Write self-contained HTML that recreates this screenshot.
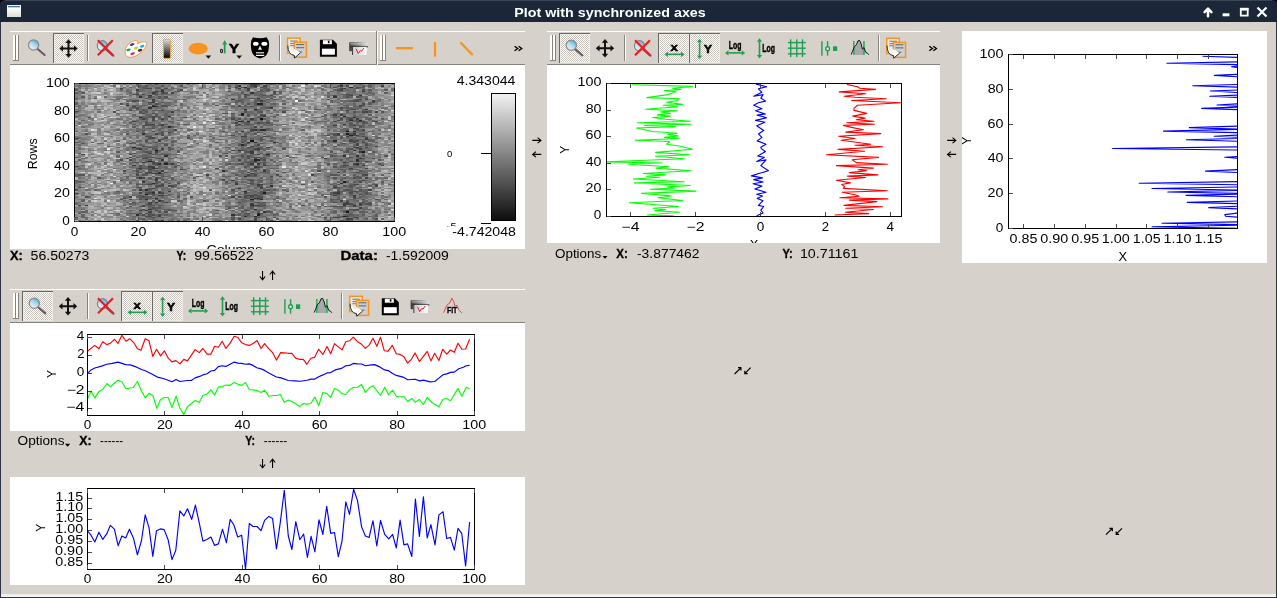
<!DOCTYPE html>
<html><head><meta charset="utf-8"><title>Plot with synchronized axes</title>
<style>
html,body{margin:0;padding:0;width:1277px;height:598px;overflow:hidden;background:#d6d2cb;}
svg{display:block;font-family:"Liberation Sans", sans-serif;will-change:transform;}
</style></head><body>
<svg width="1277" height="598" viewBox="0 0 1277 598">
<rect x="0" y="0" width="1277" height="598" fill="#d6d2cb"/>
<rect x="0" y="0" width="6" height="6" fill="#000"/>
<rect x="1271" y="0" width="6" height="6" fill="#000"/>
<path d="M0 22V5Q0 0 5 0H1272Q1277 0 1277 5V22Z" fill="#1b2639"/>
<rect x="5" y="0" width="1267" height="1" fill="#3b4558"/>
<rect x="0" y="22" width="1" height="576" fill="#2a3444"/>
<rect x="1276" y="22" width="1" height="576" fill="#2a3444"/>
<rect x="1" y="594" width="1275" height="3" fill="#efeeeb"/>
<rect x="1" y="596" width="1275" height="1" fill="#fafaf9"/>
<rect x="0" y="597" width="1277" height="1" fill="#2a3444"/>
<rect x="7" y="5" width="14" height="12" fill="url(#wicon)"/>
<rect x="8" y="6" width="12" height="1.3" fill="#4a6fb0"/>
<text x="610.00" y="17.20" font-size="13" text-anchor="middle" font-weight="bold" textLength="191.50" lengthAdjust="spacingAndGlyphs" fill="#fff" >Plot with synchronized axes</text>
<path d="M1208 16.2V10.5M1204.6 12.2L1208 8.6L1211.4 12.2" stroke="#fff" stroke-width="2.5" fill="none" stroke-linejoin="round" stroke-linecap="round"/>
<rect x="1222.6" y="13.3" width="6.8" height="3" fill="#fff"/>
<rect x="1240.8" y="8.7" width="6.9" height="6.9" fill="none" stroke="#fff" stroke-width="1.8"/>
<rect x="1240" y="8" width="8.4" height="2.6" fill="#fff"/>
<path d="M1257.5 7.5L1266.5 16.5M1266.5 7.5L1257.5 16.5" stroke="#fff" stroke-width="2.2"/>
<defs><pattern id="chk" width="2" height="2" patternUnits="userSpaceOnUse"><rect width="2" height="2" fill="#ffffff"/><rect width="1" height="1" fill="#c9c5be"/><rect x="1" y="1" width="1" height="1" fill="#c9c5be"/></pattern><linearGradient id="lens" x1="0.75" y1="0.1" x2="0.2" y2="0.9"><stop offset="0" stop-color="#4ab4e4"/><stop offset="0.4" stop-color="#a9d8ec"/><stop offset="1" stop-color="#f4f6f4"/></linearGradient><linearGradient id="cbg" x1="0" y1="0" x2="0" y2="1"><stop offset="0" stop-color="#ddd"/><stop offset="1" stop-color="#000"/></linearGradient><linearGradient id="wicon" x1="0" y1="0" x2="0" y2="1"><stop offset="0" stop-color="#f4f4f2"/><stop offset="0.3" stop-color="#ffffff"/><stop offset="1" stop-color="#dcdcd6"/></linearGradient><linearGradient id="cbar" x1="0" y1="0" x2="0" y2="1"><stop offset="0" stop-color="#f2f2f2"/><stop offset="1" stop-color="#0d0d0d"/></linearGradient><linearGradient id="prh" x1="0" y1="0" x2="1" y2="0"><stop offset="0" stop-color="#3c3c3c"/><stop offset="0.5" stop-color="#8a8a8a"/><stop offset="1" stop-color="#e0e0e0"/></linearGradient><linearGradient id="prp" x1="0" y1="0" x2="1" y2="0"><stop offset="0" stop-color="#c8c8c8"/><stop offset="1" stop-color="#ffffff"/></linearGradient><clipPath id="c4"><rect x="607" y="84" width="294" height="132"/></clipPath><clipPath id="c2"><rect x="88" y="335" width="386" height="80"/></clipPath><clipPath id="c3"><rect x="88" y="489" width="386" height="80"/></clipPath><clipPath id="c5"><rect x="1009" y="55" width="228" height="173"/></clipPath><clipPath id="p1"><rect x="10" y="65" width="515" height="184"/></clipPath><clipPath id="p4"><rect x="547" y="65" width="393" height="178"/></clipPath></defs>
<rect x="10" y="31" width="366" height="1" fill="#fff"/>
<rect x="10" y="64" width="366" height="1" fill="#86837d"/>
<rect x="376" y="31" width="1" height="34" fill="#86837d"/>
<rect x="377" y="31" width="1" height="34" fill="#fff"/>
<rect x="378" y="31" width="147" height="1" fill="#fff"/>
<rect x="378" y="64" width="147" height="1" fill="#86837d"/>
<rect x="13" y="35" width="2" height="26" fill="#fff"/>
<rect x="15" y="35" width="1" height="26" fill="#86837d"/>
<rect x="16" y="35" width="2" height="26" fill="#fff"/>
<rect x="18" y="35" width="1" height="26" fill="#86837d"/>
<rect x="13" y="60" width="6" height="1" fill="#86837d"/>
<line x1="37.1" y1="48.5" x2="44.6" y2="55" stroke="#6e5a66" stroke-width="2.2" stroke-linecap="round"/>
<circle cx="33.6" cy="45" r="5.1" fill="url(#lens)" stroke="#8f8489" stroke-width="1.2"/>
<rect x="53" y="33" width="31" height="30" fill="url(#chk)"/>
<rect x="54" y="34" width="29" height="1" fill="#ecebe7"/>
<rect x="54" y="34" width="1" height="28" fill="#ecebe7"/>
<rect x="53" y="33" width="31" height="1" fill="#6a6762"/>
<rect x="53" y="33" width="1" height="30" fill="#6a6762"/>
<rect x="83" y="34" width="1" height="29" fill="#ecebe8"/>
<rect x="54" y="62" width="30" height="1" fill="#ecebe8"/>
<path d="M68.5 41.5V55.5M61.5 48.5H75.5" stroke="#111" stroke-width="2"/>
<path d="M65.3 43.0L68.5 39.3L71.7 43.0Z M65.3 54.0L68.5 57.7L71.7 54.0Z M63.0 45.3L59.3 48.5L63.0 51.7Z M74.0 45.3L77.7 48.5L74.0 51.7Z" fill="#111"/>
<rect x="87" y="35" width="1" height="26" fill="#86837d"/>
<rect x="88" y="35" width="1" height="26" fill="#fff"/>
<line x1="105.8" y1="49.2" x2="113.3" y2="55.7" stroke="#6e5a66" stroke-width="2.2" stroke-linecap="round"/>
<circle cx="102.3" cy="45.7" r="5.1" fill="url(#lens)" stroke="#8f8489" stroke-width="1.2"/>
<path d="M97.8 40.2L112.8 55.2M112.8 40.2L97.8 55.2" stroke="#ec1c24" stroke-width="2.2"/>
<path d="M125.2 50.7C126.2 44.7 131.2 40.7 136.2 40.5C138.2 40.5 138.2 42.7 137.2 44.2C140.2 41.7 145.2 40.7 146.4 43.2C147.2 46.7 141.2 54.7 132.2 57.2C126.2 58.2 124.5 53.7 125.2 50.7Z" fill="#fff" stroke="#f39a3a" stroke-width="1"/>
<ellipse cx="132.2" cy="44.5" rx="2.3" ry="1.25" transform="rotate(-17 132.2 44.5)" fill="#6a2aa8"/>
<ellipse cx="136.1" cy="48.0" rx="2.3" ry="1.25" transform="rotate(-17 136.1 48.0)" fill="#c5d417"/>
<ellipse cx="142.2" cy="46.2" rx="2.3" ry="1.25" transform="rotate(-17 142.2 46.2)" fill="#1ea8e6"/>
<ellipse cx="128.5" cy="49.900000000000006" rx="2.3" ry="1.25" transform="rotate(-17 128.5 49.900000000000006)" fill="#16a340"/>
<ellipse cx="140.0" cy="50.300000000000004" rx="2.3" ry="1.25" transform="rotate(-17 140.0 50.300000000000004)" fill="#333"/>
<ellipse cx="132.6" cy="53.6" rx="2.3" ry="1.25" transform="rotate(-17 132.6 53.6)" fill="#e8127a"/>
<rect x="152" y="33" width="31" height="30" fill="url(#chk)"/>
<rect x="153" y="34" width="29" height="1" fill="#ecebe7"/>
<rect x="153" y="34" width="1" height="28" fill="#ecebe7"/>
<rect x="152" y="33" width="31" height="1" fill="#6a6762"/>
<rect x="152" y="33" width="1" height="30" fill="#6a6762"/>
<rect x="182" y="34" width="1" height="29" fill="#ecebe8"/>
<rect x="153" y="62" width="30" height="1" fill="#ecebe8"/>
<rect x="163.4" y="39.3" width="7" height="19" rx="1" fill="url(#cbg)" stroke="#f3a03c" stroke-width="1"/>
<rect x="170.4" y="41.3" width="1.6" height="1" fill="#f3a03c"/>
<rect x="170.4" y="45.9" width="1.6" height="1" fill="#f3a03c"/>
<rect x="170.4" y="50.5" width="1.6" height="1" fill="#f3a03c"/>
<rect x="170.4" y="55.099999999999994" width="1.6" height="1" fill="#f3a03c"/>
<ellipse cx="198.2" cy="48.699999999999996" rx="9.6" ry="5.9" fill="#f7941d"/>
<path d="M205.6 55.5H211.2L208.4 58.8Z" fill="#111"/>
<text x="220.00" y="53.40" font-size="6" text-anchor="start" font-weight="bold" textLength="3.00" lengthAdjust="spacingAndGlyphs" stroke="#000" stroke-width="0.3">0</text>
<path d="M224.7 53.4V42.4" stroke="#1ca050" stroke-width="1.8"/>
<path d="M222.3 44.4L224.7 39.9L227.1 44.4Z" fill="#1ca050"/>
<text x="229.00" y="53.40" font-size="13.5" text-anchor="start" font-weight="bold" textLength="10.00" lengthAdjust="spacingAndGlyphs" stroke="#000" stroke-width="0.7">Y</text>
<path d="M236.4 55.4H242L239.2 58.7Z" fill="#111"/>
<path d="M253.0 37.2Q260.0 39.4 266.59999999999997 37.2Q269.8 41 268.9 47Q268.8 57 260.0 58.4Q251.2 57 251.0 47Q250.2 41 253.0 37.2Z" fill="#000"/>
<ellipse cx="255.79999999999998" cy="43.7" rx="2.8" ry="2.0" fill="#fff"/>
<ellipse cx="264.4" cy="43.7" rx="3.0" ry="2.0" fill="#fff"/>
<path d="M260.0 46.2L261.59999999999997 49.6H258.4Z" fill="#fff" stroke="#fff" stroke-width="0.5" stroke-linejoin="round"/>
<rect x="256.0" y="52.2" width="8" height="1.2" fill="#e8e8e8"/>
<rect x="256.0" y="54.8" width="8.2" height="1.2" fill="#fff"/>
<rect x="279" y="35" width="1" height="26" fill="#86837d"/>
<rect x="280" y="35" width="1" height="26" fill="#fff"/>
<rect x="287.5" y="38.1" width="12.6" height="15.2" fill="#e9ebef" stroke="#f7941d" stroke-width="1.5"/>
<rect x="290.20000000000005" y="40.5" width="7.7" height="1.1" fill="#7d7d80"/>
<rect x="290.20000000000005" y="42.900000000000006" width="7.7" height="1.1" fill="#7d7d80"/>
<rect x="290.20000000000005" y="45.0" width="6" height="1.1" fill="#7d7d80"/>
<rect x="294.20000000000005" y="42.2" width="12.2" height="15.0" fill="#cdcdd2" stroke="#f7941d" stroke-width="1.5"/>
<rect x="296.20000000000005" y="44.0" width="8" height="1.1" fill="#6d6d70"/>
<rect x="296.20000000000005" y="47.1" width="8" height="1.1" fill="#6d6d70"/>
<rect x="296.20000000000005" y="51.5" width="6" height="1.1" fill="#6d6d70"/>
<path d="M287.8 45.5Q289.6 50.0 293.40000000000003 51.0L293.20000000000005 48.2L300.40000000000003 52.800000000000004L294.6 58.0L294.3 55.400000000000006Q288.0 54.800000000000004 287.8 45.5Z" fill="#fff"/>
<path d="M287.8 45.5Q288.0 54.800000000000004 294.3 55.400000000000006L294.6 58.0L300.40000000000003 52.800000000000004" fill="none" stroke="#111" stroke-width="0.9"/>
<path d="M319.9 39.7H332.9L336.9 43.7V56.7H319.9Z" fill="#000"/>
<rect x="321.9" y="48.7" width="13" height="6" fill="#fff"/>
<rect x="322.9" y="40.2" width="9" height="4" fill="#fff"/>
<rect x="327.9" y="40.7" width="1.6" height="2.5" fill="#000"/>
<rect x="349.2" y="42.2" width="18.8" height="9" rx="0.8" fill="url(#prh)"/>
<rect x="350.2" y="43.2" width="17" height="1.3" fill="#e8e8e8" opacity="0.55"/>
<rect x="350.5" y="46.2" width="17.5" height="1.3" fill="#2a2a2a" opacity="0.8"/>
<rect x="352" y="47" width="14.5" height="8" fill="url(#prp)"/>
<rect x="352" y="47" width="0.9" height="8" fill="#333"/>
<path d="M356.2 48.8L358.2 53.6L360.4 50.4L361.6 51.2L363.9 48" stroke="#e8202a" stroke-width="1" fill="none" stroke-linejoin="round"/>
<rect x="380" y="35" width="2" height="26" fill="#fff"/>
<rect x="382" y="35" width="1" height="26" fill="#86837d"/>
<rect x="383" y="35" width="2" height="26" fill="#fff"/>
<rect x="385" y="35" width="1" height="26" fill="#86837d"/>
<rect x="380" y="60" width="6" height="1" fill="#86837d"/>
<rect x="396" y="47" width="17" height="2.4" fill="#f7941d"/>
<rect x="433.9" y="41.9" width="2.3" height="14.8" fill="#f7941d"/>
<line x1="461" y1="43" x2="472" y2="54.3" stroke="#f7941d" stroke-width="2.4" stroke-linecap="round"/>
<path d="M514.5999999999999 46.3L517.6999999999999 48.5L514.5999999999999 50.699999999999996M518.5999999999999 46.3L521.6999999999999 48.5L518.5999999999999 50.699999999999996" stroke="#000" stroke-width="1.4" fill="none"/>
<rect x="547" y="31" width="393" height="1" fill="#fff"/>
<rect x="547" y="64" width="393" height="1" fill="#86837d"/>
<rect x="550" y="35" width="2" height="26" fill="#fff"/>
<rect x="552" y="35" width="1" height="26" fill="#86837d"/>
<rect x="553" y="35" width="2" height="26" fill="#fff"/>
<rect x="555" y="35" width="1" height="26" fill="#86837d"/>
<rect x="550" y="60" width="6" height="1" fill="#86837d"/>
<rect x="559" y="33" width="31" height="30" fill="url(#chk)"/>
<rect x="560" y="34" width="29" height="1" fill="#ecebe7"/>
<rect x="560" y="34" width="1" height="28" fill="#ecebe7"/>
<rect x="559" y="33" width="31" height="1" fill="#6a6762"/>
<rect x="559" y="33" width="1" height="30" fill="#6a6762"/>
<rect x="589" y="34" width="1" height="29" fill="#ecebe8"/>
<rect x="560" y="62" width="30" height="1" fill="#ecebe8"/>
<line x1="574.8" y1="48.8" x2="582.3" y2="55.3" stroke="#6e5a66" stroke-width="2.2" stroke-linecap="round"/>
<circle cx="571.3" cy="45.3" r="5.1" fill="url(#lens)" stroke="#8f8489" stroke-width="1.2"/>
<path d="M605 41.2V55.2M598 48.2H612" stroke="#111" stroke-width="2"/>
<path d="M601.8 42.7L605 39.0L608.2 42.7Z M601.8 53.7L605 57.400000000000006L608.2 53.7Z M599.5 45.0L595.8 48.2L599.5 51.400000000000006Z M610.5 45.0L614.2 48.2L610.5 51.400000000000006Z" fill="#111"/>
<rect x="624" y="35" width="1" height="26" fill="#86837d"/>
<rect x="625" y="35" width="1" height="26" fill="#fff"/>
<line x1="643.0" y1="49.2" x2="650.5" y2="55.7" stroke="#6e5a66" stroke-width="2.2" stroke-linecap="round"/>
<circle cx="639.5" cy="45.7" r="5.1" fill="url(#lens)" stroke="#8f8489" stroke-width="1.2"/>
<path d="M635 40.2L650 55.2M650 40.2L635 55.2" stroke="#ec1c24" stroke-width="2.2"/>
<rect x="658" y="33" width="31" height="30" fill="url(#chk)"/>
<rect x="659" y="34" width="29" height="1" fill="#ecebe7"/>
<rect x="659" y="34" width="1" height="28" fill="#ecebe7"/>
<rect x="658" y="33" width="31" height="1" fill="#6a6762"/>
<rect x="658" y="33" width="1" height="30" fill="#6a6762"/>
<rect x="688" y="34" width="1" height="29" fill="#ecebe8"/>
<rect x="659" y="62" width="30" height="1" fill="#ecebe8"/>
<text x="670.40" y="51.00" font-size="9.8" text-anchor="start" font-weight="bold" textLength="7.30" lengthAdjust="spacingAndGlyphs" stroke="#000" stroke-width="0.6">X</text>
<path d="M668.0 54.3H681.0" stroke="#1ca050" stroke-width="1.6"/>
<path d="M664.5 54.3L668.0 51.699999999999996V56.9Z M684.5 54.3L681.0 51.699999999999996V56.9Z" fill="#1ca050"/>
<rect x="689" y="33" width="31" height="30" fill="url(#chk)"/>
<rect x="690" y="34" width="29" height="1" fill="#ecebe7"/>
<rect x="690" y="34" width="1" height="28" fill="#ecebe7"/>
<rect x="689" y="33" width="31" height="1" fill="#6a6762"/>
<rect x="689" y="33" width="1" height="30" fill="#6a6762"/>
<rect x="719" y="34" width="1" height="29" fill="#ecebe8"/>
<rect x="690" y="62" width="30" height="1" fill="#ecebe8"/>
<path d="M699.6 42.3V55.5" stroke="#1ca050" stroke-width="1.6"/>
<path d="M699.6 38.8L697.0 42.3H702.2Z M699.6 59L697.0 55.5H702.2Z" fill="#1ca050"/>
<text x="703.90" y="53.00" font-size="10.8" text-anchor="start" font-weight="bold" textLength="8.00" lengthAdjust="spacingAndGlyphs" stroke="#000" stroke-width="0.6">Y</text>
<text x="728.80" y="49.30" font-size="10" text-anchor="start" font-weight="bold" textLength="12.60" lengthAdjust="spacingAndGlyphs" stroke="#000" stroke-width="0.4">Log</text>
<path d="M728.5 52.9H741.7" stroke="#1ca050" stroke-width="1.6"/>
<path d="M725 52.9L728.5 50.3V55.5Z M745.2 52.9L741.7 50.3V55.5Z" fill="#1ca050"/>
<path d="M759.5 41.8V55.0" stroke="#1ca050" stroke-width="1.6"/>
<path d="M759.5 38.3L756.9 41.8H762.1Z M759.5 58.5L756.9 55.0H762.1Z" fill="#1ca050"/>
<text x="762.30" y="52.30" font-size="10" text-anchor="start" font-weight="bold" textLength="12.70" lengthAdjust="spacingAndGlyphs" stroke="#000" stroke-width="0.4">Log</text>
<rect x="789.9999999999999" y="39.3" width="1.4" height="17.8" fill="#1ca050"/>
<rect x="796.0999999999999" y="39.3" width="1.4" height="17.8" fill="#1ca050"/>
<rect x="801.8" y="39.3" width="1.4" height="17.8" fill="#1ca050"/>
<rect x="787.9" y="41.89999999999999" width="17.9" height="1.4" fill="#1ca050"/>
<rect x="787.9" y="47.49999999999999" width="17.9" height="1.4" fill="#1ca050"/>
<rect x="787.9" y="53.099999999999994" width="17.9" height="1.4" fill="#1ca050"/>
<rect x="821.1999999999999" y="41.2" width="1.4" height="14.5" fill="#1ca050"/>
<rect x="826.9" y="41.2" width="1.4" height="14.5" fill="#1ca050"/>
<circle cx="827.6" cy="48.7" r="1.9" fill="#fff" stroke="#1ca050" stroke-width="1.4"/>
<rect x="833.0" y="46.300000000000004" width="4.2" height="4.7" fill="#1ca050"/>
<path d="M853.80 54.90L853.80 48.30L854.60 46.40L856.40 44.80L858.00 40.80L859.60 40.40L861.20 44.00L862.40 49.20L864.00 47.60L864.00 54.90Z" fill="#a8a8ad"/>
<rect x="853.0" y="41.0" width="1.6" height="13.9" fill="#2bb35c"/>
<rect x="863.1" y="41.0" width="1.7" height="13.9" fill="#2bb35c"/>
<path d="M851.20 54.50L852.60 51.20L854.60 46.40L856.40 44.80L858.00 40.80L859.60 40.40L861.20 44.00L862.40 49.20L864.00 47.60L865.70 52.40L867.30 53.20L868.90 54.70" stroke="#151515" stroke-width="1.0" fill="none" stroke-linejoin="round"/>
<rect x="878" y="35" width="1" height="26" fill="#86837d"/>
<rect x="879" y="35" width="1" height="26" fill="#fff"/>
<rect x="886.6999999999999" y="38.3" width="12.6" height="15.2" fill="#e9ebef" stroke="#f7941d" stroke-width="1.5"/>
<rect x="889.4" y="40.699999999999996" width="7.7" height="1.1" fill="#7d7d80"/>
<rect x="889.4" y="43.1" width="7.7" height="1.1" fill="#7d7d80"/>
<rect x="889.4" y="45.2" width="6" height="1.1" fill="#7d7d80"/>
<rect x="893.4" y="42.4" width="12.2" height="15.0" fill="#cdcdd2" stroke="#f7941d" stroke-width="1.5"/>
<rect x="895.4" y="44.199999999999996" width="8" height="1.1" fill="#6d6d70"/>
<rect x="895.4" y="47.3" width="8" height="1.1" fill="#6d6d70"/>
<rect x="895.4" y="51.7" width="6" height="1.1" fill="#6d6d70"/>
<path d="M887.0 45.7Q888.8 50.2 892.5999999999999 51.2L892.4 48.4L899.5999999999999 53.0L893.8 58.2L893.5 55.599999999999994Q887.1999999999999 55.0 887.0 45.7Z" fill="#fff"/>
<path d="M887.0 45.7Q887.1999999999999 55.0 893.5 55.599999999999994L893.8 58.2L899.5999999999999 53.0" fill="none" stroke="#111" stroke-width="0.9"/>
<path d="M929.3 46.3L932.4 48.5L929.3 50.699999999999996M933.3 46.3L936.4 48.5L933.3 50.699999999999996" stroke="#000" stroke-width="1.4" fill="none"/>
<rect x="10" y="289" width="515" height="1" fill="#fff"/>
<rect x="10" y="322" width="515" height="1" fill="#86837d"/>
<rect x="13" y="293" width="2" height="26" fill="#fff"/>
<rect x="15" y="293" width="1" height="26" fill="#86837d"/>
<rect x="16" y="293" width="2" height="26" fill="#fff"/>
<rect x="18" y="293" width="1" height="26" fill="#86837d"/>
<rect x="13" y="318" width="6" height="1" fill="#86837d"/>
<rect x="22" y="291" width="31" height="30" fill="url(#chk)"/>
<rect x="23" y="292" width="29" height="1" fill="#ecebe7"/>
<rect x="23" y="292" width="1" height="28" fill="#ecebe7"/>
<rect x="22" y="291" width="31" height="1" fill="#6a6762"/>
<rect x="22" y="291" width="1" height="30" fill="#6a6762"/>
<rect x="52" y="292" width="1" height="29" fill="#ecebe8"/>
<rect x="23" y="320" width="30" height="1" fill="#ecebe8"/>
<line x1="37.8" y1="306.8" x2="45.3" y2="313.3" stroke="#6e5a66" stroke-width="2.2" stroke-linecap="round"/>
<circle cx="34.3" cy="303.3" r="5.1" fill="url(#lens)" stroke="#8f8489" stroke-width="1.2"/>
<path d="M68 299.2V313.2M61 306.2H75" stroke="#111" stroke-width="2"/>
<path d="M64.8 300.7L68 297.0L71.2 300.7Z M64.8 311.7L68 315.4L71.2 311.7Z M62.5 303.0L58.8 306.2L62.5 309.4Z M73.5 303.0L77.2 306.2L73.5 309.4Z" fill="#111"/>
<rect x="87" y="293" width="1" height="26" fill="#86837d"/>
<rect x="88" y="293" width="1" height="26" fill="#fff"/>
<line x1="106.0" y1="307.2" x2="113.5" y2="313.7" stroke="#6e5a66" stroke-width="2.2" stroke-linecap="round"/>
<circle cx="102.5" cy="303.7" r="5.1" fill="url(#lens)" stroke="#8f8489" stroke-width="1.2"/>
<path d="M98 298.2L113 313.2M113 298.2L98 313.2" stroke="#ec1c24" stroke-width="2.2"/>
<rect x="121" y="291" width="31" height="30" fill="url(#chk)"/>
<rect x="122" y="292" width="29" height="1" fill="#ecebe7"/>
<rect x="122" y="292" width="1" height="28" fill="#ecebe7"/>
<rect x="121" y="291" width="31" height="1" fill="#6a6762"/>
<rect x="121" y="291" width="1" height="30" fill="#6a6762"/>
<rect x="151" y="292" width="1" height="29" fill="#ecebe8"/>
<rect x="122" y="320" width="30" height="1" fill="#ecebe8"/>
<text x="133.40" y="309.00" font-size="9.8" text-anchor="start" font-weight="bold" textLength="7.30" lengthAdjust="spacingAndGlyphs" stroke="#000" stroke-width="0.6">X</text>
<path d="M131.0 312.3H144.0" stroke="#1ca050" stroke-width="1.6"/>
<path d="M127.5 312.3L131.0 309.7V314.90000000000003Z M147.5 312.3L144.0 309.7V314.90000000000003Z" fill="#1ca050"/>
<rect x="152" y="291" width="31" height="30" fill="url(#chk)"/>
<rect x="153" y="292" width="29" height="1" fill="#ecebe7"/>
<rect x="153" y="292" width="1" height="28" fill="#ecebe7"/>
<rect x="152" y="291" width="31" height="1" fill="#6a6762"/>
<rect x="152" y="291" width="1" height="30" fill="#6a6762"/>
<rect x="182" y="292" width="1" height="29" fill="#ecebe8"/>
<rect x="153" y="320" width="30" height="1" fill="#ecebe8"/>
<path d="M162.6 300.3V313.5" stroke="#1ca050" stroke-width="1.6"/>
<path d="M162.6 296.8L160.0 300.3H165.2Z M162.6 317L160.0 313.5H165.2Z" fill="#1ca050"/>
<text x="166.90" y="311.00" font-size="10.8" text-anchor="start" font-weight="bold" textLength="8.00" lengthAdjust="spacingAndGlyphs" stroke="#000" stroke-width="0.6">Y</text>
<text x="191.80" y="307.30" font-size="10" text-anchor="start" font-weight="bold" textLength="12.60" lengthAdjust="spacingAndGlyphs" stroke="#000" stroke-width="0.4">Log</text>
<path d="M191.5 310.9H204.7" stroke="#1ca050" stroke-width="1.6"/>
<path d="M188 310.9L191.5 308.29999999999995V313.5Z M208.2 310.9L204.7 308.29999999999995V313.5Z" fill="#1ca050"/>
<path d="M222.5 299.8V313.0" stroke="#1ca050" stroke-width="1.6"/>
<path d="M222.5 296.3L219.9 299.8H225.1Z M222.5 316.5L219.9 313.0H225.1Z" fill="#1ca050"/>
<text x="225.30" y="310.30" font-size="10" text-anchor="start" font-weight="bold" textLength="12.70" lengthAdjust="spacingAndGlyphs" stroke="#000" stroke-width="0.4">Log</text>
<rect x="253.00000000000003" y="297.3" width="1.4" height="17.8" fill="#1ca050"/>
<rect x="259.1" y="297.3" width="1.4" height="17.8" fill="#1ca050"/>
<rect x="264.8" y="297.3" width="1.4" height="17.8" fill="#1ca050"/>
<rect x="250.9" y="299.90000000000003" width="17.9" height="1.4" fill="#1ca050"/>
<rect x="250.9" y="305.5" width="17.9" height="1.4" fill="#1ca050"/>
<rect x="250.9" y="311.1" width="17.9" height="1.4" fill="#1ca050"/>
<rect x="284.2" y="299.2" width="1.4" height="14.5" fill="#1ca050"/>
<rect x="289.9" y="299.2" width="1.4" height="14.5" fill="#1ca050"/>
<circle cx="290.59999999999997" cy="306.7" r="1.9" fill="#fff" stroke="#1ca050" stroke-width="1.4"/>
<rect x="296.0" y="304.3" width="4.2" height="4.7" fill="#1ca050"/>
<path d="M316.80 312.90L316.80 306.30L317.60 304.40L319.40 302.80L321.00 298.80L322.60 298.40L324.20 302.00L325.40 307.20L327.00 305.60L327.00 312.90Z" fill="#a8a8ad"/>
<rect x="316.0" y="299.0" width="1.6" height="13.9" fill="#2bb35c"/>
<rect x="326.09999999999997" y="299.0" width="1.7" height="13.9" fill="#2bb35c"/>
<path d="M314.20 312.50L315.60 309.20L317.60 304.40L319.40 302.80L321.00 298.80L322.60 298.40L324.20 302.00L325.40 307.20L327.00 305.60L328.70 310.40L330.30 311.20L331.90 312.70" stroke="#151515" stroke-width="1.0" fill="none" stroke-linejoin="round"/>
<rect x="341" y="293" width="1" height="26" fill="#86837d"/>
<rect x="342" y="293" width="1" height="26" fill="#fff"/>
<rect x="349.7" y="296.29999999999995" width="12.6" height="15.2" fill="#e9ebef" stroke="#f7941d" stroke-width="1.5"/>
<rect x="352.40000000000003" y="298.7" width="7.7" height="1.1" fill="#7d7d80"/>
<rect x="352.40000000000003" y="301.09999999999997" width="7.7" height="1.1" fill="#7d7d80"/>
<rect x="352.40000000000003" y="303.2" width="6" height="1.1" fill="#7d7d80"/>
<rect x="356.40000000000003" y="300.4" width="12.2" height="15.0" fill="#cdcdd2" stroke="#f7941d" stroke-width="1.5"/>
<rect x="358.40000000000003" y="302.2" width="8" height="1.1" fill="#6d6d70"/>
<rect x="358.40000000000003" y="305.29999999999995" width="8" height="1.1" fill="#6d6d70"/>
<rect x="358.40000000000003" y="309.7" width="6" height="1.1" fill="#6d6d70"/>
<path d="M350.0 303.7Q351.8 308.2 355.6 309.2L355.40000000000003 306.4L362.6 311.0L356.8 316.2L356.5 313.59999999999997Q350.2 313.0 350.0 303.7Z" fill="#fff"/>
<path d="M350.0 303.7Q350.2 313.0 356.5 313.59999999999997L356.8 316.2L362.6 311.0" fill="none" stroke="#111" stroke-width="0.9"/>
<path d="M381.8 298.2H394.8L398.8 302.2V315.2H381.8Z" fill="#000"/>
<rect x="383.8" y="307.2" width="13" height="6" fill="#fff"/>
<rect x="384.8" y="298.7" width="9" height="4" fill="#fff"/>
<rect x="389.8" y="299.2" width="1.6" height="2.5" fill="#000"/>
<rect x="410.59999999999997" y="300.2" width="18.8" height="9" rx="0.8" fill="url(#prh)"/>
<rect x="411.59999999999997" y="301.2" width="17" height="1.3" fill="#e8e8e8" opacity="0.55"/>
<rect x="411.9" y="304.2" width="17.5" height="1.3" fill="#2a2a2a" opacity="0.8"/>
<rect x="413.4" y="305" width="14.5" height="8" fill="url(#prp)"/>
<rect x="413.4" y="305" width="0.9" height="8" fill="#333"/>
<path d="M417.59999999999997 306.8L419.59999999999997 311.6L421.79999999999995 308.4L423.0 309.2L425.29999999999995 306" stroke="#e8202a" stroke-width="1" fill="none" stroke-linejoin="round"/>
<path d="M443.60 312.60L446.90 305.10L449.70 303.00L451.80 298.10L453.70 301.40L454.80 306.00L457.20 305.30L458.60 309.80L460.00 311.20L461.90 312.80" stroke="#e8343c" stroke-width="0.9" fill="none" stroke-linejoin="round"/>
<rect x="447.0" y="306.0" width="10.6" height="6.8" fill="#ecebe7" opacity="0.7"/>
<text x="446.90" y="312.60" font-size="8.3" text-anchor="start" font-weight="bold" textLength="10.50" lengthAdjust="spacingAndGlyphs" stroke="#000" stroke-width="0.35">FIT</text>
<rect x="10" y="65" width="515" height="184" fill="#fff"/>
<g shape-rendering="crispEdges">
<g transform="translate(75 84) scale(3.19 1.37)">
<path fill="rgb(20,20,20)" d="M58 25h1v1h-1zM55 41h1v1h-1zM25 48h1v1h-1z"/>
<path fill="rgb(28,28,28)" d="M57 14h1v1h-1zM52 21h1v1h-1zM85 34h1v1h-1zM85 36h1v1h-1zM90 49h1v1h-1zM84 71h1v1h-1zM59 79h1v1h-1zM22 80h1v1h-1zM55 84h1v1h-1zM85 93h1v1h-1zM57 95h1v1h-1zM84 96h1v1h-1z"/>
<path fill="rgb(36,36,36)" d="M86 2h1v1h-1zM58 14h1v1h-1zM24 16h1v1h-1zM52 22h1v1h-1zM89 26h1v1h-1zM51 27h1v1h-1zM54 27h1v1h-1zM86 37h1v1h-1zM18 46h1v1h-1zM56 55h2v1h-2zM28 58h1v1h-1z"/>
<path fill="rgb(44,44,44)" d="M53 2h1v1h-1zM53 18h1v1h-1zM56 18h1v1h-1zM84 23h1v1h-1zM20 24h1v1h-1zM86 26h1v1h-1zM29 31h1v1h-1zM58 33h2v1h-2zM81 41h1v1h-1zM56 42h1v1h-1zM52 44h1v1h-1zM60 51h1v1h-1zM84 52h1v1h-1zM88 55h1v1h-1zM23 56h1v1h-1zM46 63h1v1h-1zM26 64h1v1h-1zM83 72h1v1h-1zM22 77h1v1h-1zM53 78h1v1h-1zM58 84h1v1h-1zM19 95h1v1h-1zM53 96h1v1h-1zM56 96h1v1h-1z"/>
<path fill="rgb(52,52,52)" d="M51 1h1v1h-1zM27 5h1v1h-1zM55 6h1v1h-1zM89 8h1v1h-1zM20 9h1v1h-1zM81 9h1v1h-1zM49 11h1v1h-1zM25 16h1v1h-1zM23 17h1v1h-1zM59 23h1v1h-1zM87 24h1v1h-1zM52 27h1v1h-1zM56 33h1v1h-1zM52 34h1v1h-1zM87 34h1v1h-1zM21 36h1v1h-1zM54 42h1v1h-1zM62 42h1v1h-1zM88 46h1v1h-1zM51 48h1v1h-1zM28 52h1v1h-1zM88 52h1v1h-1zM78 54h1v1h-1zM27 55h1v1h-1zM88 56h1v1h-1zM21 57h1v1h-1zM26 58h1v1h-1zM88 58h1v1h-1zM56 60h1v1h-1zM24 61h1v1h-1zM26 65h1v1h-1zM53 67h1v1h-1zM20 68h1v1h-1zM24 72h1v1h-1zM61 74h1v1h-1zM24 79h1v1h-1zM26 81h1v1h-1zM87 81h1v1h-1zM56 83h2v1h-2zM22 84h1v1h-1zM26 85h1v1h-1zM85 86h1v1h-1zM55 88h1v1h-1zM84 88h1v1h-1zM23 91h1v1h-1zM56 91h1v1h-1zM59 93h1v1h-1zM57 94h1v1h-1zM49 95h1v1h-1zM27 99h1v1h-1z"/>
<path fill="rgb(60,60,60)" d="M55 0h1v1h-1zM56 1h1v1h-1zM83 1h1v1h-1zM51 3h1v1h-1zM54 3h1v1h-1zM84 3h1v1h-1zM19 4h1v1h-1zM27 4h1v1h-1zM25 5h1v1h-1zM90 5h1v1h-1zM24 6h1v1h-1zM53 7h1v1h-1zM23 8h1v1h-1zM57 10h1v1h-1zM24 11h1v1h-1zM93 12h1v1h-1zM24 13h1v1h-1zM16 15h1v1h-1zM24 15h1v1h-1zM89 15h1v1h-1zM61 17h1v1h-1zM91 18h1v1h-1zM94 20h1v1h-1zM29 23h1v1h-1zM55 25h1v1h-1zM24 29h1v1h-1zM27 29h1v1h-1zM51 29h1v1h-1zM84 29h1v1h-1zM82 36h1v1h-1zM87 36h1v1h-1zM52 38h1v1h-1zM91 40h1v1h-1zM26 41h1v1h-1zM20 47h1v1h-1zM57 47h1v1h-1zM87 48h1v1h-1zM55 49h1v1h-1zM89 49h1v1h-1zM55 50h1v1h-1zM89 54h1v1h-1zM56 56h1v1h-1zM84 57h1v1h-1zM30 58h1v1h-1zM55 58h1v1h-1zM57 58h1v1h-1zM18 59h1v1h-1zM59 59h1v1h-1zM24 60h1v1h-1zM20 61h1v1h-1zM27 63h1v1h-1zM59 63h1v1h-1zM54 64h1v1h-1zM82 64h1v1h-1zM24 65h2v1h-2zM25 69h1v1h-1zM46 69h1v1h-1zM25 70h1v1h-1zM49 70h1v1h-1zM21 71h1v1h-1zM50 72h1v1h-1zM50 73h1v1h-1zM57 73h1v1h-1zM58 75h1v1h-1zM24 76h1v1h-1zM51 76h1v1h-1zM20 77h1v1h-1zM29 78h1v1h-1zM26 79h1v1h-1zM82 79h1v1h-1zM54 81h1v1h-1zM25 83h1v1h-1zM23 86h1v1h-1zM25 86h1v1h-1zM55 87h1v1h-1zM84 87h1v1h-1zM89 87h1v1h-1zM3 88h1v1h-1zM87 88h1v1h-1zM88 91h1v1h-1zM22 92h1v1h-1zM26 96h1v1h-1zM85 98h1v1h-1z"/>
<path fill="rgb(68,68,68)" d="M56 0h2v1h-2zM59 1h1v1h-1zM96 1h1v1h-1zM50 2h1v1h-1zM14 3h1v1h-1zM83 3h1v1h-1zM54 4h1v1h-1zM83 4h1v1h-1zM48 5h1v1h-1zM30 6h1v1h-1zM19 7h1v1h-1zM21 7h1v1h-1zM79 11h1v1h-1zM89 11h1v1h-1zM91 11h1v1h-1zM24 12h1v1h-1zM58 12h1v1h-1zM23 13h1v1h-1zM18 16h1v1h-1zM51 16h1v1h-1zM87 18h1v1h-1zM85 19h1v1h-1zM30 20h1v1h-1zM91 20h1v1h-1zM21 21h1v1h-1zM81 22h1v1h-1zM83 22h1v1h-1zM24 24h1v1h-1zM34 24h1v1h-1zM21 25h1v1h-1zM27 25h1v1h-1zM86 25h1v1h-1zM88 25h1v1h-1zM18 27h1v1h-1zM81 27h1v1h-1zM89 27h1v1h-1zM50 28h1v1h-1zM27 30h1v1h-1zM50 30h1v1h-1zM81 30h1v1h-1zM87 30h1v1h-1zM56 31h1v1h-1zM87 32h1v1h-1zM31 33h1v1h-1zM55 33h1v1h-1zM29 35h1v1h-1zM25 36h1v1h-1zM87 37h2v1h-2zM53 38h1v1h-1zM59 38h1v1h-1zM85 38h1v1h-1zM24 39h1v1h-1zM91 39h1v1h-1zM86 41h1v1h-1zM52 42h1v1h-1zM90 42h1v1h-1zM88 44h1v1h-1zM21 45h1v1h-1zM94 45h1v1h-1zM29 46h1v1h-1zM54 46h1v1h-1zM27 47h1v1h-1zM56 47h1v1h-1zM89 47h1v1h-1zM49 48h1v1h-1zM52 48h1v1h-1zM25 49h1v1h-1zM23 50h1v1h-1zM17 53h1v1h-1zM16 54h1v1h-1zM56 54h1v1h-1zM17 55h1v1h-1zM51 55h1v1h-1zM24 57h1v1h-1zM87 58h1v1h-1zM90 59h1v1h-1zM23 60h1v1h-1zM57 60h1v1h-1zM25 61h1v1h-1zM86 61h1v1h-1zM91 61h1v1h-1zM23 62h1v1h-1zM33 62h1v1h-1zM23 64h1v1h-1zM55 65h1v1h-1zM41 66h1v1h-1zM54 66h1v1h-1zM74 66h1v1h-1zM91 66h1v1h-1zM21 68h1v1h-1zM25 68h1v1h-1zM91 68h1v1h-1zM90 70h1v1h-1zM23 73h1v1h-1zM27 73h1v1h-1zM58 73h1v1h-1zM88 73h1v1h-1zM29 74h1v1h-1zM57 74h1v1h-1zM94 74h1v1h-1zM20 75h1v1h-1zM81 75h1v1h-1zM58 76h1v1h-1zM92 77h1v1h-1zM87 78h1v1h-1zM20 79h1v1h-1zM53 79h1v1h-1zM81 79h1v1h-1zM89 80h1v1h-1zM55 81h1v1h-1zM81 81h1v1h-1zM17 82h1v1h-1zM49 82h1v1h-1zM51 82h1v1h-1zM87 82h1v1h-1zM83 85h1v1h-1zM28 86h1v1h-1zM23 87h1v1h-1zM85 87h1v1h-1zM56 88h2v1h-2zM59 88h1v1h-1zM21 89h1v1h-1zM87 89h1v1h-1zM89 90h1v1h-1zM20 92h1v1h-1zM85 92h1v1h-1zM23 93h1v1h-1zM26 95h1v1h-1zM85 96h1v1h-1zM81 97h2v1h-2zM88 97h1v1h-1zM51 98h1v1h-1zM56 98h1v1h-1zM86 98h1v1h-1zM25 99h1v1h-1zM56 99h1v1h-1zM61 99h1v1h-1z"/>
<path fill="rgb(76,76,76)" d="M25 0h1v1h-1zM55 1h1v1h-1zM85 1h1v1h-1zM56 2h1v1h-1zM58 2h1v1h-1zM81 2h1v1h-1zM88 2h1v1h-1zM22 3h2v1h-2zM28 3h1v1h-1zM48 3h1v1h-1zM88 3h1v1h-1zM33 4h1v1h-1zM90 4h1v1h-1zM62 5h1v1h-1zM27 6h1v1h-1zM62 6h1v1h-1zM18 7h1v1h-1zM85 7h1v1h-1zM61 8h1v1h-1zM81 8h1v1h-1zM86 8h1v1h-1zM23 9h1v1h-1zM88 9h1v1h-1zM22 10h1v1h-1zM55 10h1v1h-1zM18 12h1v1h-1zM87 12h2v1h-2zM93 13h1v1h-1zM25 14h1v1h-1zM90 14h1v1h-1zM27 15h1v1h-1zM89 16h1v1h-1zM19 17h1v1h-1zM83 17h1v1h-1zM86 18h1v1h-1zM17 19h1v1h-1zM21 19h1v1h-1zM27 19h1v1h-1zM56 19h1v1h-1zM12 20h1v1h-1zM20 20h1v1h-1zM65 20h1v1h-1zM90 20h1v1h-1zM24 21h1v1h-1zM58 22h2v1h-2zM24 23h1v1h-1zM57 24h1v1h-1zM85 24h1v1h-1zM24 25h1v1h-1zM49 25h1v1h-1zM83 25h1v1h-1zM24 26h1v1h-1zM50 26h1v1h-1zM82 26h1v1h-1zM88 27h1v1h-1zM90 27h1v1h-1zM93 27h2v1h-2zM57 28h1v1h-1zM60 28h1v1h-1zM22 29h2v1h-2zM22 30h1v1h-1zM26 30h1v1h-1zM88 32h1v1h-1zM90 33h1v1h-1zM19 34h1v1h-1zM27 37h1v1h-1zM49 37h1v1h-1zM79 37h1v1h-1zM81 37h2v1h-2zM22 38h1v1h-1zM90 38h1v1h-1zM23 39h1v1h-1zM28 39h1v1h-1zM35 39h1v1h-1zM27 40h1v1h-1zM22 41h1v1h-1zM87 41h2v1h-2zM25 42h1v1h-1zM87 42h1v1h-1zM17 43h1v1h-1zM84 43h1v1h-1zM88 43h1v1h-1zM57 44h1v1h-1zM91 44h1v1h-1zM55 45h1v1h-1zM23 46h1v1h-1zM60 46h1v1h-1zM87 46h1v1h-1zM91 46h1v1h-1zM19 47h1v1h-1zM22 49h1v1h-1zM54 49h1v1h-1zM2 51h1v1h-1zM17 51h1v1h-1zM57 51h1v1h-1zM45 52h1v1h-1zM52 52h1v1h-1zM54 52h1v1h-1zM66 52h1v1h-1zM22 53h1v1h-1zM57 53h1v1h-1zM86 53h1v1h-1zM21 54h1v1h-1zM26 54h1v1h-1zM54 54h1v1h-1zM58 54h1v1h-1zM90 54h1v1h-1zM93 54h1v1h-1zM14 55h1v1h-1zM59 55h1v1h-1zM22 56h1v1h-1zM24 56h1v1h-1zM86 56h1v1h-1zM91 56h1v1h-1zM19 57h1v1h-1zM28 57h1v1h-1zM54 57h1v1h-1zM25 58h1v1h-1zM52 58h1v1h-1zM20 59h1v1h-1zM84 59h2v1h-2zM88 59h1v1h-1zM96 59h1v1h-1zM44 61h1v1h-1zM20 62h1v1h-1zM55 62h1v1h-1zM59 62h1v1h-1zM15 63h1v1h-1zM19 63h1v1h-1zM76 63h1v1h-1zM22 64h1v1h-1zM88 64h1v1h-1zM22 65h1v1h-1zM19 66h1v1h-1zM56 66h1v1h-1zM63 66h1v1h-1zM90 66h1v1h-1zM61 67h1v1h-1zM55 70h1v1h-1zM58 70h1v1h-1zM89 71h1v1h-1zM25 72h1v1h-1zM32 72h1v1h-1zM71 73h1v1h-1zM87 73h1v1h-1zM94 73h1v1h-1zM26 74h2v1h-2zM30 74h1v1h-1zM84 74h1v1h-1zM1 75h1v1h-1zM85 77h1v1h-1zM26 78h1v1h-1zM82 78h1v1h-1zM23 79h1v1h-1zM27 79h1v1h-1zM86 79h1v1h-1zM82 80h1v1h-1zM20 81h1v1h-1zM27 81h1v1h-1zM56 81h1v1h-1zM3 82h1v1h-1zM21 82h1v1h-1zM53 82h1v1h-1zM55 82h1v1h-1zM58 82h1v1h-1zM15 83h1v1h-1zM63 83h1v1h-1zM17 84h1v1h-1zM25 84h1v1h-1zM94 84h1v1h-1zM51 86h1v1h-1zM81 86h1v1h-1zM90 86h1v1h-1zM86 87h1v1h-1zM92 87h1v1h-1zM1 88h1v1h-1zM21 88h1v1h-1zM71 88h1v1h-1zM89 88h1v1h-1zM17 89h1v1h-1zM55 89h1v1h-1zM58 89h1v1h-1zM81 89h1v1h-1zM21 91h1v1h-1zM86 91h1v1h-1zM25 92h1v1h-1zM31 92h1v1h-1zM53 92h2v1h-2zM87 92h1v1h-1zM28 93h1v1h-1zM20 94h1v1h-1zM54 94h1v1h-1zM58 94h1v1h-1zM21 95h1v1h-1zM24 95h1v1h-1zM23 96h1v1h-1zM24 97h1v1h-1zM78 97h1v1h-1zM87 97h1v1h-1zM94 98h1v1h-1zM19 99h1v1h-1z"/>
<path fill="rgb(84,84,84)" d="M72 0h1v1h-1zM83 0h1v1h-1zM89 0h1v1h-1zM22 1h1v1h-1zM27 1h1v1h-1zM33 1h1v1h-1zM21 2h1v1h-1zM52 2h1v1h-1zM89 2h1v1h-1zM26 3h1v1h-1zM59 3h1v1h-1zM60 4h1v1h-1zM82 4h1v1h-1zM32 5h1v1h-1zM57 5h1v1h-1zM25 6h1v1h-1zM28 6h1v1h-1zM24 7h1v1h-1zM86 7h1v1h-1zM53 8h2v1h-2zM59 8h1v1h-1zM26 9h1v1h-1zM28 9h1v1h-1zM53 9h1v1h-1zM85 9h1v1h-1zM26 10h1v1h-1zM61 10h1v1h-1zM52 11h1v1h-1zM57 11h1v1h-1zM62 11h1v1h-1zM88 11h1v1h-1zM19 12h1v1h-1zM51 12h1v1h-1zM27 13h1v1h-1zM52 13h1v1h-1zM56 13h1v1h-1zM14 14h1v1h-1zM54 14h1v1h-1zM28 15h1v1h-1zM44 15h1v1h-1zM51 15h1v1h-1zM58 15h1v1h-1zM90 15h1v1h-1zM27 16h2v1h-2zM55 16h1v1h-1zM60 17h1v1h-1zM17 18h1v1h-1zM57 18h1v1h-1zM75 18h1v1h-1zM90 18h1v1h-1zM53 19h1v1h-1zM22 20h1v1h-1zM53 20h1v1h-1zM58 20h1v1h-1zM87 20h1v1h-1zM96 20h1v1h-1zM46 21h2v1h-2zM49 21h1v1h-1zM25 22h1v1h-1zM54 22h1v1h-1zM54 23h1v1h-1zM58 23h1v1h-1zM62 23h1v1h-1zM77 23h1v1h-1zM4 24h1v1h-1zM26 24h1v1h-1zM94 24h1v1h-1zM51 25h1v1h-1zM55 26h1v1h-1zM85 27h1v1h-1zM22 28h1v1h-1zM54 28h1v1h-1zM58 28h1v1h-1zM90 28h1v1h-1zM53 29h2v1h-2zM86 29h1v1h-1zM21 30h1v1h-1zM23 30h1v1h-1zM90 30h1v1h-1zM30 31h1v1h-1zM89 31h1v1h-1zM24 32h1v1h-1zM57 33h1v1h-1zM85 33h1v1h-1zM88 33h1v1h-1zM24 34h1v1h-1zM46 34h1v1h-1zM50 34h1v1h-1zM55 34h1v1h-1zM27 35h1v1h-1zM54 35h1v1h-1zM57 35h1v1h-1zM3 36h1v1h-1zM16 36h1v1h-1zM27 36h1v1h-1zM56 36h1v1h-1zM81 36h1v1h-1zM86 36h1v1h-1zM35 37h1v1h-1zM23 38h1v1h-1zM60 38h1v1h-1zM58 39h1v1h-1zM83 39h1v1h-1zM26 40h1v1h-1zM58 40h1v1h-1zM86 40h1v1h-1zM61 41h1v1h-1zM79 41h1v1h-1zM5 42h1v1h-1zM44 42h1v1h-1zM63 42h1v1h-1zM2 43h1v1h-1zM54 43h1v1h-1zM58 43h1v1h-1zM91 43h1v1h-1zM28 44h1v1h-1zM51 44h1v1h-1zM53 44h1v1h-1zM25 45h1v1h-1zM81 45h1v1h-1zM89 45h1v1h-1zM58 46h1v1h-1zM65 47h1v1h-1zM86 47h1v1h-1zM55 48h1v1h-1zM57 48h1v1h-1zM85 48h1v1h-1zM32 49h1v1h-1zM53 49h1v1h-1zM80 49h1v1h-1zM85 49h1v1h-1zM93 49h1v1h-1zM18 50h1v1h-1zM47 50h1v1h-1zM28 51h1v1h-1zM56 51h1v1h-1zM90 51h1v1h-1zM99 51h1v1h-1zM47 52h1v1h-1zM80 52h1v1h-1zM90 52h1v1h-1zM97 52h1v1h-1zM0 53h1v1h-1zM19 53h1v1h-1zM23 53h2v1h-2zM49 53h1v1h-1zM54 53h1v1h-1zM56 53h1v1h-1zM67 53h1v1h-1zM77 53h1v1h-1zM22 54h1v1h-1zM85 54h1v1h-1zM23 55h1v1h-1zM83 55h1v1h-1zM95 55h1v1h-1zM55 56h1v1h-1zM64 56h1v1h-1zM18 57h1v1h-1zM56 57h1v1h-1zM58 57h1v1h-1zM85 57h1v1h-1zM24 58h1v1h-1zM48 58h1v1h-1zM51 58h1v1h-1zM59 58h1v1h-1zM79 58h1v1h-1zM95 58h1v1h-1zM63 59h1v1h-1zM20 60h1v1h-1zM31 60h1v1h-1zM53 60h1v1h-1zM81 60h1v1h-1zM19 61h1v1h-1zM21 61h3v1h-3zM86 62h1v1h-1zM56 63h1v1h-1zM89 63h1v1h-1zM20 64h1v1h-1zM28 64h1v1h-1zM58 64h1v1h-1zM19 65h1v1h-1zM27 65h1v1h-1zM1 66h2v1h-2zM21 66h1v1h-1zM50 66h1v1h-1zM80 66h2v1h-2zM84 66h1v1h-1zM64 67h1v1h-1zM79 67h1v1h-1zM88 67h1v1h-1zM19 68h1v1h-1zM26 68h1v1h-1zM81 68h1v1h-1zM87 68h1v1h-1zM89 68h1v1h-1zM54 69h1v1h-1zM0 70h1v1h-1zM14 70h1v1h-1zM47 71h1v1h-1zM29 72h1v1h-1zM55 72h1v1h-1zM61 72h1v1h-1zM19 73h1v1h-1zM22 73h1v1h-1zM82 73h1v1h-1zM25 74h1v1h-1zM58 74h1v1h-1zM81 74h1v1h-1zM86 74h1v1h-1zM19 75h1v1h-1zM60 75h1v1h-1zM82 75h1v1h-1zM86 75h1v1h-1zM23 76h1v1h-1zM0 77h1v1h-1zM49 77h1v1h-1zM60 77h1v1h-1zM89 77h1v1h-1zM24 78h1v1h-1zM58 78h2v1h-2zM86 78h1v1h-1zM88 78h1v1h-1zM22 79h1v1h-1zM58 79h1v1h-1zM91 79h1v1h-1zM56 80h1v1h-1zM91 80h1v1h-1zM24 81h1v1h-1zM53 81h1v1h-1zM57 81h1v1h-1zM32 82h1v1h-1zM36 82h1v1h-1zM57 82h1v1h-1zM78 82h1v1h-1zM20 83h1v1h-1zM22 83h1v1h-1zM24 83h1v1h-1zM54 83h1v1h-1zM58 83h1v1h-1zM87 83h1v1h-1zM14 84h1v1h-1zM20 84h1v1h-1zM80 84h1v1h-1zM82 84h1v1h-1zM90 84h1v1h-1zM27 85h1v1h-1zM85 85h1v1h-1zM18 86h1v1h-1zM56 86h2v1h-2zM59 86h1v1h-1zM91 87h1v1h-1zM24 88h1v1h-1zM26 88h1v1h-1zM20 89h1v1h-1zM50 89h1v1h-1zM52 89h1v1h-1zM76 89h1v1h-1zM82 89h2v1h-2zM24 90h1v1h-1zM26 90h1v1h-1zM48 90h1v1h-1zM29 91h1v1h-1zM87 91h1v1h-1zM29 92h1v1h-1zM26 93h1v1h-1zM60 93h1v1h-1zM1 94h1v1h-1zM22 94h2v1h-2zM53 94h1v1h-1zM23 95h1v1h-1zM22 96h1v1h-1zM83 96h1v1h-1zM0 97h1v1h-1zM49 97h1v1h-1zM57 97h1v1h-1zM62 97h1v1h-1zM21 98h1v1h-1zM49 98h1v1h-1zM79 99h1v1h-1zM83 99h1v1h-1z"/>
<path fill="rgb(92,92,92)" d="M19 0h1v1h-1zM61 0h1v1h-1zM48 1h1v1h-1zM82 1h1v1h-1zM90 1h1v1h-1zM92 1h1v1h-1zM25 2h2v1h-2zM59 2h1v1h-1zM90 2h1v1h-1zM21 3h1v1h-1zM25 3h1v1h-1zM0 4h1v1h-1zM58 4h1v1h-1zM92 4h1v1h-1zM97 4h1v1h-1zM1 5h1v1h-1zM20 5h1v1h-1zM26 5h1v1h-1zM31 5h1v1h-1zM58 5h1v1h-1zM0 6h1v1h-1zM2 6h1v1h-1zM19 6h1v1h-1zM52 6h1v1h-1zM64 6h1v1h-1zM97 6h1v1h-1zM25 7h1v1h-1zM27 7h1v1h-1zM49 7h1v1h-1zM58 7h1v1h-1zM62 7h1v1h-1zM83 7h1v1h-1zM93 7h1v1h-1zM20 8h1v1h-1zM58 8h1v1h-1zM85 8h1v1h-1zM2 9h1v1h-1zM79 9h1v1h-1zM89 9h1v1h-1zM0 10h1v1h-1zM6 10h1v1h-1zM28 10h1v1h-1zM56 10h1v1h-1zM91 10h1v1h-1zM60 11h1v1h-1zM50 12h1v1h-1zM56 12h2v1h-2zM59 12h1v1h-1zM80 12h1v1h-1zM86 12h1v1h-1zM0 13h1v1h-1zM29 13h1v1h-1zM50 13h1v1h-1zM92 13h1v1h-1zM0 14h1v1h-1zM16 14h1v1h-1zM23 14h1v1h-1zM56 14h1v1h-1zM62 14h1v1h-1zM65 14h1v1h-1zM92 14h1v1h-1zM29 15h1v1h-1zM53 15h1v1h-1zM56 15h1v1h-1zM79 15h1v1h-1zM49 16h1v1h-1zM53 16h1v1h-1zM87 16h1v1h-1zM18 17h1v1h-1zM85 17h1v1h-1zM19 18h1v1h-1zM21 18h1v1h-1zM24 19h1v1h-1zM26 19h1v1h-1zM60 19h1v1h-1zM71 19h1v1h-1zM83 19h1v1h-1zM92 19h1v1h-1zM57 20h1v1h-1zM85 20h1v1h-1zM92 20h1v1h-1zM61 21h1v1h-1zM63 22h1v1h-1zM78 22h1v1h-1zM92 22h1v1h-1zM23 23h1v1h-1zM25 23h1v1h-1zM87 23h1v1h-1zM21 24h3v1h-3zM49 24h1v1h-1zM81 24h1v1h-1zM91 24h1v1h-1zM22 25h1v1h-1zM44 25h1v1h-1zM59 25h1v1h-1zM85 25h1v1h-1zM92 25h1v1h-1zM96 25h1v1h-1zM56 26h1v1h-1zM58 26h1v1h-1zM62 26h1v1h-1zM74 26h1v1h-1zM83 26h1v1h-1zM87 26h2v1h-2zM19 27h1v1h-1zM22 27h1v1h-1zM29 27h2v1h-2zM87 27h1v1h-1zM17 28h1v1h-1zM53 28h1v1h-1zM86 28h1v1h-1zM91 28h1v1h-1zM18 29h1v1h-1zM26 29h1v1h-1zM28 29h1v1h-1zM34 29h1v1h-1zM55 29h1v1h-1zM61 29h1v1h-1zM19 30h1v1h-1zM24 30h1v1h-1zM52 30h1v1h-1zM86 30h1v1h-1zM88 30h2v1h-2zM18 31h1v1h-1zM21 31h1v1h-1zM24 31h1v1h-1zM58 31h1v1h-1zM23 32h1v1h-1zM27 32h1v1h-1zM53 32h1v1h-1zM60 32h1v1h-1zM84 32h1v1h-1zM26 33h1v1h-1zM36 33h1v1h-1zM60 33h1v1h-1zM71 33h1v1h-1zM90 34h1v1h-1zM26 35h1v1h-1zM87 35h1v1h-1zM53 36h1v1h-1zM89 36h2v1h-2zM53 37h1v1h-1zM78 37h1v1h-1zM89 38h1v1h-1zM61 39h1v1h-1zM95 39h1v1h-1zM22 40h1v1h-1zM55 40h1v1h-1zM57 40h1v1h-1zM59 40h1v1h-1zM89 40h1v1h-1zM92 40h1v1h-1zM53 41h1v1h-1zM58 41h1v1h-1zM92 41h2v1h-2zM0 42h1v1h-1zM18 42h1v1h-1zM30 42h1v1h-1zM94 42h1v1h-1zM18 43h1v1h-1zM28 43h1v1h-1zM51 43h1v1h-1zM53 43h1v1h-1zM64 43h1v1h-1zM83 43h1v1h-1zM20 44h1v1h-1zM77 44h1v1h-1zM82 44h1v1h-1zM10 45h1v1h-1zM22 45h1v1h-1zM56 45h1v1h-1zM24 46h1v1h-1zM55 46h1v1h-1zM22 47h1v1h-1zM24 47h2v1h-2zM29 47h2v1h-2zM58 47h1v1h-1zM85 47h1v1h-1zM16 48h1v1h-1zM21 48h1v1h-1zM26 48h1v1h-1zM29 48h1v1h-1zM53 48h1v1h-1zM59 48h1v1h-1zM83 48h1v1h-1zM92 48h1v1h-1zM13 49h1v1h-1zM23 49h1v1h-1zM51 49h1v1h-1zM1 50h1v1h-1zM25 50h1v1h-1zM46 50h1v1h-1zM58 50h1v1h-1zM60 50h1v1h-1zM62 50h1v1h-1zM81 50h1v1h-1zM24 51h4v1h-4zM59 51h1v1h-1zM60 52h1v1h-1zM81 52h1v1h-1zM31 53h1v1h-1zM55 53h1v1h-1zM59 53h1v1h-1zM68 53h1v1h-1zM88 53h1v1h-1zM18 54h1v1h-1zM25 54h1v1h-1zM29 54h1v1h-1zM59 54h1v1h-1zM1 55h1v1h-1zM58 55h1v1h-1zM61 55h1v1h-1zM53 56h1v1h-1zM62 56h1v1h-1zM89 56h1v1h-1zM92 56h1v1h-1zM22 57h1v1h-1zM25 57h1v1h-1zM32 57h1v1h-1zM53 57h1v1h-1zM55 57h1v1h-1zM59 57h1v1h-1zM29 58h1v1h-1zM54 58h1v1h-1zM81 58h1v1h-1zM32 59h1v1h-1zM54 59h2v1h-2zM87 59h1v1h-1zM58 60h1v1h-1zM83 60h2v1h-2zM55 61h2v1h-2zM61 61h1v1h-1zM57 62h1v1h-1zM82 62h2v1h-2zM23 63h1v1h-1zM25 63h1v1h-1zM84 63h1v1h-1zM65 64h1v1h-1zM84 64h1v1h-1zM87 64h1v1h-1zM91 64h1v1h-1zM15 65h1v1h-1zM23 65h1v1h-1zM52 65h1v1h-1zM56 65h1v1h-1zM89 65h1v1h-1zM22 66h1v1h-1zM55 66h1v1h-1zM82 66h1v1h-1zM87 66h1v1h-1zM96 66h1v1h-1zM27 67h1v1h-1zM38 67h1v1h-1zM46 67h1v1h-1zM54 67h3v1h-3zM7 68h1v1h-1zM23 68h1v1h-1zM30 68h1v1h-1zM37 68h1v1h-1zM58 68h1v1h-1zM84 68h1v1h-1zM88 68h1v1h-1zM27 69h1v1h-1zM30 69h1v1h-1zM55 69h1v1h-1zM83 69h1v1h-1zM21 70h1v1h-1zM27 70h1v1h-1zM46 70h1v1h-1zM83 70h1v1h-1zM93 70h1v1h-1zM1 71h1v1h-1zM25 71h2v1h-2zM50 71h1v1h-1zM55 71h1v1h-1zM74 71h1v1h-1zM85 71h1v1h-1zM87 71h1v1h-1zM96 71h1v1h-1zM23 72h1v1h-1zM54 72h1v1h-1zM21 73h1v1h-1zM55 73h1v1h-1zM80 73h1v1h-1zM86 73h1v1h-1zM93 73h1v1h-1zM98 73h1v1h-1zM31 74h1v1h-1zM92 74h1v1h-1zM25 75h1v1h-1zM30 75h1v1h-1zM83 75h1v1h-1zM89 75h1v1h-1zM50 76h1v1h-1zM81 76h1v1h-1zM88 76h1v1h-1zM23 77h1v1h-1zM42 77h1v1h-1zM59 77h1v1h-1zM62 77h1v1h-1zM82 77h1v1h-1zM84 77h1v1h-1zM86 77h1v1h-1zM91 77h1v1h-1zM13 78h1v1h-1zM56 78h1v1h-1zM66 78h1v1h-1zM83 78h1v1h-1zM89 78h2v1h-2zM80 79h1v1h-1zM24 80h2v1h-2zM27 80h1v1h-1zM58 80h2v1h-2zM81 80h1v1h-1zM92 80h1v1h-1zM28 81h1v1h-1zM32 81h1v1h-1zM19 82h2v1h-2zM22 82h2v1h-2zM27 82h1v1h-1zM89 82h1v1h-1zM53 83h1v1h-1zM88 83h1v1h-1zM52 84h1v1h-1zM57 84h1v1h-1zM62 84h1v1h-1zM81 84h1v1h-1zM95 84h1v1h-1zM2 85h1v1h-1zM24 85h1v1h-1zM32 85h1v1h-1zM40 85h1v1h-1zM55 85h1v1h-1zM80 85h1v1h-1zM20 86h1v1h-1zM63 86h1v1h-1zM84 86h1v1h-1zM92 86h1v1h-1zM17 87h1v1h-1zM58 87h1v1h-1zM23 88h1v1h-1zM58 88h1v1h-1zM23 89h1v1h-1zM57 89h1v1h-1zM67 89h1v1h-1zM78 89h1v1h-1zM80 89h1v1h-1zM84 89h1v1h-1zM25 90h1v1h-1zM52 90h1v1h-1zM55 90h1v1h-1zM24 91h1v1h-1zM28 91h1v1h-1zM47 91h1v1h-1zM53 91h1v1h-1zM17 92h1v1h-1zM30 92h1v1h-1zM44 92h1v1h-1zM49 92h1v1h-1zM57 92h2v1h-2zM84 92h1v1h-1zM88 92h1v1h-1zM2 93h1v1h-1zM52 93h1v1h-1zM57 93h1v1h-1zM61 93h1v1h-1zM81 93h1v1h-1zM84 93h1v1h-1zM89 93h2v1h-2zM93 93h1v1h-1zM17 94h2v1h-2zM51 94h1v1h-1zM63 94h1v1h-1zM86 94h1v1h-1zM28 95h1v1h-1zM51 95h1v1h-1zM53 95h2v1h-2zM62 95h1v1h-1zM85 95h2v1h-2zM90 95h1v1h-1zM94 95h1v1h-1zM59 96h1v1h-1zM94 96h1v1h-1zM27 97h1v1h-1zM56 97h1v1h-1zM60 98h1v1h-1zM63 98h1v1h-1zM91 98h1v1h-1zM96 98h1v1h-1zM32 99h1v1h-1zM34 99h1v1h-1zM85 99h1v1h-1z"/>
<path fill="rgb(100,100,100)" d="M35 0h1v1h-1zM62 0h1v1h-1zM64 0h1v1h-1zM20 1h1v1h-1zM50 1h1v1h-1zM17 2h1v1h-1zM20 2h1v1h-1zM22 2h1v1h-1zM30 2h1v1h-1zM34 2h1v1h-1zM54 2h2v1h-2zM66 2h1v1h-1zM30 3h1v1h-1zM50 3h1v1h-1zM53 3h1v1h-1zM60 3h1v1h-1zM87 3h1v1h-1zM14 4h1v1h-1zM32 4h1v1h-1zM81 4h1v1h-1zM85 4h1v1h-1zM16 5h1v1h-1zM19 5h1v1h-1zM59 5h2v1h-2zM63 5h2v1h-2zM80 5h1v1h-1zM82 5h2v1h-2zM87 5h1v1h-1zM17 6h1v1h-1zM56 6h1v1h-1zM79 6h1v1h-1zM92 6h1v1h-1zM26 7h1v1h-1zM41 7h1v1h-1zM51 7h1v1h-1zM54 7h1v1h-1zM56 7h2v1h-2zM84 7h1v1h-1zM88 7h1v1h-1zM91 7h1v1h-1zM17 8h1v1h-1zM19 8h1v1h-1zM25 8h1v1h-1zM48 8h1v1h-1zM51 8h1v1h-1zM56 8h2v1h-2zM60 8h1v1h-1zM84 8h1v1h-1zM51 9h1v1h-1zM58 9h1v1h-1zM60 9h1v1h-1zM62 9h1v1h-1zM84 9h1v1h-1zM86 9h1v1h-1zM47 10h1v1h-1zM51 10h1v1h-1zM54 10h1v1h-1zM80 10h1v1h-1zM15 11h1v1h-1zM17 11h1v1h-1zM27 11h1v1h-1zM34 11h1v1h-1zM51 11h1v1h-1zM63 11h1v1h-1zM95 11h1v1h-1zM16 12h1v1h-1zM21 12h1v1h-1zM52 12h1v1h-1zM70 12h1v1h-1zM85 12h1v1h-1zM89 12h1v1h-1zM28 13h1v1h-1zM58 13h1v1h-1zM60 13h1v1h-1zM80 13h1v1h-1zM84 13h1v1h-1zM26 14h1v1h-1zM33 14h1v1h-1zM47 14h2v1h-2zM61 14h1v1h-1zM87 14h1v1h-1zM18 15h2v1h-2zM21 15h2v1h-2zM31 15h1v1h-1zM57 15h1v1h-1zM84 15h2v1h-2zM87 15h1v1h-1zM20 16h1v1h-1zM23 16h1v1h-1zM52 16h1v1h-1zM54 16h1v1h-1zM59 16h1v1h-1zM61 16h1v1h-1zM79 16h1v1h-1zM85 16h1v1h-1zM92 16h1v1h-1zM58 17h2v1h-2zM84 17h1v1h-1zM86 17h1v1h-1zM88 17h2v1h-2zM7 18h1v1h-1zM20 18h1v1h-1zM22 18h1v1h-1zM27 18h1v1h-1zM76 18h1v1h-1zM83 18h1v1h-1zM22 19h1v1h-1zM25 19h1v1h-1zM32 19h1v1h-1zM57 19h1v1h-1zM62 19h1v1h-1zM82 19h1v1h-1zM90 19h1v1h-1zM29 20h1v1h-1zM54 20h1v1h-1zM88 20h1v1h-1zM20 21h1v1h-1zM28 21h1v1h-1zM55 21h1v1h-1zM81 21h3v1h-3zM90 21h1v1h-1zM18 22h1v1h-1zM22 22h2v1h-2zM28 22h1v1h-1zM51 22h1v1h-1zM56 22h1v1h-1zM80 22h1v1h-1zM84 22h1v1h-1zM87 22h1v1h-1zM0 23h1v1h-1zM19 23h1v1h-1zM21 23h1v1h-1zM26 23h1v1h-1zM28 23h1v1h-1zM49 23h1v1h-1zM81 23h2v1h-2zM88 23h1v1h-1zM99 23h1v1h-1zM28 24h1v1h-1zM30 24h1v1h-1zM58 24h1v1h-1zM83 24h2v1h-2zM86 24h1v1h-1zM20 25h1v1h-1zM26 25h1v1h-1zM28 25h1v1h-1zM47 25h1v1h-1zM53 25h1v1h-1zM56 25h1v1h-1zM91 25h1v1h-1zM2 26h1v1h-1zM19 26h1v1h-1zM27 26h1v1h-1zM32 26h1v1h-1zM52 26h1v1h-1zM60 26h1v1h-1zM93 26h1v1h-1zM21 27h1v1h-1zM24 27h1v1h-1zM27 27h1v1h-1zM60 27h1v1h-1zM76 27h1v1h-1zM78 27h1v1h-1zM49 28h1v1h-1zM56 28h1v1h-1zM59 28h1v1h-1zM88 28h1v1h-1zM94 28h1v1h-1zM32 29h1v1h-1zM59 29h1v1h-1zM62 29h1v1h-1zM65 29h1v1h-1zM81 29h1v1h-1zM87 29h1v1h-1zM15 30h1v1h-1zM25 30h1v1h-1zM51 30h1v1h-1zM54 30h1v1h-1zM59 30h3v1h-3zM84 30h1v1h-1zM92 30h2v1h-2zM27 31h2v1h-2zM48 31h1v1h-1zM86 31h1v1h-1zM90 31h1v1h-1zM19 32h1v1h-1zM22 32h1v1h-1zM43 32h1v1h-1zM50 32h1v1h-1zM54 32h2v1h-2zM21 33h1v1h-1zM61 33h1v1h-1zM79 33h1v1h-1zM83 33h2v1h-2zM89 33h1v1h-1zM95 33h1v1h-1zM0 34h1v1h-1zM16 34h1v1h-1zM21 34h1v1h-1zM27 34h1v1h-1zM30 34h1v1h-1zM62 34h1v1h-1zM82 34h1v1h-1zM84 34h1v1h-1zM89 34h1v1h-1zM92 34h2v1h-2zM15 35h1v1h-1zM21 35h1v1h-1zM47 35h1v1h-1zM50 35h1v1h-1zM58 35h1v1h-1zM26 36h1v1h-1zM29 36h1v1h-1zM51 36h1v1h-1zM80 36h1v1h-1zM22 37h2v1h-2zM37 37h1v1h-1zM57 37h1v1h-1zM84 37h1v1h-1zM28 38h1v1h-1zM42 38h1v1h-1zM83 38h1v1h-1zM86 38h1v1h-1zM88 38h1v1h-1zM43 39h1v1h-1zM52 39h2v1h-2zM55 39h1v1h-1zM62 39h1v1h-1zM80 39h1v1h-1zM85 39h1v1h-1zM87 39h1v1h-1zM94 39h1v1h-1zM0 40h1v1h-1zM15 40h1v1h-1zM23 40h1v1h-1zM52 40h2v1h-2zM81 40h1v1h-1zM87 40h2v1h-2zM13 41h1v1h-1zM19 41h2v1h-2zM30 41h2v1h-2zM52 41h1v1h-1zM80 41h1v1h-1zM84 41h1v1h-1zM90 41h1v1h-1zM1 42h1v1h-1zM22 42h1v1h-1zM24 42h1v1h-1zM75 42h1v1h-1zM81 42h1v1h-1zM7 43h1v1h-1zM23 43h1v1h-1zM26 43h2v1h-2zM34 43h1v1h-1zM38 43h1v1h-1zM72 43h1v1h-1zM30 44h1v1h-1zM56 44h1v1h-1zM78 44h1v1h-1zM87 44h1v1h-1zM92 44h1v1h-1zM24 45h1v1h-1zM52 45h1v1h-1zM57 45h1v1h-1zM86 45h2v1h-2zM19 46h1v1h-1zM47 46h2v1h-2zM50 46h1v1h-1zM52 46h1v1h-1zM57 46h1v1h-1zM61 46h1v1h-1zM89 46h1v1h-1zM1 47h1v1h-1zM18 47h1v1h-1zM52 47h4v1h-4zM59 47h2v1h-2zM88 47h1v1h-1zM27 48h1v1h-1zM32 48h1v1h-1zM62 48h1v1h-1zM89 48h1v1h-1zM21 49h1v1h-1zM84 49h1v1h-1zM17 50h1v1h-1zM27 50h1v1h-1zM61 50h1v1h-1zM86 50h2v1h-2zM92 50h1v1h-1zM21 51h2v1h-2zM29 51h2v1h-2zM32 51h1v1h-1zM53 51h1v1h-1zM55 51h1v1h-1zM69 51h1v1h-1zM79 51h2v1h-2zM86 51h1v1h-1zM93 51h1v1h-1zM13 52h1v1h-1zM18 52h1v1h-1zM21 52h2v1h-2zM55 52h1v1h-1zM73 52h1v1h-1zM21 53h1v1h-1zM27 53h1v1h-1zM52 53h2v1h-2zM58 53h1v1h-1zM89 53h1v1h-1zM91 53h1v1h-1zM95 53h1v1h-1zM30 54h1v1h-1zM47 54h1v1h-1zM88 54h1v1h-1zM53 55h1v1h-1zM55 55h1v1h-1zM81 55h1v1h-1zM13 56h1v1h-1zM20 56h1v1h-1zM26 56h1v1h-1zM51 56h1v1h-1zM59 56h1v1h-1zM6 57h1v1h-1zM26 57h1v1h-1zM52 57h1v1h-1zM57 57h1v1h-1zM78 57h1v1h-1zM17 58h1v1h-1zM47 58h1v1h-1zM50 58h1v1h-1zM84 58h1v1h-1zM89 58h2v1h-2zM2 59h1v1h-1zM23 59h1v1h-1zM25 59h2v1h-2zM31 59h1v1h-1zM42 59h1v1h-1zM47 59h1v1h-1zM57 59h1v1h-1zM60 59h1v1h-1zM76 59h1v1h-1zM79 59h1v1h-1zM83 59h1v1h-1zM21 60h2v1h-2zM26 60h1v1h-1zM28 60h1v1h-1zM89 60h1v1h-1zM1 61h1v1h-1zM26 61h1v1h-1zM28 61h1v1h-1zM57 61h1v1h-1zM63 61h1v1h-1zM19 62h1v1h-1zM24 62h1v1h-1zM29 62h1v1h-1zM34 62h1v1h-1zM78 62h1v1h-1zM84 62h1v1h-1zM88 62h1v1h-1zM24 63h1v1h-1zM47 63h1v1h-1zM52 63h2v1h-2zM60 63h1v1h-1zM63 63h1v1h-1zM90 63h1v1h-1zM11 64h1v1h-1zM19 64h1v1h-1zM51 64h1v1h-1zM59 64h2v1h-2zM90 64h1v1h-1zM49 65h1v1h-1zM60 65h1v1h-1zM98 65h1v1h-1zM0 66h1v1h-1zM26 66h2v1h-2zM53 66h1v1h-1zM93 66h1v1h-1zM0 67h1v1h-1zM16 67h1v1h-1zM24 67h1v1h-1zM28 67h1v1h-1zM48 67h1v1h-1zM51 67h1v1h-1zM87 67h1v1h-1zM90 67h1v1h-1zM16 68h1v1h-1zM61 68h1v1h-1zM94 68h1v1h-1zM97 68h1v1h-1zM23 69h1v1h-1zM28 69h1v1h-1zM45 69h1v1h-1zM52 69h1v1h-1zM57 69h1v1h-1zM61 69h1v1h-1zM65 69h1v1h-1zM18 70h1v1h-1zM37 70h1v1h-1zM54 70h1v1h-1zM57 70h1v1h-1zM61 70h1v1h-1zM79 70h1v1h-1zM88 70h2v1h-2zM91 70h1v1h-1zM28 71h1v1h-1zM32 71h1v1h-1zM52 71h1v1h-1zM57 71h2v1h-2zM64 71h1v1h-1zM82 71h1v1h-1zM17 72h1v1h-1zM19 72h1v1h-1zM27 72h1v1h-1zM47 72h1v1h-1zM81 72h1v1h-1zM20 73h1v1h-1zM24 73h1v1h-1zM31 73h1v1h-1zM59 73h1v1h-1zM87 74h1v1h-1zM35 75h1v1h-1zM76 75h1v1h-1zM85 75h1v1h-1zM88 75h1v1h-1zM93 75h1v1h-1zM20 76h1v1h-1zM25 76h1v1h-1zM27 76h1v1h-1zM32 76h1v1h-1zM47 76h1v1h-1zM56 76h1v1h-1zM82 76h1v1h-1zM6 77h1v1h-1zM18 77h1v1h-1zM21 77h1v1h-1zM54 77h1v1h-1zM65 77h1v1h-1zM79 77h1v1h-1zM90 77h1v1h-1zM23 78h1v1h-1zM49 78h1v1h-1zM52 78h1v1h-1zM84 78h1v1h-1zM91 78h1v1h-1zM54 79h1v1h-1zM57 79h1v1h-1zM60 79h2v1h-2zM83 79h1v1h-1zM88 79h1v1h-1zM90 79h1v1h-1zM19 80h1v1h-1zM23 80h1v1h-1zM29 80h1v1h-1zM53 80h1v1h-1zM77 80h1v1h-1zM79 80h2v1h-2zM86 80h1v1h-1zM90 80h1v1h-1zM18 81h1v1h-1zM21 81h1v1h-1zM29 81h1v1h-1zM58 81h1v1h-1zM61 81h1v1h-1zM77 81h1v1h-1zM86 81h1v1h-1zM90 81h1v1h-1zM94 81h1v1h-1zM96 81h1v1h-1zM4 82h1v1h-1zM15 82h1v1h-1zM54 82h1v1h-1zM56 82h1v1h-1zM63 82h1v1h-1zM82 82h1v1h-1zM84 82h1v1h-1zM90 82h1v1h-1zM23 83h1v1h-1zM34 83h1v1h-1zM46 83h1v1h-1zM50 83h1v1h-1zM65 83h1v1h-1zM82 83h1v1h-1zM2 84h1v1h-1zM21 84h1v1h-1zM30 84h1v1h-1zM86 84h2v1h-2zM97 84h1v1h-1zM52 85h2v1h-2zM88 85h1v1h-1zM90 85h2v1h-2zM16 86h1v1h-1zM24 86h1v1h-1zM27 86h1v1h-1zM29 86h1v1h-1zM48 86h1v1h-1zM58 86h1v1h-1zM96 86h1v1h-1zM0 87h1v1h-1zM18 87h1v1h-1zM22 87h1v1h-1zM25 87h1v1h-1zM57 87h1v1h-1zM59 87h1v1h-1zM87 87h1v1h-1zM90 87h1v1h-1zM98 87h1v1h-1zM22 88h1v1h-1zM27 88h1v1h-1zM77 88h1v1h-1zM92 88h1v1h-1zM26 89h1v1h-1zM47 89h3v1h-3zM63 89h1v1h-1zM86 89h1v1h-1zM88 89h1v1h-1zM16 90h1v1h-1zM23 90h1v1h-1zM51 90h1v1h-1zM59 90h1v1h-1zM83 90h1v1h-1zM2 91h1v1h-1zM25 91h1v1h-1zM55 91h1v1h-1zM68 91h1v1h-1zM90 91h3v1h-3zM3 92h1v1h-1zM21 92h1v1h-1zM26 92h1v1h-1zM56 92h1v1h-1zM60 92h1v1h-1zM81 92h1v1h-1zM83 92h1v1h-1zM3 93h1v1h-1zM91 93h1v1h-1zM13 94h1v1h-1zM27 94h1v1h-1zM44 94h1v1h-1zM2 95h1v1h-1zM20 95h1v1h-1zM25 95h1v1h-1zM50 95h1v1h-1zM58 95h1v1h-1zM84 95h1v1h-1zM87 95h2v1h-2zM2 96h1v1h-1zM18 96h1v1h-1zM69 96h1v1h-1zM86 96h2v1h-2zM92 96h1v1h-1zM2 97h1v1h-1zM22 97h2v1h-2zM93 97h1v1h-1zM20 98h1v1h-1zM24 98h1v1h-1zM35 98h1v1h-1zM78 98h1v1h-1zM88 98h1v1h-1zM15 99h1v1h-1zM22 99h1v1h-1zM26 99h1v1h-1zM30 99h1v1h-1zM45 99h1v1h-1zM54 99h2v1h-2zM84 99h1v1h-1zM86 99h1v1h-1z"/>
<path fill="rgb(108,108,108)" d="M23 0h1v1h-1zM50 0h1v1h-1zM53 0h1v1h-1zM60 0h1v1h-1zM80 0h1v1h-1zM92 0h1v1h-1zM1 1h1v1h-1zM12 1h1v1h-1zM21 1h1v1h-1zM24 1h1v1h-1zM54 1h1v1h-1zM65 1h1v1h-1zM87 1h1v1h-1zM15 2h1v1h-1zM92 2h1v1h-1zM0 3h1v1h-1zM65 3h1v1h-1zM82 3h1v1h-1zM86 3h1v1h-1zM93 3h1v1h-1zM16 4h1v1h-1zM20 4h2v1h-2zM29 4h1v1h-1zM51 4h1v1h-1zM59 4h1v1h-1zM77 4h1v1h-1zM87 4h1v1h-1zM99 4h1v1h-1zM21 5h1v1h-1zM24 5h1v1h-1zM52 5h1v1h-1zM54 5h1v1h-1zM84 5h1v1h-1zM86 5h1v1h-1zM92 5h1v1h-1zM23 6h1v1h-1zM36 6h1v1h-1zM50 6h1v1h-1zM57 6h2v1h-2zM82 6h1v1h-1zM85 6h1v1h-1zM87 6h1v1h-1zM28 7h2v1h-2zM55 7h1v1h-1zM59 7h1v1h-1zM61 7h1v1h-1zM63 7h1v1h-1zM89 7h1v1h-1zM79 8h2v1h-2zM92 8h1v1h-1zM9 9h1v1h-1zM14 9h1v1h-1zM21 9h1v1h-1zM24 9h1v1h-1zM27 9h1v1h-1zM59 9h1v1h-1zM61 9h1v1h-1zM64 9h1v1h-1zM90 9h2v1h-2zM13 10h1v1h-1zM23 10h1v1h-1zM27 10h1v1h-1zM29 10h1v1h-1zM53 10h1v1h-1zM59 10h1v1h-1zM69 10h1v1h-1zM82 10h1v1h-1zM11 11h1v1h-1zM13 11h1v1h-1zM23 11h1v1h-1zM53 11h1v1h-1zM56 11h1v1h-1zM58 11h1v1h-1zM82 11h1v1h-1zM87 11h1v1h-1zM17 12h1v1h-1zM31 12h1v1h-1zM65 12h1v1h-1zM83 12h2v1h-2zM94 12h2v1h-2zM22 13h1v1h-1zM26 13h1v1h-1zM31 13h1v1h-1zM49 13h1v1h-1zM55 13h1v1h-1zM82 13h1v1h-1zM90 13h1v1h-1zM28 14h2v1h-2zM50 14h1v1h-1zM52 14h1v1h-1zM59 14h1v1h-1zM83 14h1v1h-1zM1 15h1v1h-1zM25 15h1v1h-1zM33 15h1v1h-1zM49 15h1v1h-1zM96 15h1v1h-1zM1 16h1v1h-1zM26 16h1v1h-1zM46 16h2v1h-2zM60 16h1v1h-1zM62 16h1v1h-1zM88 16h1v1h-1zM90 16h1v1h-1zM99 16h1v1h-1zM17 17h1v1h-1zM20 17h1v1h-1zM25 17h2v1h-2zM52 17h1v1h-1zM56 17h1v1h-1zM65 17h1v1h-1zM82 17h1v1h-1zM87 17h1v1h-1zM96 17h1v1h-1zM32 18h1v1h-1zM45 18h2v1h-2zM58 18h2v1h-2zM80 18h1v1h-1zM88 18h1v1h-1zM1 19h1v1h-1zM13 19h1v1h-1zM18 19h1v1h-1zM28 19h1v1h-1zM31 19h1v1h-1zM58 19h1v1h-1zM65 19h1v1h-1zM84 19h1v1h-1zM91 19h1v1h-1zM95 19h1v1h-1zM0 20h1v1h-1zM7 20h1v1h-1zM21 20h1v1h-1zM27 20h2v1h-2zM55 20h1v1h-1zM89 20h1v1h-1zM13 21h1v1h-1zM25 21h1v1h-1zM54 21h1v1h-1zM57 21h1v1h-1zM85 21h3v1h-3zM29 22h2v1h-2zM49 22h1v1h-1zM89 22h1v1h-1zM1 23h1v1h-1zM20 23h1v1h-1zM46 23h1v1h-1zM57 23h1v1h-1zM61 23h1v1h-1zM78 23h1v1h-1zM93 23h1v1h-1zM16 24h1v1h-1zM29 24h1v1h-1zM48 24h1v1h-1zM75 24h1v1h-1zM82 24h1v1h-1zM88 24h3v1h-3zM13 25h1v1h-1zM30 25h1v1h-1zM37 25h1v1h-1zM50 25h1v1h-1zM78 25h1v1h-1zM16 26h1v1h-1zM22 26h1v1h-1zM54 26h1v1h-1zM63 26h1v1h-1zM79 26h1v1h-1zM85 26h1v1h-1zM92 26h1v1h-1zM98 26h1v1h-1zM63 27h1v1h-1zM77 27h1v1h-1zM91 27h1v1h-1zM1 28h1v1h-1zM20 28h1v1h-1zM23 28h1v1h-1zM26 28h1v1h-1zM30 28h1v1h-1zM52 28h1v1h-1zM61 28h1v1h-1zM68 28h1v1h-1zM75 28h1v1h-1zM80 28h1v1h-1zM83 28h1v1h-1zM95 28h1v1h-1zM12 29h1v1h-1zM35 29h1v1h-1zM50 29h1v1h-1zM57 29h1v1h-1zM88 29h1v1h-1zM90 29h1v1h-1zM96 29h1v1h-1zM55 30h1v1h-1zM63 30h1v1h-1zM80 30h1v1h-1zM2 31h1v1h-1zM25 31h1v1h-1zM46 31h1v1h-1zM55 31h1v1h-1zM77 31h1v1h-1zM79 31h1v1h-1zM81 31h1v1h-1zM21 32h1v1h-1zM26 32h1v1h-1zM33 32h1v1h-1zM42 32h1v1h-1zM46 32h1v1h-1zM61 32h1v1h-1zM65 32h1v1h-1zM85 32h1v1h-1zM13 33h1v1h-1zM19 33h2v1h-2zM29 33h2v1h-2zM35 33h1v1h-1zM87 33h1v1h-1zM3 34h1v1h-1zM28 34h2v1h-2zM45 34h1v1h-1zM57 34h1v1h-1zM63 34h1v1h-1zM81 34h1v1h-1zM30 35h1v1h-1zM53 35h1v1h-1zM56 35h1v1h-1zM83 35h1v1h-1zM88 35h1v1h-1zM91 35h1v1h-1zM22 36h1v1h-1zM38 36h1v1h-1zM55 36h1v1h-1zM59 36h1v1h-1zM79 36h1v1h-1zM84 36h1v1h-1zM93 36h1v1h-1zM95 36h1v1h-1zM19 37h1v1h-1zM29 37h1v1h-1zM48 37h1v1h-1zM60 37h1v1h-1zM77 37h1v1h-1zM85 37h1v1h-1zM89 37h2v1h-2zM19 38h1v1h-1zM35 38h1v1h-1zM45 38h2v1h-2zM50 38h1v1h-1zM57 38h1v1h-1zM61 38h1v1h-1zM80 38h2v1h-2zM91 38h1v1h-1zM94 38h1v1h-1zM0 39h2v1h-2zM15 39h1v1h-1zM19 39h1v1h-1zM30 39h1v1h-1zM56 39h2v1h-2zM81 39h1v1h-1zM86 39h1v1h-1zM36 40h1v1h-1zM42 40h1v1h-1zM45 40h1v1h-1zM67 40h1v1h-1zM82 40h1v1h-1zM90 40h1v1h-1zM93 40h1v1h-1zM9 41h1v1h-1zM47 41h1v1h-1zM77 41h1v1h-1zM16 42h1v1h-1zM50 42h1v1h-1zM59 42h1v1h-1zM80 42h1v1h-1zM86 42h1v1h-1zM88 42h1v1h-1zM8 43h1v1h-1zM49 43h1v1h-1zM57 43h1v1h-1zM59 43h1v1h-1zM62 43h1v1h-1zM79 43h1v1h-1zM86 43h1v1h-1zM90 43h1v1h-1zM92 43h1v1h-1zM1 44h1v1h-1zM21 44h1v1h-1zM25 44h1v1h-1zM42 44h1v1h-1zM48 44h1v1h-1zM83 44h2v1h-2zM35 45h2v1h-2zM64 45h1v1h-1zM79 45h1v1h-1zM90 45h2v1h-2zM13 46h1v1h-1zM17 46h1v1h-1zM20 46h1v1h-1zM22 46h1v1h-1zM25 46h1v1h-1zM32 46h1v1h-1zM65 46h1v1h-1zM85 46h1v1h-1zM16 47h1v1h-1zM21 47h1v1h-1zM33 47h1v1h-1zM44 47h1v1h-1zM81 47h2v1h-2zM90 47h3v1h-3zM14 48h1v1h-1zM23 48h1v1h-1zM50 48h1v1h-1zM56 48h1v1h-1zM78 48h1v1h-1zM91 48h1v1h-1zM20 49h1v1h-1zM26 49h1v1h-1zM48 49h1v1h-1zM86 49h1v1h-1zM98 49h1v1h-1zM28 50h2v1h-2zM49 50h2v1h-2zM52 50h2v1h-2zM73 50h1v1h-1zM23 51h1v1h-1zM31 51h1v1h-1zM51 51h2v1h-2zM70 51h1v1h-1zM84 51h1v1h-1zM87 51h1v1h-1zM20 52h1v1h-1zM23 52h1v1h-1zM49 52h3v1h-3zM53 52h1v1h-1zM59 52h1v1h-1zM63 52h1v1h-1zM83 52h1v1h-1zM3 53h1v1h-1zM13 53h1v1h-1zM20 53h1v1h-1zM25 53h1v1h-1zM2 54h1v1h-1zM52 54h2v1h-2zM60 54h1v1h-1zM64 54h1v1h-1zM79 54h1v1h-1zM81 54h1v1h-1zM84 54h1v1h-1zM13 55h1v1h-1zM18 55h1v1h-1zM22 55h1v1h-1zM79 55h1v1h-1zM82 55h1v1h-1zM85 55h1v1h-1zM89 55h2v1h-2zM3 56h1v1h-1zM27 56h1v1h-1zM29 56h1v1h-1zM54 56h1v1h-1zM84 56h1v1h-1zM87 56h1v1h-1zM90 56h1v1h-1zM9 57h1v1h-1zM17 57h1v1h-1zM60 57h1v1h-1zM68 57h1v1h-1zM76 57h1v1h-1zM91 57h1v1h-1zM94 57h1v1h-1zM15 58h1v1h-1zM27 58h1v1h-1zM31 58h1v1h-1zM49 58h1v1h-1zM96 58h1v1h-1zM21 59h1v1h-1zM50 59h1v1h-1zM53 59h1v1h-1zM61 59h1v1h-1zM91 59h1v1h-1zM17 60h2v1h-2zM27 60h1v1h-1zM49 60h1v1h-1zM54 60h1v1h-1zM85 60h4v1h-4zM12 61h1v1h-1zM48 61h1v1h-1zM51 61h1v1h-1zM53 61h1v1h-1zM62 61h1v1h-1zM99 61h1v1h-1zM30 62h1v1h-1zM54 62h1v1h-1zM60 62h1v1h-1zM85 62h1v1h-1zM87 62h1v1h-1zM93 62h1v1h-1zM18 63h1v1h-1zM21 63h1v1h-1zM26 63h1v1h-1zM51 63h1v1h-1zM55 63h1v1h-1zM91 63h2v1h-2zM25 64h1v1h-1zM29 64h1v1h-1zM52 64h1v1h-1zM86 64h1v1h-1zM89 64h1v1h-1zM33 65h1v1h-1zM39 65h1v1h-1zM57 65h1v1h-1zM59 65h1v1h-1zM62 65h1v1h-1zM79 65h1v1h-1zM83 65h1v1h-1zM88 65h1v1h-1zM90 65h1v1h-1zM4 66h1v1h-1zM25 66h1v1h-1zM36 66h1v1h-1zM51 66h1v1h-1zM18 67h3v1h-3zM29 67h1v1h-1zM47 67h1v1h-1zM52 67h1v1h-1zM59 67h1v1h-1zM85 67h1v1h-1zM89 67h1v1h-1zM1 68h1v1h-1zM27 68h1v1h-1zM50 68h1v1h-1zM83 68h1v1h-1zM85 68h2v1h-2zM95 68h1v1h-1zM24 69h1v1h-1zM53 69h1v1h-1zM60 69h1v1h-1zM63 69h1v1h-1zM81 69h1v1h-1zM94 69h1v1h-1zM16 70h1v1h-1zM22 70h1v1h-1zM29 70h3v1h-3zM34 70h1v1h-1zM56 70h1v1h-1zM0 71h1v1h-1zM2 71h1v1h-1zM12 71h1v1h-1zM17 71h1v1h-1zM53 71h1v1h-1zM61 71h1v1h-1zM88 71h1v1h-1zM0 72h1v1h-1zM48 72h1v1h-1zM56 72h2v1h-2zM60 72h1v1h-1zM79 72h1v1h-1zM86 72h1v1h-1zM93 72h1v1h-1zM96 72h1v1h-1zM25 73h2v1h-2zM56 73h1v1h-1zM19 74h1v1h-1zM54 74h1v1h-1zM64 74h1v1h-1zM85 74h1v1h-1zM2 75h1v1h-1zM26 75h1v1h-1zM28 75h1v1h-1zM51 75h1v1h-1zM54 75h1v1h-1zM56 75h1v1h-1zM90 75h1v1h-1zM28 76h2v1h-2zM61 76h1v1h-1zM86 76h1v1h-1zM3 77h1v1h-1zM25 77h1v1h-1zM27 77h1v1h-1zM29 77h1v1h-1zM55 77h1v1h-1zM61 77h1v1h-1zM75 77h1v1h-1zM21 78h2v1h-2zM27 78h1v1h-1zM34 78h1v1h-1zM50 78h1v1h-1zM61 78h1v1h-1zM73 78h1v1h-1zM94 78h1v1h-1zM13 79h1v1h-1zM32 79h1v1h-1zM35 79h1v1h-1zM44 79h1v1h-1zM49 79h1v1h-1zM55 79h2v1h-2zM92 79h1v1h-1zM0 80h1v1h-1zM5 80h1v1h-1zM30 80h1v1h-1zM51 80h2v1h-2zM55 80h1v1h-1zM57 80h1v1h-1zM60 80h1v1h-1zM83 80h1v1h-1zM2 81h1v1h-1zM16 81h1v1h-1zM22 81h1v1h-1zM49 81h2v1h-2zM80 81h1v1h-1zM82 81h1v1h-1zM16 82h1v1h-1zM25 82h1v1h-1zM48 82h1v1h-1zM52 82h1v1h-1zM91 82h1v1h-1zM97 82h1v1h-1zM21 83h1v1h-1zM28 83h1v1h-1zM48 83h1v1h-1zM55 83h1v1h-1zM89 83h1v1h-1zM91 83h1v1h-1zM93 83h1v1h-1zM19 84h1v1h-1zM26 84h1v1h-1zM29 84h1v1h-1zM34 84h1v1h-1zM50 84h2v1h-2zM70 84h1v1h-1zM15 85h1v1h-1zM22 85h1v1h-1zM33 85h1v1h-1zM54 85h1v1h-1zM81 85h1v1h-1zM87 85h1v1h-1zM95 85h1v1h-1zM1 86h1v1h-1zM50 86h1v1h-1zM52 86h2v1h-2zM64 86h1v1h-1zM78 86h1v1h-1zM80 86h1v1h-1zM82 86h2v1h-2zM51 87h2v1h-2zM77 87h1v1h-1zM15 88h1v1h-1zM52 88h1v1h-1zM86 88h1v1h-1zM94 88h1v1h-1zM24 89h1v1h-1zM44 89h1v1h-1zM56 89h1v1h-1zM59 89h2v1h-2zM79 89h1v1h-1zM85 89h1v1h-1zM27 90h1v1h-1zM54 90h1v1h-1zM82 90h1v1h-1zM90 90h2v1h-2zM20 91h1v1h-1zM27 91h1v1h-1zM30 91h1v1h-1zM50 91h1v1h-1zM58 91h1v1h-1zM66 91h1v1h-1zM79 91h2v1h-2zM23 92h1v1h-1zM28 92h1v1h-1zM52 92h1v1h-1zM86 92h1v1h-1zM1 93h1v1h-1zM20 93h1v1h-1zM55 93h1v1h-1zM65 93h1v1h-1zM75 93h1v1h-1zM80 93h1v1h-1zM86 93h1v1h-1zM97 93h1v1h-1zM11 94h1v1h-1zM16 94h1v1h-1zM19 94h1v1h-1zM32 94h2v1h-2zM61 94h1v1h-1zM81 94h1v1h-1zM90 94h1v1h-1zM92 94h1v1h-1zM95 94h1v1h-1zM13 95h1v1h-1zM27 95h1v1h-1zM29 95h2v1h-2zM52 95h1v1h-1zM63 95h1v1h-1zM77 95h1v1h-1zM79 95h1v1h-1zM82 95h1v1h-1zM25 96h1v1h-1zM33 96h1v1h-1zM35 96h1v1h-1zM49 96h1v1h-1zM52 96h1v1h-1zM54 96h2v1h-2zM57 96h2v1h-2zM76 96h1v1h-1zM82 96h1v1h-1zM89 96h1v1h-1zM3 97h1v1h-1zM25 97h1v1h-1zM41 97h1v1h-1zM51 97h2v1h-2zM54 97h1v1h-1zM58 97h1v1h-1zM80 97h1v1h-1zM83 97h1v1h-1zM85 97h1v1h-1zM0 98h1v1h-1zM3 98h1v1h-1zM18 98h1v1h-1zM23 98h1v1h-1zM30 98h1v1h-1zM38 98h1v1h-1zM52 98h1v1h-1zM93 98h1v1h-1zM24 99h1v1h-1zM29 99h1v1h-1zM44 99h1v1h-1zM49 99h1v1h-1zM58 99h1v1h-1zM60 99h1v1h-1z"/>
<path fill="rgb(116,116,116)" d="M15 0h1v1h-1zM31 0h1v1h-1zM33 0h1v1h-1zM46 0h1v1h-1zM54 0h1v1h-1zM58 0h1v1h-1zM85 0h2v1h-2zM88 0h1v1h-1zM93 0h1v1h-1zM19 1h1v1h-1zM23 1h1v1h-1zM29 1h1v1h-1zM57 1h1v1h-1zM60 1h1v1h-1zM68 1h1v1h-1zM77 1h2v1h-2zM84 1h1v1h-1zM88 1h1v1h-1zM1 2h1v1h-1zM23 2h1v1h-1zM28 2h1v1h-1zM46 2h1v1h-1zM76 2h1v1h-1zM78 2h2v1h-2zM83 2h1v1h-1zM87 2h1v1h-1zM1 3h1v1h-1zM3 3h1v1h-1zM20 3h1v1h-1zM31 3h1v1h-1zM39 3h1v1h-1zM43 3h1v1h-1zM72 3h1v1h-1zM77 3h1v1h-1zM89 3h2v1h-2zM99 3h1v1h-1zM23 4h1v1h-1zM25 4h1v1h-1zM28 4h1v1h-1zM53 4h1v1h-1zM61 4h1v1h-1zM84 4h1v1h-1zM86 4h1v1h-1zM17 5h1v1h-1zM22 5h2v1h-2zM34 5h2v1h-2zM37 5h2v1h-2zM53 5h1v1h-1zM38 6h1v1h-1zM86 6h1v1h-1zM90 6h2v1h-2zM93 6h1v1h-1zM16 7h1v1h-1zM22 7h1v1h-1zM30 7h1v1h-1zM79 7h1v1h-1zM21 8h2v1h-2zM50 8h1v1h-1zM71 8h1v1h-1zM78 8h1v1h-1zM82 8h1v1h-1zM13 9h1v1h-1zM15 9h1v1h-1zM19 9h1v1h-1zM25 9h1v1h-1zM35 9h2v1h-2zM57 9h1v1h-1zM24 10h2v1h-2zM35 10h1v1h-1zM38 10h1v1h-1zM43 10h1v1h-1zM49 10h1v1h-1zM66 10h2v1h-2zM83 10h3v1h-3zM89 10h2v1h-2zM94 10h1v1h-1zM0 11h1v1h-1zM19 11h1v1h-1zM29 11h1v1h-1zM32 11h1v1h-1zM54 11h1v1h-1zM61 11h1v1h-1zM77 11h1v1h-1zM92 11h1v1h-1zM96 11h1v1h-1zM25 12h1v1h-1zM46 12h1v1h-1zM53 12h2v1h-2zM60 12h2v1h-2zM81 12h1v1h-1zM21 13h1v1h-1zM54 13h1v1h-1zM94 13h1v1h-1zM5 14h1v1h-1zM21 14h1v1h-1zM24 14h1v1h-1zM30 14h1v1h-1zM40 14h1v1h-1zM43 14h1v1h-1zM55 14h1v1h-1zM63 14h1v1h-1zM68 14h1v1h-1zM78 14h1v1h-1zM85 14h2v1h-2zM20 15h1v1h-1zM34 15h1v1h-1zM59 15h1v1h-1zM62 15h1v1h-1zM80 15h1v1h-1zM0 16h1v1h-1zM3 16h1v1h-1zM6 16h1v1h-1zM16 16h1v1h-1zM21 16h1v1h-1zM30 16h1v1h-1zM35 16h1v1h-1zM50 16h1v1h-1zM56 16h1v1h-1zM77 16h1v1h-1zM1 17h1v1h-1zM24 17h1v1h-1zM27 17h1v1h-1zM35 17h1v1h-1zM49 17h2v1h-2zM53 17h3v1h-3zM79 17h1v1h-1zM97 17h1v1h-1zM0 18h1v1h-1zM23 18h1v1h-1zM25 18h1v1h-1zM50 18h1v1h-1zM52 18h1v1h-1zM62 18h1v1h-1zM85 18h1v1h-1zM19 19h1v1h-1zM29 19h1v1h-1zM37 19h1v1h-1zM48 19h1v1h-1zM66 19h1v1h-1zM79 19h1v1h-1zM24 20h1v1h-1zM26 20h1v1h-1zM34 20h1v1h-1zM63 20h1v1h-1zM72 20h2v1h-2zM75 20h1v1h-1zM0 21h1v1h-1zM16 21h2v1h-2zM22 21h2v1h-2zM26 21h1v1h-1zM30 21h1v1h-1zM56 21h1v1h-1zM84 21h1v1h-1zM2 22h1v1h-1zM27 22h1v1h-1zM32 22h1v1h-1zM37 22h1v1h-1zM18 23h1v1h-1zM22 23h1v1h-1zM89 23h2v1h-2zM0 24h1v1h-1zM25 24h1v1h-1zM33 24h1v1h-1zM51 24h1v1h-1zM53 24h1v1h-1zM56 24h1v1h-1zM60 24h1v1h-1zM62 24h1v1h-1zM80 24h1v1h-1zM92 24h1v1h-1zM5 25h1v1h-1zM14 25h1v1h-1zM17 25h1v1h-1zM45 25h1v1h-1zM54 25h1v1h-1zM60 25h1v1h-1zM87 25h1v1h-1zM89 25h1v1h-1zM5 26h1v1h-1zM11 26h1v1h-1zM18 26h1v1h-1zM20 26h2v1h-2zM25 26h1v1h-1zM28 26h1v1h-1zM33 26h1v1h-1zM38 26h1v1h-1zM46 26h1v1h-1zM73 26h1v1h-1zM25 27h1v1h-1zM44 27h1v1h-1zM57 27h2v1h-2zM96 27h1v1h-1zM99 27h1v1h-1zM15 28h1v1h-1zM24 28h2v1h-2zM45 28h2v1h-2zM85 28h1v1h-1zM1 29h1v1h-1zM4 29h2v1h-2zM16 29h1v1h-1zM20 29h1v1h-1zM39 29h1v1h-1zM44 29h3v1h-3zM56 29h1v1h-1zM60 29h1v1h-1zM63 29h1v1h-1zM66 29h1v1h-1zM92 29h1v1h-1zM95 29h1v1h-1zM0 30h1v1h-1zM14 30h1v1h-1zM53 30h1v1h-1zM57 30h1v1h-1zM78 30h1v1h-1zM85 30h1v1h-1zM98 30h1v1h-1zM31 31h1v1h-1zM73 31h1v1h-1zM80 31h1v1h-1zM83 31h1v1h-1zM87 31h1v1h-1zM91 31h3v1h-3zM98 31h1v1h-1zM25 32h1v1h-1zM48 32h1v1h-1zM51 32h1v1h-1zM56 32h1v1h-1zM82 32h1v1h-1zM94 32h1v1h-1zM97 32h2v1h-2zM15 33h1v1h-1zM17 33h1v1h-1zM22 33h2v1h-2zM51 33h1v1h-1zM81 33h1v1h-1zM9 34h1v1h-1zM20 34h1v1h-1zM42 34h2v1h-2zM54 34h1v1h-1zM59 34h1v1h-1zM64 34h1v1h-1zM83 34h1v1h-1zM88 34h1v1h-1zM10 35h1v1h-1zM20 35h1v1h-1zM32 35h1v1h-1zM49 35h1v1h-1zM52 35h1v1h-1zM85 35h2v1h-2zM90 35h1v1h-1zM14 36h1v1h-1zM23 36h2v1h-2zM30 36h1v1h-1zM54 36h1v1h-1zM62 36h1v1h-1zM18 37h1v1h-1zM24 37h1v1h-1zM55 37h1v1h-1zM62 37h1v1h-1zM83 37h1v1h-1zM94 37h1v1h-1zM0 38h1v1h-1zM11 38h1v1h-1zM17 38h1v1h-1zM40 38h1v1h-1zM49 38h1v1h-1zM56 38h1v1h-1zM58 38h1v1h-1zM65 38h1v1h-1zM93 38h1v1h-1zM17 39h1v1h-1zM25 39h1v1h-1zM27 39h1v1h-1zM32 39h1v1h-1zM39 39h1v1h-1zM49 39h1v1h-1zM54 39h1v1h-1zM63 39h1v1h-1zM65 39h1v1h-1zM98 39h1v1h-1zM2 40h2v1h-2zM28 40h2v1h-2zM44 40h1v1h-1zM46 40h1v1h-1zM50 40h1v1h-1zM54 40h1v1h-1zM56 40h1v1h-1zM62 40h1v1h-1zM64 40h1v1h-1zM78 40h1v1h-1zM84 40h1v1h-1zM98 40h1v1h-1zM1 41h1v1h-1zM24 41h1v1h-1zM28 41h1v1h-1zM37 41h1v1h-1zM43 41h1v1h-1zM60 41h1v1h-1zM85 41h1v1h-1zM89 41h1v1h-1zM99 41h1v1h-1zM23 42h1v1h-1zM31 42h1v1h-1zM55 42h1v1h-1zM65 42h1v1h-1zM91 42h1v1h-1zM93 42h1v1h-1zM16 43h1v1h-1zM20 43h1v1h-1zM25 43h1v1h-1zM30 43h1v1h-1zM33 43h1v1h-1zM56 43h1v1h-1zM15 44h1v1h-1zM19 44h1v1h-1zM26 44h1v1h-1zM64 44h1v1h-1zM85 44h1v1h-1zM93 44h1v1h-1zM17 45h1v1h-1zM23 45h1v1h-1zM27 45h1v1h-1zM30 45h1v1h-1zM42 45h1v1h-1zM49 45h1v1h-1zM53 45h1v1h-1zM58 45h2v1h-2zM61 45h1v1h-1zM63 45h1v1h-1zM77 45h1v1h-1zM92 45h2v1h-2zM0 46h2v1h-2zM16 46h1v1h-1zM27 46h1v1h-1zM35 46h2v1h-2zM46 46h1v1h-1zM66 46h1v1h-1zM92 46h1v1h-1zM17 47h1v1h-1zM48 47h1v1h-1zM50 47h2v1h-2zM73 47h1v1h-1zM78 47h1v1h-1zM83 47h1v1h-1zM87 47h1v1h-1zM0 48h1v1h-1zM4 48h1v1h-1zM11 48h1v1h-1zM18 48h1v1h-1zM45 48h1v1h-1zM54 48h1v1h-1zM79 48h2v1h-2zM90 48h1v1h-1zM19 49h1v1h-1zM45 49h1v1h-1zM57 49h2v1h-2zM70 49h1v1h-1zM88 49h1v1h-1zM94 49h1v1h-1zM19 50h1v1h-1zM34 50h1v1h-1zM54 50h1v1h-1zM57 50h1v1h-1zM64 50h1v1h-1zM75 50h1v1h-1zM90 50h1v1h-1zM85 51h1v1h-1zM88 51h1v1h-1zM92 51h1v1h-1zM95 51h1v1h-1zM26 52h1v1h-1zM29 52h1v1h-1zM72 52h1v1h-1zM82 52h1v1h-1zM87 52h1v1h-1zM89 52h1v1h-1zM1 53h1v1h-1zM5 53h1v1h-1zM80 53h1v1h-1zM82 53h1v1h-1zM27 54h1v1h-1zM33 54h1v1h-1zM39 54h1v1h-1zM49 54h2v1h-2zM74 54h1v1h-1zM86 54h2v1h-2zM92 54h1v1h-1zM20 55h2v1h-2zM26 55h1v1h-1zM29 55h1v1h-1zM38 55h1v1h-1zM49 55h1v1h-1zM86 55h1v1h-1zM96 55h1v1h-1zM0 56h1v1h-1zM2 56h1v1h-1zM18 56h1v1h-1zM28 56h1v1h-1zM48 56h3v1h-3zM23 57h1v1h-1zM29 57h2v1h-2zM47 57h1v1h-1zM62 57h2v1h-2zM69 57h1v1h-1zM82 57h1v1h-1zM89 57h1v1h-1zM92 57h1v1h-1zM9 58h1v1h-1zM19 58h1v1h-1zM21 58h1v1h-1zM33 58h1v1h-1zM37 58h1v1h-1zM53 58h1v1h-1zM58 58h1v1h-1zM64 58h1v1h-1zM85 58h1v1h-1zM27 59h1v1h-1zM62 59h1v1h-1zM81 59h1v1h-1zM0 60h1v1h-1zM19 60h1v1h-1zM30 60h1v1h-1zM33 60h1v1h-1zM45 60h2v1h-2zM76 60h1v1h-1zM82 60h1v1h-1zM90 60h1v1h-1zM2 61h1v1h-1zM27 61h1v1h-1zM29 61h1v1h-1zM33 61h1v1h-1zM35 61h1v1h-1zM60 61h1v1h-1zM76 61h1v1h-1zM82 61h2v1h-2zM85 61h1v1h-1zM87 61h1v1h-1zM90 61h1v1h-1zM95 61h1v1h-1zM0 62h3v1h-3zM16 62h1v1h-1zM26 62h1v1h-1zM28 62h1v1h-1zM44 62h1v1h-1zM49 62h1v1h-1zM77 62h1v1h-1zM80 62h2v1h-2zM30 63h2v1h-2zM74 63h1v1h-1zM83 63h1v1h-1zM95 63h1v1h-1zM17 64h1v1h-1zM36 64h1v1h-1zM45 64h1v1h-1zM49 64h1v1h-1zM56 64h2v1h-2zM78 64h1v1h-1zM80 64h1v1h-1zM18 65h1v1h-1zM21 65h1v1h-1zM30 65h1v1h-1zM44 65h1v1h-1zM50 65h1v1h-1zM53 65h1v1h-1zM76 65h1v1h-1zM80 65h1v1h-1zM91 65h1v1h-1zM17 66h1v1h-1zM20 66h1v1h-1zM29 66h1v1h-1zM46 66h1v1h-1zM52 66h1v1h-1zM57 66h1v1h-1zM61 66h1v1h-1zM68 66h1v1h-1zM75 66h1v1h-1zM78 66h2v1h-2zM1 67h1v1h-1zM15 67h1v1h-1zM41 67h1v1h-1zM57 67h1v1h-1zM78 67h1v1h-1zM14 68h1v1h-1zM29 68h1v1h-1zM42 68h1v1h-1zM47 68h1v1h-1zM53 68h1v1h-1zM60 68h1v1h-1zM79 68h2v1h-2zM92 68h1v1h-1zM96 68h1v1h-1zM3 69h1v1h-1zM15 69h1v1h-1zM31 69h1v1h-1zM42 69h1v1h-1zM48 69h1v1h-1zM50 69h2v1h-2zM59 69h1v1h-1zM69 69h1v1h-1zM79 69h1v1h-1zM84 69h1v1h-1zM86 69h3v1h-3zM90 69h1v1h-1zM92 69h1v1h-1zM96 69h1v1h-1zM10 70h1v1h-1zM33 70h1v1h-1zM48 70h1v1h-1zM85 70h1v1h-1zM92 70h1v1h-1zM22 71h2v1h-2zM43 71h1v1h-1zM49 71h1v1h-1zM67 71h1v1h-1zM91 71h2v1h-2zM12 72h1v1h-1zM21 72h2v1h-2zM59 72h1v1h-1zM87 72h2v1h-2zM91 72h1v1h-1zM1 73h1v1h-1zM32 73h1v1h-1zM47 73h1v1h-1zM51 73h3v1h-3zM60 73h2v1h-2zM81 73h1v1h-1zM96 73h1v1h-1zM1 74h1v1h-1zM23 74h1v1h-1zM55 74h2v1h-2zM6 75h1v1h-1zM18 75h1v1h-1zM31 75h1v1h-1zM48 75h1v1h-1zM53 75h1v1h-1zM57 75h1v1h-1zM61 75h1v1h-1zM65 75h1v1h-1zM79 75h1v1h-1zM8 76h1v1h-1zM16 76h1v1h-1zM19 76h1v1h-1zM52 76h1v1h-1zM59 76h1v1h-1zM83 76h1v1h-1zM89 76h1v1h-1zM93 76h1v1h-1zM95 76h1v1h-1zM98 76h1v1h-1zM4 77h1v1h-1zM7 77h1v1h-1zM28 77h1v1h-1zM51 77h1v1h-1zM57 77h1v1h-1zM63 77h1v1h-1zM66 77h1v1h-1zM39 78h1v1h-1zM55 78h1v1h-1zM85 78h1v1h-1zM10 79h1v1h-1zM12 79h1v1h-1zM15 79h1v1h-1zM18 79h1v1h-1zM21 79h1v1h-1zM28 79h1v1h-1zM46 79h1v1h-1zM51 79h1v1h-1zM62 79h1v1h-1zM76 79h1v1h-1zM85 79h1v1h-1zM87 79h1v1h-1zM89 79h1v1h-1zM96 79h1v1h-1zM8 80h1v1h-1zM10 80h1v1h-1zM18 80h1v1h-1zM32 80h1v1h-1zM34 80h1v1h-1zM50 80h1v1h-1zM54 80h1v1h-1zM78 80h1v1h-1zM84 80h1v1h-1zM14 81h1v1h-1zM19 81h1v1h-1zM25 81h1v1h-1zM34 81h1v1h-1zM47 81h1v1h-1zM73 81h1v1h-1zM88 81h1v1h-1zM93 81h1v1h-1zM0 82h1v1h-1zM26 82h1v1h-1zM28 82h1v1h-1zM86 82h1v1h-1zM92 82h1v1h-1zM16 83h1v1h-1zM26 83h2v1h-2zM43 83h1v1h-1zM47 83h1v1h-1zM52 83h1v1h-1zM80 83h1v1h-1zM83 83h1v1h-1zM96 83h1v1h-1zM18 84h1v1h-1zM23 84h1v1h-1zM28 84h1v1h-1zM53 84h1v1h-1zM56 84h1v1h-1zM60 84h1v1h-1zM85 84h1v1h-1zM92 84h1v1h-1zM21 85h1v1h-1zM29 85h1v1h-1zM41 85h1v1h-1zM44 85h1v1h-1zM51 85h1v1h-1zM72 85h1v1h-1zM82 85h1v1h-1zM86 85h1v1h-1zM0 86h1v1h-1zM21 86h1v1h-1zM33 86h1v1h-1zM60 86h1v1h-1zM89 86h1v1h-1zM91 86h1v1h-1zM94 86h1v1h-1zM97 86h1v1h-1zM19 87h1v1h-1zM24 87h1v1h-1zM26 87h2v1h-2zM31 87h1v1h-1zM48 87h1v1h-1zM64 87h1v1h-1zM67 87h1v1h-1zM70 87h1v1h-1zM73 87h1v1h-1zM18 88h1v1h-1zM25 88h1v1h-1zM34 88h1v1h-1zM47 88h1v1h-1zM51 88h1v1h-1zM53 88h1v1h-1zM63 88h1v1h-1zM75 88h1v1h-1zM90 88h1v1h-1zM1 89h1v1h-1zM13 89h1v1h-1zM22 89h1v1h-1zM27 89h1v1h-1zM91 89h1v1h-1zM19 90h1v1h-1zM81 90h1v1h-1zM94 90h1v1h-1zM15 91h1v1h-1zM19 91h1v1h-1zM54 91h1v1h-1zM57 91h1v1h-1zM62 91h1v1h-1zM97 91h2v1h-2zM18 92h1v1h-1zM41 92h1v1h-1zM51 92h1v1h-1zM64 92h1v1h-1zM74 92h1v1h-1zM90 92h1v1h-1zM93 92h1v1h-1zM30 93h1v1h-1zM50 93h1v1h-1zM53 93h1v1h-1zM69 93h1v1h-1zM77 93h1v1h-1zM95 93h1v1h-1zM24 94h1v1h-1zM35 94h1v1h-1zM43 94h1v1h-1zM52 94h1v1h-1zM79 94h1v1h-1zM85 94h1v1h-1zM94 94h1v1h-1zM5 95h1v1h-1zM17 95h1v1h-1zM22 95h1v1h-1zM60 95h2v1h-2zM89 95h1v1h-1zM93 95h1v1h-1zM98 95h1v1h-1zM17 96h1v1h-1zM21 96h1v1h-1zM29 96h2v1h-2zM32 96h1v1h-1zM37 96h1v1h-1zM62 96h1v1h-1zM71 96h1v1h-1zM88 96h1v1h-1zM90 96h1v1h-1zM93 96h1v1h-1zM16 97h1v1h-1zM18 97h1v1h-1zM20 97h1v1h-1zM28 97h1v1h-1zM31 97h1v1h-1zM45 97h1v1h-1zM50 97h1v1h-1zM86 97h1v1h-1zM91 97h1v1h-1zM14 98h1v1h-1zM17 98h1v1h-1zM31 98h1v1h-1zM34 98h1v1h-1zM44 98h1v1h-1zM47 98h1v1h-1zM80 98h1v1h-1zM84 98h1v1h-1zM90 98h1v1h-1zM7 99h1v1h-1zM21 99h1v1h-1zM52 99h2v1h-2zM66 99h1v1h-1zM94 99h1v1h-1z"/>
<path fill="rgb(124,124,124)" d="M17 0h1v1h-1zM20 0h1v1h-1zM26 0h2v1h-2zM32 0h1v1h-1zM43 0h1v1h-1zM47 0h2v1h-2zM52 0h1v1h-1zM65 0h1v1h-1zM78 0h1v1h-1zM94 0h3v1h-3zM99 0h1v1h-1zM0 1h1v1h-1zM2 1h3v1h-3zM25 1h2v1h-2zM28 1h1v1h-1zM32 1h1v1h-1zM36 1h1v1h-1zM40 1h1v1h-1zM63 1h1v1h-1zM89 1h1v1h-1zM91 1h1v1h-1zM93 1h1v1h-1zM6 2h1v1h-1zM18 2h1v1h-1zM40 2h1v1h-1zM42 2h1v1h-1zM48 2h1v1h-1zM51 2h1v1h-1zM60 2h1v1h-1zM63 2h1v1h-1zM65 2h1v1h-1zM67 2h1v1h-1zM82 2h1v1h-1zM85 2h1v1h-1zM93 2h1v1h-1zM32 3h1v1h-1zM45 3h1v1h-1zM55 3h1v1h-1zM58 3h1v1h-1zM63 3h1v1h-1zM67 3h1v1h-1zM76 3h1v1h-1zM80 3h1v1h-1zM85 3h1v1h-1zM17 4h1v1h-1zM22 4h1v1h-1zM26 4h1v1h-1zM30 4h1v1h-1zM52 4h1v1h-1zM56 4h1v1h-1zM78 4h1v1h-1zM91 4h1v1h-1zM94 4h1v1h-1zM14 5h1v1h-1zM65 5h1v1h-1zM67 5h1v1h-1zM85 5h1v1h-1zM89 5h1v1h-1zM91 5h1v1h-1zM1 6h1v1h-1zM9 6h1v1h-1zM16 6h1v1h-1zM21 6h2v1h-2zM31 6h1v1h-1zM40 6h1v1h-1zM49 6h1v1h-1zM51 6h1v1h-1zM59 6h1v1h-1zM77 6h1v1h-1zM1 7h1v1h-1zM14 7h1v1h-1zM20 7h1v1h-1zM47 7h1v1h-1zM50 7h1v1h-1zM52 7h1v1h-1zM75 7h1v1h-1zM82 7h1v1h-1zM87 7h1v1h-1zM92 7h1v1h-1zM1 8h1v1h-1zM4 8h1v1h-1zM27 8h1v1h-1zM29 8h1v1h-1zM39 8h1v1h-1zM47 8h1v1h-1zM49 8h1v1h-1zM87 8h1v1h-1zM93 8h1v1h-1zM0 9h1v1h-1zM6 9h1v1h-1zM34 9h1v1h-1zM37 9h1v1h-1zM41 9h1v1h-1zM47 9h1v1h-1zM54 9h1v1h-1zM65 9h1v1h-1zM83 9h1v1h-1zM2 10h1v1h-1zM4 10h1v1h-1zM14 10h1v1h-1zM18 10h1v1h-1zM45 10h1v1h-1zM52 10h1v1h-1zM58 10h1v1h-1zM64 10h1v1h-1zM86 10h1v1h-1zM12 11h1v1h-1zM16 11h1v1h-1zM18 11h1v1h-1zM30 11h2v1h-2zM59 11h1v1h-1zM64 11h1v1h-1zM66 11h1v1h-1zM98 11h1v1h-1zM22 12h1v1h-1zM26 12h2v1h-2zM34 12h1v1h-1zM49 12h1v1h-1zM62 12h1v1h-1zM71 12h1v1h-1zM82 12h1v1h-1zM90 12h1v1h-1zM2 13h1v1h-1zM7 13h1v1h-1zM18 13h1v1h-1zM30 13h1v1h-1zM38 13h1v1h-1zM44 13h1v1h-1zM51 13h1v1h-1zM59 13h1v1h-1zM66 13h1v1h-1zM81 13h1v1h-1zM86 13h2v1h-2zM89 13h1v1h-1zM96 13h1v1h-1zM2 14h1v1h-1zM15 14h1v1h-1zM19 14h1v1h-1zM22 14h1v1h-1zM41 14h1v1h-1zM45 14h1v1h-1zM53 14h1v1h-1zM93 14h2v1h-2zM3 15h1v1h-1zM17 15h1v1h-1zM26 15h1v1h-1zM37 15h1v1h-1zM48 15h1v1h-1zM55 15h1v1h-1zM61 15h1v1h-1zM82 15h1v1h-1zM86 15h1v1h-1zM88 15h1v1h-1zM99 15h1v1h-1zM19 16h1v1h-1zM58 16h1v1h-1zM63 16h1v1h-1zM73 16h1v1h-1zM75 16h1v1h-1zM84 16h1v1h-1zM94 16h2v1h-2zM22 17h1v1h-1zM33 17h1v1h-1zM47 17h1v1h-1zM75 17h1v1h-1zM80 17h1v1h-1zM94 17h1v1h-1zM15 18h1v1h-1zM30 18h1v1h-1zM47 18h1v1h-1zM51 18h1v1h-1zM64 18h1v1h-1zM78 18h2v1h-2zM94 18h1v1h-1zM97 18h1v1h-1zM2 19h1v1h-1zM20 19h1v1h-1zM23 19h1v1h-1zM33 19h2v1h-2zM50 19h1v1h-1zM63 19h2v1h-2zM78 19h1v1h-1zM98 19h1v1h-1zM1 20h1v1h-1zM32 20h1v1h-1zM36 20h1v1h-1zM40 20h1v1h-1zM47 20h1v1h-1zM51 20h2v1h-2zM56 20h1v1h-1zM60 20h1v1h-1zM82 20h1v1h-1zM86 20h1v1h-1zM97 20h1v1h-1zM27 21h1v1h-1zM42 21h1v1h-1zM53 21h1v1h-1zM58 21h1v1h-1zM60 21h1v1h-1zM77 21h1v1h-1zM79 21h1v1h-1zM91 21h1v1h-1zM1 22h1v1h-1zM13 22h1v1h-1zM55 22h1v1h-1zM71 22h1v1h-1zM74 22h1v1h-1zM82 22h1v1h-1zM86 22h1v1h-1zM94 22h1v1h-1zM3 23h1v1h-1zM10 23h1v1h-1zM14 23h1v1h-1zM36 23h1v1h-1zM44 23h1v1h-1zM56 23h1v1h-1zM6 24h1v1h-1zM50 24h1v1h-1zM76 24h1v1h-1zM78 24h1v1h-1zM99 24h1v1h-1zM4 25h1v1h-1zM33 25h1v1h-1zM48 25h1v1h-1zM52 25h1v1h-1zM57 25h1v1h-1zM68 25h1v1h-1zM81 25h1v1h-1zM97 25h1v1h-1zM47 26h1v1h-1zM49 26h1v1h-1zM57 26h1v1h-1zM90 26h1v1h-1zM94 26h2v1h-2zM0 27h1v1h-1zM15 27h1v1h-1zM17 27h1v1h-1zM20 27h1v1h-1zM34 27h1v1h-1zM41 27h1v1h-1zM43 27h1v1h-1zM50 27h1v1h-1zM53 27h1v1h-1zM56 27h1v1h-1zM62 27h1v1h-1zM71 27h1v1h-1zM82 27h1v1h-1zM86 27h1v1h-1zM10 28h1v1h-1zM18 28h2v1h-2zM32 28h1v1h-1zM78 28h1v1h-1zM82 28h1v1h-1zM84 28h1v1h-1zM89 28h1v1h-1zM92 28h1v1h-1zM96 28h1v1h-1zM9 29h1v1h-1zM47 29h2v1h-2zM58 29h1v1h-1zM64 29h1v1h-1zM79 29h2v1h-2zM83 29h1v1h-1zM91 29h1v1h-1zM4 30h1v1h-1zM16 30h1v1h-1zM18 30h1v1h-1zM28 30h2v1h-2zM64 30h1v1h-1zM83 30h1v1h-1zM16 31h1v1h-1zM23 31h1v1h-1zM50 31h1v1h-1zM52 31h3v1h-3zM71 31h1v1h-1zM28 32h3v1h-3zM35 32h1v1h-1zM52 32h1v1h-1zM57 32h1v1h-1zM59 32h1v1h-1zM66 32h1v1h-1zM78 32h3v1h-3zM89 32h1v1h-1zM3 33h1v1h-1zM16 33h1v1h-1zM18 33h1v1h-1zM25 33h1v1h-1zM27 33h1v1h-1zM52 33h1v1h-1zM65 33h1v1h-1zM10 34h1v1h-1zM14 34h1v1h-1zM18 34h1v1h-1zM25 34h2v1h-2zM32 34h1v1h-1zM58 34h1v1h-1zM86 34h1v1h-1zM96 34h2v1h-2zM4 35h1v1h-1zM18 35h1v1h-1zM23 35h1v1h-1zM34 35h1v1h-1zM38 35h1v1h-1zM60 35h1v1h-1zM64 35h1v1h-1zM89 35h1v1h-1zM94 35h1v1h-1zM2 36h1v1h-1zM4 36h1v1h-1zM31 36h1v1h-1zM49 36h2v1h-2zM72 36h1v1h-1zM77 36h1v1h-1zM17 37h1v1h-1zM20 37h2v1h-2zM25 37h1v1h-1zM33 37h1v1h-1zM40 37h1v1h-1zM43 37h1v1h-1zM47 37h1v1h-1zM51 37h2v1h-2zM61 37h1v1h-1zM63 37h1v1h-1zM66 37h1v1h-1zM91 37h1v1h-1zM98 37h1v1h-1zM16 38h1v1h-1zM34 38h1v1h-1zM51 38h1v1h-1zM54 38h2v1h-2zM73 38h2v1h-2zM77 38h1v1h-1zM2 39h1v1h-1zM21 39h2v1h-2zM33 39h1v1h-1zM36 39h1v1h-1zM48 39h1v1h-1zM50 39h1v1h-1zM64 39h1v1h-1zM72 39h3v1h-3zM78 39h1v1h-1zM84 39h1v1h-1zM88 39h1v1h-1zM90 39h1v1h-1zM92 39h1v1h-1zM4 40h1v1h-1zM24 40h1v1h-1zM32 40h1v1h-1zM47 40h1v1h-1zM80 40h1v1h-1zM83 40h1v1h-1zM85 40h1v1h-1zM94 40h1v1h-1zM96 40h1v1h-1zM12 41h1v1h-1zM17 41h1v1h-1zM51 41h1v1h-1zM57 41h1v1h-1zM62 41h1v1h-1zM65 41h1v1h-1zM73 41h1v1h-1zM91 41h1v1h-1zM2 42h1v1h-1zM19 42h1v1h-1zM27 42h1v1h-1zM45 42h1v1h-1zM53 42h1v1h-1zM57 42h1v1h-1zM82 42h2v1h-2zM89 42h1v1h-1zM3 43h1v1h-1zM13 43h1v1h-1zM22 43h1v1h-1zM24 43h1v1h-1zM29 43h1v1h-1zM32 43h1v1h-1zM50 43h1v1h-1zM60 43h1v1h-1zM66 43h1v1h-1zM73 43h1v1h-1zM77 43h1v1h-1zM85 43h1v1h-1zM87 43h1v1h-1zM89 43h1v1h-1zM0 44h1v1h-1zM24 44h1v1h-1zM45 44h1v1h-1zM50 44h1v1h-1zM66 44h1v1h-1zM80 44h1v1h-1zM90 44h1v1h-1zM98 44h1v1h-1zM1 45h1v1h-1zM11 45h1v1h-1zM15 45h1v1h-1zM26 45h1v1h-1zM28 45h1v1h-1zM51 45h1v1h-1zM73 45h1v1h-1zM84 45h1v1h-1zM21 46h1v1h-1zM26 46h1v1h-1zM56 46h1v1h-1zM80 46h1v1h-1zM90 46h1v1h-1zM2 47h1v1h-1zM9 47h1v1h-1zM15 47h1v1h-1zM62 47h1v1h-1zM5 48h1v1h-1zM9 48h1v1h-1zM20 48h1v1h-1zM24 48h1v1h-1zM31 48h1v1h-1zM33 48h1v1h-1zM41 48h1v1h-1zM47 48h1v1h-1zM64 48h1v1h-1zM77 48h1v1h-1zM84 48h1v1h-1zM86 48h1v1h-1zM99 48h1v1h-1zM28 49h1v1h-1zM41 49h1v1h-1zM47 49h1v1h-1zM50 49h1v1h-1zM60 49h1v1h-1zM91 49h1v1h-1zM11 50h1v1h-1zM20 50h1v1h-1zM22 50h1v1h-1zM24 50h1v1h-1zM31 50h1v1h-1zM40 50h2v1h-2zM63 50h1v1h-1zM82 50h1v1h-1zM89 50h1v1h-1zM93 50h1v1h-1zM5 51h1v1h-1zM36 51h1v1h-1zM1 52h1v1h-1zM19 52h1v1h-1zM25 52h1v1h-1zM76 52h2v1h-2zM86 52h1v1h-1zM93 52h1v1h-1zM95 52h1v1h-1zM6 53h1v1h-1zM26 53h1v1h-1zM29 53h1v1h-1zM51 53h1v1h-1zM62 53h2v1h-2zM83 53h3v1h-3zM87 53h1v1h-1zM92 53h1v1h-1zM99 53h1v1h-1zM10 54h1v1h-1zM14 54h1v1h-1zM23 54h1v1h-1zM51 54h1v1h-1zM63 54h1v1h-1zM82 54h1v1h-1zM94 54h1v1h-1zM39 55h1v1h-1zM50 55h1v1h-1zM52 55h1v1h-1zM54 55h1v1h-1zM67 55h1v1h-1zM78 55h1v1h-1zM80 55h1v1h-1zM87 55h1v1h-1zM37 56h1v1h-1zM52 56h1v1h-1zM57 56h1v1h-1zM67 56h1v1h-1zM79 56h1v1h-1zM83 56h1v1h-1zM85 56h1v1h-1zM2 57h1v1h-1zM4 57h1v1h-1zM12 57h1v1h-1zM20 57h1v1h-1zM27 57h1v1h-1zM34 57h1v1h-1zM48 57h1v1h-1zM83 57h1v1h-1zM88 57h1v1h-1zM7 58h1v1h-1zM14 58h1v1h-1zM23 58h1v1h-1zM45 58h1v1h-1zM61 58h1v1h-1zM82 58h1v1h-1zM94 58h1v1h-1zM24 59h1v1h-1zM29 59h2v1h-2zM49 59h1v1h-1zM56 59h1v1h-1zM58 59h1v1h-1zM64 59h1v1h-1zM69 59h1v1h-1zM77 59h1v1h-1zM1 60h1v1h-1zM15 60h1v1h-1zM60 60h1v1h-1zM75 60h1v1h-1zM94 60h1v1h-1zM15 61h1v1h-1zM18 61h1v1h-1zM30 61h2v1h-2zM41 61h1v1h-1zM46 61h1v1h-1zM49 61h1v1h-1zM54 61h1v1h-1zM58 61h1v1h-1zM66 61h1v1h-1zM84 61h1v1h-1zM3 62h1v1h-1zM17 62h1v1h-1zM31 62h1v1h-1zM40 62h1v1h-1zM51 62h1v1h-1zM56 62h1v1h-1zM79 62h1v1h-1zM98 62h1v1h-1zM20 63h1v1h-1zM41 63h1v1h-1zM67 63h1v1h-1zM77 63h1v1h-1zM86 63h1v1h-1zM94 63h1v1h-1zM15 64h1v1h-1zM30 64h1v1h-1zM50 64h1v1h-1zM66 64h1v1h-1zM69 64h1v1h-1zM81 64h1v1h-1zM83 64h1v1h-1zM93 64h1v1h-1zM0 65h1v1h-1zM28 65h1v1h-1zM34 65h1v1h-1zM38 65h1v1h-1zM68 65h1v1h-1zM87 65h1v1h-1zM92 65h1v1h-1zM8 66h1v1h-1zM59 66h2v1h-2zM88 66h1v1h-1zM4 67h1v1h-1zM17 67h1v1h-1zM31 67h2v1h-2zM39 67h1v1h-1zM49 67h1v1h-1zM60 67h1v1h-1zM66 67h1v1h-1zM75 67h1v1h-1zM91 67h1v1h-1zM2 68h1v1h-1zM4 68h1v1h-1zM8 68h1v1h-1zM52 68h1v1h-1zM57 68h1v1h-1zM69 68h1v1h-1zM78 68h1v1h-1zM82 68h1v1h-1zM14 69h1v1h-1zM16 69h1v1h-1zM18 69h1v1h-1zM22 69h1v1h-1zM33 69h1v1h-1zM56 69h1v1h-1zM58 69h1v1h-1zM91 69h1v1h-1zM99 69h1v1h-1zM1 70h1v1h-1zM15 70h1v1h-1zM19 70h1v1h-1zM24 70h1v1h-1zM28 70h1v1h-1zM45 70h1v1h-1zM50 70h1v1h-1zM52 70h1v1h-1zM60 70h1v1h-1zM63 70h1v1h-1zM67 70h1v1h-1zM77 70h2v1h-2zM86 70h2v1h-2zM97 70h1v1h-1zM19 71h1v1h-1zM29 71h2v1h-2zM33 71h1v1h-1zM44 71h1v1h-1zM51 71h1v1h-1zM60 71h1v1h-1zM62 71h1v1h-1zM70 71h1v1h-1zM79 71h1v1h-1zM83 71h1v1h-1zM99 71h1v1h-1zM5 72h1v1h-1zM7 72h1v1h-1zM26 72h1v1h-1zM44 72h1v1h-1zM46 72h1v1h-1zM62 72h1v1h-1zM4 73h1v1h-1zM16 73h1v1h-1zM30 73h1v1h-1zM79 73h1v1h-1zM83 73h1v1h-1zM89 73h2v1h-2zM99 73h1v1h-1zM0 74h1v1h-1zM21 74h1v1h-1zM34 74h1v1h-1zM49 74h1v1h-1zM60 74h1v1h-1zM76 74h1v1h-1zM89 74h1v1h-1zM91 74h1v1h-1zM17 75h1v1h-1zM27 75h1v1h-1zM32 75h2v1h-2zM46 75h1v1h-1zM52 75h1v1h-1zM69 75h1v1h-1zM72 75h1v1h-1zM87 75h1v1h-1zM91 75h1v1h-1zM5 76h1v1h-1zM36 76h1v1h-1zM57 76h1v1h-1zM62 76h1v1h-1zM66 76h1v1h-1zM68 76h1v1h-1zM80 76h1v1h-1zM85 76h1v1h-1zM87 76h1v1h-1zM35 77h1v1h-1zM56 77h1v1h-1zM58 77h1v1h-1zM80 77h1v1h-1zM83 77h1v1h-1zM14 78h1v1h-1zM28 78h1v1h-1zM31 78h1v1h-1zM48 78h1v1h-1zM57 78h1v1h-1zM81 78h1v1h-1zM99 78h1v1h-1zM2 79h1v1h-1zM9 79h1v1h-1zM19 79h1v1h-1zM29 79h1v1h-1zM39 79h1v1h-1zM35 80h1v1h-1zM38 80h2v1h-2zM48 80h1v1h-1zM71 80h1v1h-1zM85 80h1v1h-1zM94 80h1v1h-1zM66 81h1v1h-1zM83 81h1v1h-1zM85 81h1v1h-1zM91 81h2v1h-2zM98 81h1v1h-1zM9 82h1v1h-1zM24 82h1v1h-1zM30 82h1v1h-1zM59 82h1v1h-1zM75 82h2v1h-2zM81 82h1v1h-1zM88 82h1v1h-1zM96 82h1v1h-1zM14 83h1v1h-1zM29 83h1v1h-1zM32 83h1v1h-1zM45 83h1v1h-1zM60 83h3v1h-3zM74 83h1v1h-1zM85 83h1v1h-1zM90 83h1v1h-1zM1 84h1v1h-1zM39 84h1v1h-1zM46 84h2v1h-2zM59 84h1v1h-1zM83 84h1v1h-1zM89 84h1v1h-1zM4 85h1v1h-1zM9 85h1v1h-1zM13 85h1v1h-1zM20 85h1v1h-1zM28 85h1v1h-1zM38 85h1v1h-1zM48 85h1v1h-1zM65 85h1v1h-1zM19 86h1v1h-1zM22 86h1v1h-1zM47 86h1v1h-1zM66 86h1v1h-1zM79 86h1v1h-1zM86 86h3v1h-3zM2 87h1v1h-1zM15 87h1v1h-1zM33 87h1v1h-1zM37 87h1v1h-1zM47 87h1v1h-1zM53 87h1v1h-1zM82 87h2v1h-2zM97 87h1v1h-1zM28 88h2v1h-2zM32 88h1v1h-1zM48 88h1v1h-1zM50 88h1v1h-1zM61 88h2v1h-2zM69 88h1v1h-1zM73 88h1v1h-1zM80 88h1v1h-1zM88 88h1v1h-1zM91 88h1v1h-1zM96 88h1v1h-1zM28 89h1v1h-1zM41 89h1v1h-1zM45 89h1v1h-1zM64 89h1v1h-1zM0 90h3v1h-3zM8 90h1v1h-1zM17 90h2v1h-2zM28 90h2v1h-2zM33 90h1v1h-1zM49 90h1v1h-1zM57 90h1v1h-1zM67 90h1v1h-1zM73 90h1v1h-1zM76 90h1v1h-1zM84 90h1v1h-1zM1 91h1v1h-1zM22 91h1v1h-1zM34 91h1v1h-1zM51 91h1v1h-1zM67 91h1v1h-1zM83 91h1v1h-1zM89 91h1v1h-1zM94 91h2v1h-2zM0 92h1v1h-1zM16 92h1v1h-1zM33 92h1v1h-1zM48 92h1v1h-1zM69 92h1v1h-1zM89 92h1v1h-1zM94 92h2v1h-2zM5 93h1v1h-1zM14 93h1v1h-1zM16 93h2v1h-2zM19 93h1v1h-1zM24 93h2v1h-2zM27 93h1v1h-1zM31 93h1v1h-1zM35 93h1v1h-1zM37 93h1v1h-1zM49 93h1v1h-1zM56 93h1v1h-1zM83 93h1v1h-1zM87 93h1v1h-1zM6 94h1v1h-1zM12 94h1v1h-1zM28 94h2v1h-2zM49 94h1v1h-1zM55 94h2v1h-2zM59 94h1v1h-1zM62 94h1v1h-1zM80 94h1v1h-1zM89 94h1v1h-1zM16 95h1v1h-1zM55 95h1v1h-1zM59 95h1v1h-1zM74 95h1v1h-1zM9 96h1v1h-1zM11 96h1v1h-1zM14 96h2v1h-2zM19 96h1v1h-1zM24 96h1v1h-1zM42 96h1v1h-1zM44 96h1v1h-1zM64 96h2v1h-2zM75 96h1v1h-1zM81 96h1v1h-1zM15 97h1v1h-1zM26 97h1v1h-1zM30 97h1v1h-1zM47 97h2v1h-2zM53 97h1v1h-1zM90 97h1v1h-1zM94 97h1v1h-1zM22 98h1v1h-1zM25 98h3v1h-3zM29 98h1v1h-1zM32 98h1v1h-1zM37 98h1v1h-1zM43 98h1v1h-1zM48 98h1v1h-1zM50 98h1v1h-1zM53 98h1v1h-1zM57 98h1v1h-1zM82 98h1v1h-1zM87 98h1v1h-1zM1 99h1v1h-1zM36 99h1v1h-1zM51 99h1v1h-1zM57 99h1v1h-1zM62 99h1v1h-1zM65 99h1v1h-1zM67 99h1v1h-1zM82 99h1v1h-1zM89 99h2v1h-2zM92 99h2v1h-2z"/>
<path fill="rgb(131,131,131)" d="M0 0h2v1h-2zM3 0h1v1h-1zM12 0h1v1h-1zM22 0h1v1h-1zM24 0h1v1h-1zM28 0h2v1h-2zM37 0h1v1h-1zM49 0h1v1h-1zM81 0h1v1h-1zM84 0h1v1h-1zM90 0h1v1h-1zM11 1h1v1h-1zM16 1h1v1h-1zM18 1h1v1h-1zM45 1h2v1h-2zM80 1h2v1h-2zM98 1h1v1h-1zM3 2h1v1h-1zM24 2h1v1h-1zM27 2h1v1h-1zM39 2h1v1h-1zM45 2h1v1h-1zM49 2h1v1h-1zM61 2h2v1h-2zM74 2h1v1h-1zM80 2h1v1h-1zM96 2h1v1h-1zM13 3h1v1h-1zM15 3h1v1h-1zM24 3h1v1h-1zM41 3h1v1h-1zM46 3h1v1h-1zM73 3h1v1h-1zM9 4h1v1h-1zM42 4h1v1h-1zM50 4h1v1h-1zM64 4h1v1h-1zM93 4h1v1h-1zM96 4h1v1h-1zM4 5h1v1h-1zM7 5h1v1h-1zM15 5h1v1h-1zM28 5h2v1h-2zM36 5h1v1h-1zM47 5h1v1h-1zM49 5h1v1h-1zM81 5h1v1h-1zM96 5h1v1h-1zM26 6h1v1h-1zM54 6h1v1h-1zM67 6h1v1h-1zM81 6h1v1h-1zM89 6h1v1h-1zM94 6h1v1h-1zM0 7h1v1h-1zM13 7h1v1h-1zM17 7h1v1h-1zM23 7h1v1h-1zM31 7h1v1h-1zM35 7h1v1h-1zM64 7h1v1h-1zM80 7h2v1h-2zM95 7h1v1h-1zM0 8h1v1h-1zM26 8h1v1h-1zM28 8h1v1h-1zM30 8h3v1h-3zM55 8h1v1h-1zM83 8h1v1h-1zM88 8h1v1h-1zM96 8h1v1h-1zM12 9h1v1h-1zM17 9h1v1h-1zM31 9h1v1h-1zM46 9h1v1h-1zM72 9h1v1h-1zM82 9h1v1h-1zM94 9h1v1h-1zM1 10h1v1h-1zM21 10h1v1h-1zM30 10h1v1h-1zM50 10h1v1h-1zM75 10h1v1h-1zM97 10h1v1h-1zM21 11h1v1h-1zM25 11h1v1h-1zM33 11h1v1h-1zM46 11h1v1h-1zM50 11h1v1h-1zM67 11h1v1h-1zM69 11h1v1h-1zM12 12h1v1h-1zM20 12h1v1h-1zM64 12h1v1h-1zM74 12h1v1h-1zM91 12h1v1h-1zM41 13h1v1h-1zM48 13h1v1h-1zM53 13h1v1h-1zM6 14h1v1h-1zM27 14h1v1h-1zM46 14h1v1h-1zM60 14h1v1h-1zM69 14h1v1h-1zM77 14h1v1h-1zM82 14h1v1h-1zM84 14h1v1h-1zM88 14h2v1h-2zM91 14h1v1h-1zM96 14h1v1h-1zM2 15h1v1h-1zM38 15h1v1h-1zM40 15h3v1h-3zM50 15h1v1h-1zM60 15h1v1h-1zM63 15h1v1h-1zM67 15h1v1h-1zM81 15h1v1h-1zM8 16h1v1h-1zM14 16h1v1h-1zM33 16h1v1h-1zM57 16h1v1h-1zM64 16h1v1h-1zM91 16h1v1h-1zM93 16h1v1h-1zM98 16h1v1h-1zM2 17h1v1h-1zM6 17h1v1h-1zM15 17h1v1h-1zM21 17h1v1h-1zM28 17h1v1h-1zM37 17h1v1h-1zM51 17h1v1h-1zM66 17h1v1h-1zM73 17h1v1h-1zM91 17h1v1h-1zM93 17h1v1h-1zM1 18h1v1h-1zM14 18h1v1h-1zM16 18h1v1h-1zM28 18h1v1h-1zM38 18h1v1h-1zM77 18h1v1h-1zM0 19h1v1h-1zM43 19h1v1h-1zM47 19h1v1h-1zM49 19h1v1h-1zM51 19h1v1h-1zM55 19h1v1h-1zM80 19h1v1h-1zM86 19h2v1h-2zM89 19h1v1h-1zM93 19h1v1h-1zM3 20h1v1h-1zM5 20h1v1h-1zM23 20h1v1h-1zM31 20h1v1h-1zM33 20h1v1h-1zM62 20h1v1h-1zM78 20h1v1h-1zM3 21h1v1h-1zM14 21h2v1h-2zM29 21h1v1h-1zM43 21h1v1h-1zM88 21h2v1h-2zM92 21h1v1h-1zM95 21h2v1h-2zM99 21h1v1h-1zM26 22h1v1h-1zM53 22h1v1h-1zM62 22h1v1h-1zM68 22h1v1h-1zM88 22h1v1h-1zM90 22h1v1h-1zM4 23h1v1h-1zM15 23h1v1h-1zM17 23h1v1h-1zM43 23h1v1h-1zM47 23h1v1h-1zM53 23h1v1h-1zM60 23h1v1h-1zM65 23h1v1h-1zM72 23h1v1h-1zM80 23h1v1h-1zM86 23h1v1h-1zM91 23h1v1h-1zM94 23h1v1h-1zM96 23h1v1h-1zM9 24h1v1h-1zM14 24h1v1h-1zM18 24h1v1h-1zM36 24h1v1h-1zM38 24h1v1h-1zM40 24h1v1h-1zM46 24h2v1h-2zM63 24h1v1h-1zM74 24h1v1h-1zM93 24h1v1h-1zM1 25h1v1h-1zM8 25h1v1h-1zM11 25h1v1h-1zM16 25h1v1h-1zM19 25h1v1h-1zM72 25h1v1h-1zM79 25h1v1h-1zM82 25h1v1h-1zM84 25h1v1h-1zM99 25h1v1h-1zM15 26h1v1h-1zM26 26h1v1h-1zM29 26h1v1h-1zM31 26h1v1h-1zM40 26h1v1h-1zM45 26h1v1h-1zM53 26h1v1h-1zM68 26h2v1h-2zM77 26h1v1h-1zM81 26h1v1h-1zM3 27h1v1h-1zM10 27h1v1h-1zM23 27h1v1h-1zM26 27h1v1h-1zM28 27h1v1h-1zM36 27h2v1h-2zM59 27h1v1h-1zM75 27h1v1h-1zM79 27h2v1h-2zM84 27h1v1h-1zM92 27h1v1h-1zM3 28h3v1h-3zM21 28h1v1h-1zM28 28h2v1h-2zM31 28h1v1h-1zM35 28h1v1h-1zM51 28h1v1h-1zM55 28h1v1h-1zM73 28h1v1h-1zM76 28h1v1h-1zM81 28h1v1h-1zM33 29h1v1h-1zM78 29h1v1h-1zM85 29h1v1h-1zM89 29h1v1h-1zM94 29h1v1h-1zM3 30h1v1h-1zM13 30h1v1h-1zM30 30h1v1h-1zM32 30h1v1h-1zM40 30h1v1h-1zM48 30h1v1h-1zM58 30h1v1h-1zM69 30h1v1h-1zM79 30h1v1h-1zM94 30h1v1h-1zM99 30h1v1h-1zM3 31h1v1h-1zM11 31h1v1h-1zM32 31h1v1h-1zM51 31h1v1h-1zM60 31h3v1h-3zM85 31h1v1h-1zM96 31h1v1h-1zM7 32h1v1h-1zM20 32h1v1h-1zM32 32h1v1h-1zM47 32h1v1h-1zM58 32h1v1h-1zM63 32h1v1h-1zM67 32h1v1h-1zM73 32h1v1h-1zM90 32h1v1h-1zM7 33h1v1h-1zM12 33h1v1h-1zM45 33h2v1h-2zM48 33h3v1h-3zM62 33h1v1h-1zM66 33h1v1h-1zM93 33h1v1h-1zM2 34h1v1h-1zM7 34h1v1h-1zM23 34h1v1h-1zM35 34h1v1h-1zM48 34h1v1h-1zM98 34h1v1h-1zM1 35h1v1h-1zM7 35h1v1h-1zM14 35h1v1h-1zM16 35h2v1h-2zM24 35h1v1h-1zM45 35h2v1h-2zM55 35h1v1h-1zM59 35h1v1h-1zM71 35h1v1h-1zM79 35h1v1h-1zM84 35h1v1h-1zM93 35h1v1h-1zM97 35h1v1h-1zM7 36h1v1h-1zM11 36h1v1h-1zM19 36h2v1h-2zM32 36h1v1h-1zM42 36h1v1h-1zM52 36h1v1h-1zM61 36h1v1h-1zM88 36h1v1h-1zM91 36h1v1h-1zM94 36h1v1h-1zM99 36h1v1h-1zM2 37h1v1h-1zM8 37h1v1h-1zM13 37h1v1h-1zM16 37h1v1h-1zM28 37h1v1h-1zM39 37h1v1h-1zM42 37h1v1h-1zM44 37h2v1h-2zM50 37h1v1h-1zM58 37h1v1h-1zM76 37h1v1h-1zM1 38h1v1h-1zM4 38h1v1h-1zM9 38h1v1h-1zM25 38h1v1h-1zM33 38h1v1h-1zM36 38h2v1h-2zM47 38h1v1h-1zM71 38h1v1h-1zM87 38h1v1h-1zM99 38h1v1h-1zM3 39h1v1h-1zM8 39h1v1h-1zM51 39h1v1h-1zM60 39h1v1h-1zM68 39h1v1h-1zM77 39h1v1h-1zM89 39h1v1h-1zM96 39h1v1h-1zM20 40h1v1h-1zM43 40h1v1h-1zM61 40h1v1h-1zM65 40h1v1h-1zM2 41h1v1h-1zM6 41h1v1h-1zM42 41h1v1h-1zM49 41h1v1h-1zM59 41h1v1h-1zM83 41h1v1h-1zM97 41h1v1h-1zM17 42h1v1h-1zM20 42h1v1h-1zM37 42h1v1h-1zM39 42h1v1h-1zM77 42h1v1h-1zM79 42h1v1h-1zM0 43h1v1h-1zM21 43h1v1h-1zM47 43h1v1h-1zM52 43h1v1h-1zM55 43h1v1h-1zM75 43h1v1h-1zM94 43h1v1h-1zM2 44h2v1h-2zM13 44h1v1h-1zM49 44h1v1h-1zM59 44h1v1h-1zM63 44h1v1h-1zM74 44h1v1h-1zM94 44h1v1h-1zM97 44h1v1h-1zM14 45h1v1h-1zM18 45h1v1h-1zM37 45h1v1h-1zM41 45h1v1h-1zM71 45h1v1h-1zM83 45h1v1h-1zM85 45h1v1h-1zM95 45h1v1h-1zM28 46h1v1h-1zM30 46h1v1h-1zM34 46h1v1h-1zM42 46h1v1h-1zM51 46h1v1h-1zM53 46h1v1h-1zM67 46h1v1h-1zM77 46h1v1h-1zM81 46h1v1h-1zM93 46h2v1h-2zM4 47h1v1h-1zM28 47h1v1h-1zM47 47h1v1h-1zM70 47h1v1h-1zM72 47h1v1h-1zM93 47h1v1h-1zM22 48h1v1h-1zM30 48h1v1h-1zM88 48h1v1h-1zM93 48h2v1h-2zM0 49h2v1h-2zM15 49h1v1h-1zM17 49h1v1h-1zM24 49h1v1h-1zM29 49h2v1h-2zM39 49h2v1h-2zM43 49h1v1h-1zM5 50h1v1h-1zM16 50h1v1h-1zM66 50h1v1h-1zM79 50h1v1h-1zM84 50h1v1h-1zM95 50h1v1h-1zM99 50h1v1h-1zM4 51h1v1h-1zM19 51h1v1h-1zM43 51h2v1h-2zM46 51h1v1h-1zM58 51h1v1h-1zM78 51h1v1h-1zM81 51h1v1h-1zM89 51h1v1h-1zM97 51h1v1h-1zM2 52h1v1h-1zM30 52h1v1h-1zM56 52h1v1h-1zM61 52h1v1h-1zM74 52h1v1h-1zM91 52h2v1h-2zM10 53h1v1h-1zM28 53h1v1h-1zM45 53h2v1h-2zM60 53h1v1h-1zM69 53h1v1h-1zM81 53h1v1h-1zM90 53h1v1h-1zM93 53h2v1h-2zM3 54h1v1h-1zM46 54h1v1h-1zM62 54h1v1h-1zM80 54h1v1h-1zM83 54h1v1h-1zM99 54h1v1h-1zM9 55h1v1h-1zM19 55h1v1h-1zM24 55h2v1h-2zM42 55h1v1h-1zM46 55h1v1h-1zM63 55h1v1h-1zM72 55h1v1h-1zM84 55h1v1h-1zM91 55h2v1h-2zM99 55h1v1h-1zM16 56h1v1h-1zM30 56h2v1h-2zM45 56h2v1h-2zM58 56h1v1h-1zM61 56h1v1h-1zM0 57h1v1h-1zM3 57h1v1h-1zM13 57h1v1h-1zM31 57h1v1h-1zM36 57h1v1h-1zM46 57h1v1h-1zM50 57h1v1h-1zM79 57h1v1h-1zM87 57h1v1h-1zM96 57h1v1h-1zM18 58h1v1h-1zM34 58h1v1h-1zM40 58h2v1h-2zM46 58h1v1h-1zM60 58h1v1h-1zM63 58h1v1h-1zM76 58h1v1h-1zM83 58h1v1h-1zM1 59h1v1h-1zM5 59h1v1h-1zM13 59h1v1h-1zM16 59h1v1h-1zM19 59h1v1h-1zM43 59h1v1h-1zM46 59h1v1h-1zM51 59h2v1h-2zM89 59h1v1h-1zM92 59h2v1h-2zM95 59h1v1h-1zM2 60h1v1h-1zM4 60h1v1h-1zM48 60h1v1h-1zM52 60h1v1h-1zM61 60h3v1h-3zM3 61h1v1h-1zM13 61h1v1h-1zM78 61h1v1h-1zM81 61h1v1h-1zM89 61h1v1h-1zM97 61h1v1h-1zM14 62h1v1h-1zM21 62h2v1h-2zM25 62h1v1h-1zM27 62h1v1h-1zM39 62h1v1h-1zM47 62h2v1h-2zM50 62h1v1h-1zM62 62h1v1h-1zM65 62h1v1h-1zM67 62h1v1h-1zM72 62h1v1h-1zM74 62h3v1h-3zM90 62h2v1h-2zM96 62h1v1h-1zM3 63h1v1h-1zM10 63h1v1h-1zM16 63h1v1h-1zM29 63h1v1h-1zM34 63h1v1h-1zM42 63h1v1h-1zM57 63h2v1h-2zM80 63h2v1h-2zM88 63h1v1h-1zM99 63h1v1h-1zM10 64h1v1h-1zM24 64h1v1h-1zM32 64h1v1h-1zM48 64h1v1h-1zM53 64h1v1h-1zM9 65h1v1h-1zM58 65h1v1h-1zM81 65h1v1h-1zM85 65h2v1h-2zM97 65h1v1h-1zM23 66h1v1h-1zM28 66h1v1h-1zM33 66h1v1h-1zM35 66h1v1h-1zM48 66h2v1h-2zM58 66h1v1h-1zM62 66h1v1h-1zM66 66h1v1h-1zM76 66h1v1h-1zM86 66h1v1h-1zM89 66h1v1h-1zM3 67h1v1h-1zM6 67h1v1h-1zM13 67h1v1h-1zM21 67h1v1h-1zM34 67h1v1h-1zM63 67h1v1h-1zM82 67h2v1h-2zM93 67h1v1h-1zM98 67h1v1h-1zM11 68h2v1h-2zM22 68h1v1h-1zM24 68h1v1h-1zM35 68h1v1h-1zM41 68h1v1h-1zM48 68h1v1h-1zM54 68h3v1h-3zM17 69h1v1h-1zM20 69h1v1h-1zM32 69h1v1h-1zM89 69h1v1h-1zM2 70h1v1h-1zM4 70h1v1h-1zM17 70h1v1h-1zM35 70h1v1h-1zM47 70h1v1h-1zM62 70h1v1h-1zM66 70h1v1h-1zM72 70h1v1h-1zM94 70h1v1h-1zM96 70h1v1h-1zM98 70h1v1h-1zM15 71h1v1h-1zM24 71h1v1h-1zM48 71h1v1h-1zM54 71h1v1h-1zM56 71h1v1h-1zM68 71h1v1h-1zM72 71h1v1h-1zM76 71h1v1h-1zM90 71h1v1h-1zM3 72h1v1h-1zM20 72h1v1h-1zM28 72h1v1h-1zM35 72h1v1h-1zM51 72h2v1h-2zM63 72h1v1h-1zM69 72h1v1h-1zM77 72h1v1h-1zM80 72h1v1h-1zM84 72h2v1h-2zM98 72h1v1h-1zM0 73h1v1h-1zM2 73h1v1h-1zM6 73h1v1h-1zM9 73h1v1h-1zM14 73h1v1h-1zM17 73h1v1h-1zM28 73h1v1h-1zM36 73h1v1h-1zM44 73h1v1h-1zM46 73h1v1h-1zM49 73h1v1h-1zM67 73h1v1h-1zM75 73h1v1h-1zM85 73h1v1h-1zM92 73h1v1h-1zM6 74h1v1h-1zM13 74h1v1h-1zM48 74h1v1h-1zM53 74h1v1h-1zM62 74h1v1h-1zM93 74h1v1h-1zM10 75h1v1h-1zM15 75h1v1h-1zM23 75h1v1h-1zM45 75h1v1h-1zM59 75h1v1h-1zM64 75h1v1h-1zM78 75h1v1h-1zM84 75h1v1h-1zM95 75h1v1h-1zM0 76h2v1h-2zM4 76h1v1h-1zM22 76h1v1h-1zM33 76h1v1h-1zM49 76h1v1h-1zM53 76h2v1h-2zM84 76h1v1h-1zM1 77h1v1h-1zM19 77h1v1h-1zM24 77h1v1h-1zM31 77h1v1h-1zM46 77h1v1h-1zM53 77h1v1h-1zM70 77h2v1h-2zM87 77h1v1h-1zM96 77h1v1h-1zM1 78h1v1h-1zM12 78h1v1h-1zM17 78h1v1h-1zM33 78h1v1h-1zM44 78h1v1h-1zM46 78h1v1h-1zM63 78h1v1h-1zM77 78h1v1h-1zM79 78h1v1h-1zM93 78h1v1h-1zM0 79h1v1h-1zM14 79h1v1h-1zM30 79h2v1h-2zM40 79h1v1h-1zM48 79h1v1h-1zM2 80h1v1h-1zM4 80h1v1h-1zM20 80h2v1h-2zM28 80h1v1h-1zM33 80h1v1h-1zM42 80h1v1h-1zM44 80h2v1h-2zM62 80h1v1h-1zM66 80h2v1h-2zM87 80h2v1h-2zM93 80h1v1h-1zM13 81h1v1h-1zM15 81h1v1h-1zM30 81h1v1h-1zM89 81h1v1h-1zM46 82h1v1h-1zM61 82h2v1h-2zM64 82h1v1h-1zM66 82h1v1h-1zM80 82h1v1h-1zM83 82h1v1h-1zM93 82h1v1h-1zM98 82h1v1h-1zM0 83h1v1h-1zM31 83h1v1h-1zM36 83h1v1h-1zM59 83h1v1h-1zM64 83h1v1h-1zM78 83h1v1h-1zM81 83h1v1h-1zM5 84h1v1h-1zM7 84h1v1h-1zM11 84h1v1h-1zM13 84h1v1h-1zM31 84h2v1h-2zM41 84h1v1h-1zM54 84h1v1h-1zM61 84h1v1h-1zM65 84h1v1h-1zM75 84h1v1h-1zM88 84h1v1h-1zM16 85h3v1h-3zM50 85h1v1h-1zM57 85h1v1h-1zM63 85h1v1h-1zM66 85h2v1h-2zM79 85h1v1h-1zM84 85h1v1h-1zM92 85h1v1h-1zM94 85h1v1h-1zM4 86h1v1h-1zM36 86h1v1h-1zM38 86h2v1h-2zM54 86h2v1h-2zM61 86h2v1h-2zM70 86h1v1h-1zM75 86h1v1h-1zM77 86h1v1h-1zM1 87h1v1h-1zM20 87h2v1h-2zM28 87h1v1h-1zM44 87h1v1h-1zM46 87h1v1h-1zM54 87h1v1h-1zM56 87h1v1h-1zM62 87h1v1h-1zM88 87h1v1h-1zM94 87h1v1h-1zM30 88h1v1h-1zM43 88h1v1h-1zM49 88h1v1h-1zM60 88h1v1h-1zM67 88h1v1h-1zM81 88h1v1h-1zM9 89h1v1h-1zM14 89h1v1h-1zM25 89h1v1h-1zM33 89h1v1h-1zM37 89h1v1h-1zM51 89h1v1h-1zM53 89h2v1h-2zM89 89h1v1h-1zM96 89h1v1h-1zM14 90h1v1h-1zM20 90h1v1h-1zM30 90h3v1h-3zM36 90h2v1h-2zM47 90h1v1h-1zM53 90h1v1h-1zM58 90h1v1h-1zM60 90h2v1h-2zM97 90h2v1h-2zM0 91h1v1h-1zM26 91h1v1h-1zM31 91h1v1h-1zM33 91h1v1h-1zM37 91h1v1h-1zM43 91h1v1h-1zM74 91h1v1h-1zM76 91h1v1h-1zM82 91h1v1h-1zM84 91h1v1h-1zM11 92h1v1h-1zM24 92h1v1h-1zM43 92h1v1h-1zM45 92h1v1h-1zM62 92h1v1h-1zM68 92h1v1h-1zM80 92h1v1h-1zM92 92h1v1h-1zM0 93h1v1h-1zM21 93h2v1h-2zM42 93h2v1h-2zM47 93h1v1h-1zM64 93h1v1h-1zM70 93h1v1h-1zM94 93h1v1h-1zM4 94h1v1h-1zM15 94h1v1h-1zM31 94h1v1h-1zM38 94h1v1h-1zM0 95h1v1h-1zM12 95h1v1h-1zM32 95h1v1h-1zM35 95h1v1h-1zM43 95h1v1h-1zM67 95h1v1h-1zM1 96h1v1h-1zM8 96h1v1h-1zM20 96h1v1h-1zM28 96h1v1h-1zM31 96h1v1h-1zM41 96h1v1h-1zM45 96h1v1h-1zM60 96h1v1h-1zM10 97h1v1h-1zM17 97h1v1h-1zM19 97h1v1h-1zM55 97h1v1h-1zM59 97h1v1h-1zM66 97h1v1h-1zM76 97h2v1h-2zM84 97h1v1h-1zM89 97h1v1h-1zM16 98h1v1h-1zM45 98h2v1h-2zM54 98h1v1h-1zM61 98h1v1h-1zM66 98h1v1h-1zM68 98h1v1h-1zM74 98h1v1h-1zM81 98h1v1h-1zM4 99h1v1h-1zM17 99h2v1h-2zM35 99h1v1h-1zM43 99h1v1h-1zM64 99h1v1h-1zM69 99h1v1h-1zM78 99h1v1h-1zM91 99h1v1h-1zM95 99h1v1h-1z"/>
<path fill="rgb(139,139,139)" d="M8 0h1v1h-1zM10 0h1v1h-1zM14 0h1v1h-1zM63 0h1v1h-1zM75 0h2v1h-2zM82 0h1v1h-1zM87 0h1v1h-1zM5 1h1v1h-1zM7 1h1v1h-1zM14 1h1v1h-1zM49 1h1v1h-1zM74 1h1v1h-1zM95 1h1v1h-1zM32 2h2v1h-2zM35 2h1v1h-1zM16 3h3v1h-3zM29 3h1v1h-1zM34 3h1v1h-1zM36 3h1v1h-1zM40 3h1v1h-1zM62 3h1v1h-1zM68 3h1v1h-1zM74 3h1v1h-1zM97 3h1v1h-1zM1 4h1v1h-1zM3 4h1v1h-1zM13 4h1v1h-1zM48 4h1v1h-1zM65 4h1v1h-1zM68 4h1v1h-1zM75 4h1v1h-1zM89 4h1v1h-1zM2 5h1v1h-1zM11 5h1v1h-1zM13 5h1v1h-1zM33 5h1v1h-1zM45 5h1v1h-1zM88 5h1v1h-1zM93 5h1v1h-1zM99 5h1v1h-1zM43 6h1v1h-1zM47 6h1v1h-1zM53 6h1v1h-1zM75 6h1v1h-1zM80 6h1v1h-1zM83 6h1v1h-1zM88 6h1v1h-1zM98 6h1v1h-1zM9 7h1v1h-1zM66 7h1v1h-1zM69 7h1v1h-1zM76 7h3v1h-3zM90 7h1v1h-1zM2 8h1v1h-1zM36 8h2v1h-2zM63 8h1v1h-1zM65 8h2v1h-2zM75 8h1v1h-1zM94 8h1v1h-1zM1 9h1v1h-1zM4 9h1v1h-1zM16 9h1v1h-1zM22 9h1v1h-1zM30 9h1v1h-1zM45 9h1v1h-1zM48 9h1v1h-1zM55 9h2v1h-2zM93 9h1v1h-1zM19 10h2v1h-2zM78 10h1v1h-1zM95 10h1v1h-1zM1 11h1v1h-1zM4 11h1v1h-1zM10 11h1v1h-1zM48 11h1v1h-1zM71 11h1v1h-1zM78 11h1v1h-1zM81 11h1v1h-1zM90 11h1v1h-1zM94 11h1v1h-1zM13 12h1v1h-1zM30 12h1v1h-1zM45 12h1v1h-1zM47 12h1v1h-1zM55 12h1v1h-1zM63 12h1v1h-1zM68 12h1v1h-1zM92 12h1v1h-1zM96 12h1v1h-1zM98 12h1v1h-1zM10 13h2v1h-2zM16 13h1v1h-1zM19 13h1v1h-1zM39 13h1v1h-1zM46 13h1v1h-1zM62 13h1v1h-1zM65 13h1v1h-1zM68 13h1v1h-1zM85 13h1v1h-1zM88 13h1v1h-1zM4 14h1v1h-1zM10 14h1v1h-1zM31 14h1v1h-1zM34 14h1v1h-1zM71 14h1v1h-1zM74 14h1v1h-1zM97 14h3v1h-3zM0 15h1v1h-1zM6 15h1v1h-1zM13 15h1v1h-1zM54 15h1v1h-1zM68 15h1v1h-1zM71 15h1v1h-1zM75 15h1v1h-1zM78 15h1v1h-1zM83 15h1v1h-1zM91 15h2v1h-2zM12 16h1v1h-1zM17 16h1v1h-1zM22 16h1v1h-1zM41 16h1v1h-1zM48 16h1v1h-1zM65 16h1v1h-1zM68 16h1v1h-1zM72 16h1v1h-1zM81 16h1v1h-1zM83 16h1v1h-1zM67 17h1v1h-1zM81 17h1v1h-1zM90 17h1v1h-1zM99 17h1v1h-1zM6 18h1v1h-1zM10 18h1v1h-1zM24 18h1v1h-1zM29 18h1v1h-1zM54 18h2v1h-2zM65 18h1v1h-1zM68 18h1v1h-1zM73 18h1v1h-1zM81 18h1v1h-1zM84 18h1v1h-1zM89 18h1v1h-1zM98 18h1v1h-1zM9 19h1v1h-1zM16 19h1v1h-1zM30 19h1v1h-1zM36 19h1v1h-1zM46 19h1v1h-1zM59 19h1v1h-1zM67 19h1v1h-1zM69 19h2v1h-2zM76 19h1v1h-1zM88 19h1v1h-1zM4 20h1v1h-1zM18 20h1v1h-1zM44 20h1v1h-1zM64 20h1v1h-1zM77 20h1v1h-1zM80 20h2v1h-2zM93 20h1v1h-1zM98 20h1v1h-1zM4 21h1v1h-1zM32 21h1v1h-1zM35 21h1v1h-1zM41 21h1v1h-1zM44 21h1v1h-1zM50 21h1v1h-1zM69 21h1v1h-1zM0 22h1v1h-1zM3 22h1v1h-1zM6 22h1v1h-1zM21 22h1v1h-1zM24 22h1v1h-1zM33 22h2v1h-2zM45 22h1v1h-1zM57 22h1v1h-1zM66 22h1v1h-1zM72 22h1v1h-1zM85 22h1v1h-1zM95 22h1v1h-1zM97 22h2v1h-2zM2 23h1v1h-1zM16 23h1v1h-1zM27 23h1v1h-1zM50 23h1v1h-1zM66 23h1v1h-1zM69 23h1v1h-1zM85 23h1v1h-1zM1 24h1v1h-1zM3 24h1v1h-1zM31 24h2v1h-2zM35 24h1v1h-1zM59 24h1v1h-1zM96 24h1v1h-1zM2 25h1v1h-1zM12 25h1v1h-1zM23 25h1v1h-1zM31 25h1v1h-1zM61 25h2v1h-2zM66 25h1v1h-1zM77 25h1v1h-1zM3 26h1v1h-1zM23 26h1v1h-1zM30 26h1v1h-1zM35 26h1v1h-1zM37 26h1v1h-1zM51 26h1v1h-1zM66 26h1v1h-1zM78 26h1v1h-1zM84 26h1v1h-1zM96 26h1v1h-1zM2 27h1v1h-1zM4 27h1v1h-1zM11 27h1v1h-1zM35 27h1v1h-1zM49 27h1v1h-1zM55 27h1v1h-1zM74 27h1v1h-1zM0 28h1v1h-1zM2 28h1v1h-1zM7 28h2v1h-2zM13 28h1v1h-1zM16 28h1v1h-1zM47 28h1v1h-1zM77 28h1v1h-1zM87 28h1v1h-1zM97 28h1v1h-1zM13 29h1v1h-1zM29 29h3v1h-3zM40 29h1v1h-1zM43 29h1v1h-1zM52 29h1v1h-1zM98 29h1v1h-1zM20 30h1v1h-1zM34 30h1v1h-1zM72 30h1v1h-1zM75 30h1v1h-1zM91 30h1v1h-1zM4 31h1v1h-1zM8 31h1v1h-1zM19 31h1v1h-1zM22 31h1v1h-1zM26 31h1v1h-1zM40 31h1v1h-1zM44 31h1v1h-1zM57 31h1v1h-1zM59 31h1v1h-1zM63 31h1v1h-1zM72 31h1v1h-1zM88 31h1v1h-1zM95 31h1v1h-1zM97 31h1v1h-1zM0 32h1v1h-1zM13 32h1v1h-1zM17 32h2v1h-2zM44 32h1v1h-1zM49 32h1v1h-1zM62 32h1v1h-1zM69 32h2v1h-2zM81 32h1v1h-1zM83 32h1v1h-1zM86 32h1v1h-1zM91 32h2v1h-2zM95 32h1v1h-1zM99 32h1v1h-1zM0 33h1v1h-1zM2 33h1v1h-1zM28 33h1v1h-1zM38 33h1v1h-1zM40 33h1v1h-1zM54 33h1v1h-1zM70 33h1v1h-1zM80 33h1v1h-1zM94 33h1v1h-1zM99 33h1v1h-1zM5 34h1v1h-1zM12 34h1v1h-1zM31 34h1v1h-1zM33 34h2v1h-2zM41 34h1v1h-1zM47 34h1v1h-1zM51 34h1v1h-1zM53 34h1v1h-1zM56 34h1v1h-1zM61 34h1v1h-1zM75 34h1v1h-1zM79 34h2v1h-2zM91 34h1v1h-1zM94 34h2v1h-2zM13 35h1v1h-1zM25 35h1v1h-1zM48 35h1v1h-1zM65 35h2v1h-2zM95 35h2v1h-2zM17 36h1v1h-1zM47 36h1v1h-1zM58 36h1v1h-1zM60 36h1v1h-1zM1 37h1v1h-1zM3 37h1v1h-1zM14 37h1v1h-1zM26 37h1v1h-1zM30 37h1v1h-1zM38 37h1v1h-1zM54 37h1v1h-1zM68 37h1v1h-1zM80 37h1v1h-1zM97 37h1v1h-1zM3 38h1v1h-1zM10 38h1v1h-1zM20 38h1v1h-1zM32 38h1v1h-1zM39 38h1v1h-1zM63 38h2v1h-2zM76 38h1v1h-1zM78 38h1v1h-1zM92 38h1v1h-1zM4 39h2v1h-2zM18 39h1v1h-1zM67 39h1v1h-1zM79 39h1v1h-1zM82 39h1v1h-1zM18 40h1v1h-1zM21 40h1v1h-1zM25 40h1v1h-1zM30 40h1v1h-1zM51 40h1v1h-1zM63 40h1v1h-1zM66 40h1v1h-1zM73 40h1v1h-1zM79 40h1v1h-1zM16 41h1v1h-1zM21 41h1v1h-1zM23 41h1v1h-1zM25 41h1v1h-1zM29 41h1v1h-1zM56 41h1v1h-1zM64 41h1v1h-1zM71 41h1v1h-1zM94 41h1v1h-1zM3 42h1v1h-1zM10 42h1v1h-1zM12 42h1v1h-1zM29 42h1v1h-1zM47 42h1v1h-1zM51 42h1v1h-1zM60 42h1v1h-1zM64 42h1v1h-1zM66 42h1v1h-1zM70 42h1v1h-1zM97 42h1v1h-1zM15 43h1v1h-1zM45 43h1v1h-1zM61 43h1v1h-1zM80 43h3v1h-3zM95 43h1v1h-1zM97 43h1v1h-1zM10 44h1v1h-1zM17 44h1v1h-1zM22 44h1v1h-1zM27 44h1v1h-1zM29 44h1v1h-1zM31 44h1v1h-1zM38 44h1v1h-1zM46 44h2v1h-2zM54 44h2v1h-2zM62 44h1v1h-1zM72 44h1v1h-1zM79 44h1v1h-1zM96 44h1v1h-1zM4 45h1v1h-1zM6 45h1v1h-1zM12 45h1v1h-1zM19 45h2v1h-2zM29 45h1v1h-1zM32 45h1v1h-1zM47 45h1v1h-1zM65 45h2v1h-2zM74 45h1v1h-1zM76 45h1v1h-1zM82 45h1v1h-1zM88 45h1v1h-1zM99 45h1v1h-1zM31 46h1v1h-1zM44 46h1v1h-1zM64 46h1v1h-1zM86 46h1v1h-1zM97 46h2v1h-2zM7 47h2v1h-2zM23 47h1v1h-1zM26 47h1v1h-1zM31 47h2v1h-2zM61 47h1v1h-1zM76 47h2v1h-2zM80 47h1v1h-1zM84 47h1v1h-1zM94 47h1v1h-1zM98 47h1v1h-1zM6 48h1v1h-1zM8 48h1v1h-1zM13 48h1v1h-1zM17 48h1v1h-1zM70 48h1v1h-1zM82 48h1v1h-1zM27 49h1v1h-1zM31 49h1v1h-1zM35 49h1v1h-1zM46 49h1v1h-1zM59 49h1v1h-1zM61 49h1v1h-1zM63 49h1v1h-1zM71 49h1v1h-1zM87 49h1v1h-1zM95 49h1v1h-1zM0 50h1v1h-1zM21 50h1v1h-1zM26 50h1v1h-1zM43 50h1v1h-1zM59 50h1v1h-1zM72 50h1v1h-1zM77 50h2v1h-2zM80 50h1v1h-1zM83 50h1v1h-1zM85 50h1v1h-1zM91 50h1v1h-1zM94 50h1v1h-1zM1 51h1v1h-1zM12 51h4v1h-4zM18 51h1v1h-1zM54 51h1v1h-1zM61 51h2v1h-2zM68 51h1v1h-1zM74 51h1v1h-1zM77 51h1v1h-1zM96 51h1v1h-1zM7 52h1v1h-1zM24 52h1v1h-1zM27 52h1v1h-1zM31 52h1v1h-1zM41 52h1v1h-1zM46 52h1v1h-1zM57 52h1v1h-1zM65 52h1v1h-1zM75 52h1v1h-1zM94 52h1v1h-1zM8 53h1v1h-1zM32 53h2v1h-2zM41 53h1v1h-1zM50 53h1v1h-1zM65 53h1v1h-1zM11 54h1v1h-1zM15 54h1v1h-1zM19 54h1v1h-1zM24 54h1v1h-1zM32 54h1v1h-1zM55 54h1v1h-1zM57 54h1v1h-1zM77 54h1v1h-1zM91 54h1v1h-1zM95 54h1v1h-1zM2 55h1v1h-1zM30 55h1v1h-1zM33 55h1v1h-1zM36 55h1v1h-1zM48 55h1v1h-1zM60 55h1v1h-1zM62 55h1v1h-1zM93 55h1v1h-1zM5 56h1v1h-1zM8 56h1v1h-1zM14 56h2v1h-2zM17 56h1v1h-1zM39 56h1v1h-1zM60 56h1v1h-1zM65 56h1v1h-1zM69 56h1v1h-1zM78 56h1v1h-1zM80 56h1v1h-1zM82 56h1v1h-1zM14 57h1v1h-1zM40 57h1v1h-1zM43 57h1v1h-1zM66 57h2v1h-2zM74 57h1v1h-1zM77 57h1v1h-1zM86 57h1v1h-1zM98 57h1v1h-1zM0 58h1v1h-1zM12 58h1v1h-1zM35 58h1v1h-1zM69 58h1v1h-1zM78 58h1v1h-1zM80 58h1v1h-1zM86 58h1v1h-1zM93 58h1v1h-1zM97 58h1v1h-1zM99 58h1v1h-1zM0 59h1v1h-1zM17 59h1v1h-1zM22 59h1v1h-1zM28 59h1v1h-1zM33 59h2v1h-2zM38 59h1v1h-1zM67 59h2v1h-2zM71 59h1v1h-1zM82 59h1v1h-1zM86 59h1v1h-1zM94 59h1v1h-1zM5 60h1v1h-1zM10 60h2v1h-2zM25 60h1v1h-1zM59 60h1v1h-1zM73 60h2v1h-2zM80 60h1v1h-1zM0 61h1v1h-1zM4 61h1v1h-1zM9 61h1v1h-1zM14 61h1v1h-1zM17 61h1v1h-1zM50 61h1v1h-1zM80 61h1v1h-1zM88 61h1v1h-1zM92 61h2v1h-2zM96 61h1v1h-1zM7 62h1v1h-1zM32 62h1v1h-1zM37 62h1v1h-1zM46 62h1v1h-1zM89 62h1v1h-1zM95 62h1v1h-1zM4 63h2v1h-2zM8 63h1v1h-1zM13 63h1v1h-1zM17 63h1v1h-1zM48 63h1v1h-1zM64 63h1v1h-1zM71 63h1v1h-1zM78 63h1v1h-1zM82 63h1v1h-1zM85 63h1v1h-1zM93 63h1v1h-1zM0 64h1v1h-1zM18 64h1v1h-1zM21 64h1v1h-1zM27 64h1v1h-1zM34 64h1v1h-1zM39 64h1v1h-1zM55 64h1v1h-1zM61 64h1v1h-1zM64 64h1v1h-1zM85 64h1v1h-1zM3 65h1v1h-1zM10 65h1v1h-1zM13 65h1v1h-1zM16 65h2v1h-2zM29 65h1v1h-1zM51 65h1v1h-1zM54 65h1v1h-1zM61 65h1v1h-1zM63 65h1v1h-1zM65 65h1v1h-1zM75 65h1v1h-1zM77 65h2v1h-2zM14 66h1v1h-1zM18 66h1v1h-1zM42 66h1v1h-1zM44 66h1v1h-1zM64 66h1v1h-1zM77 66h1v1h-1zM2 67h1v1h-1zM9 67h1v1h-1zM11 67h1v1h-1zM35 67h1v1h-1zM58 67h1v1h-1zM62 67h1v1h-1zM9 68h1v1h-1zM28 68h1v1h-1zM31 68h2v1h-2zM34 68h1v1h-1zM44 68h2v1h-2zM64 68h1v1h-1zM73 68h1v1h-1zM76 68h1v1h-1zM1 69h2v1h-2zM8 69h1v1h-1zM68 69h1v1h-1zM73 69h1v1h-1zM76 69h1v1h-1zM78 69h1v1h-1zM82 69h1v1h-1zM85 69h1v1h-1zM3 70h1v1h-1zM20 70h1v1h-1zM39 70h1v1h-1zM44 70h1v1h-1zM53 70h1v1h-1zM59 70h1v1h-1zM70 70h2v1h-2zM6 71h1v1h-1zM18 71h1v1h-1zM31 71h1v1h-1zM46 71h1v1h-1zM63 71h1v1h-1zM78 71h1v1h-1zM81 71h1v1h-1zM86 71h1v1h-1zM1 72h1v1h-1zM9 72h1v1h-1zM15 72h1v1h-1zM18 72h1v1h-1zM30 72h1v1h-1zM40 72h1v1h-1zM43 72h1v1h-1zM49 72h1v1h-1zM53 72h1v1h-1zM68 72h1v1h-1zM72 72h1v1h-1zM89 72h1v1h-1zM94 72h1v1h-1zM29 73h1v1h-1zM65 73h1v1h-1zM72 73h1v1h-1zM91 73h1v1h-1zM3 74h2v1h-2zM11 74h1v1h-1zM18 74h1v1h-1zM24 74h1v1h-1zM28 74h1v1h-1zM63 74h1v1h-1zM78 74h3v1h-3zM82 74h2v1h-2zM88 74h1v1h-1zM99 74h1v1h-1zM0 75h1v1h-1zM13 75h2v1h-2zM21 75h1v1h-1zM50 75h1v1h-1zM55 75h1v1h-1zM73 75h2v1h-2zM94 75h1v1h-1zM96 75h1v1h-1zM9 76h3v1h-3zM14 76h1v1h-1zM26 76h1v1h-1zM30 76h1v1h-1zM34 76h2v1h-2zM46 76h1v1h-1zM55 76h1v1h-1zM63 76h1v1h-1zM70 76h1v1h-1zM77 76h1v1h-1zM94 76h1v1h-1zM97 76h1v1h-1zM2 77h1v1h-1zM14 77h1v1h-1zM30 77h1v1h-1zM47 77h1v1h-1zM50 77h1v1h-1zM88 77h1v1h-1zM93 77h1v1h-1zM15 78h1v1h-1zM20 78h1v1h-1zM32 78h1v1h-1zM60 78h1v1h-1zM62 78h1v1h-1zM76 78h1v1h-1zM95 78h1v1h-1zM4 79h1v1h-1zM42 79h1v1h-1zM52 79h1v1h-1zM94 79h1v1h-1zM9 80h1v1h-1zM12 80h1v1h-1zM15 80h3v1h-3zM26 80h1v1h-1zM41 80h1v1h-1zM65 80h1v1h-1zM5 81h1v1h-1zM9 81h1v1h-1zM41 81h1v1h-1zM45 81h1v1h-1zM51 81h2v1h-2zM59 81h1v1h-1zM62 81h1v1h-1zM65 81h1v1h-1zM69 81h1v1h-1zM74 81h2v1h-2zM84 81h1v1h-1zM11 82h1v1h-1zM13 82h1v1h-1zM31 82h1v1h-1zM44 82h2v1h-2zM47 82h1v1h-1zM77 82h1v1h-1zM4 83h1v1h-1zM10 83h1v1h-1zM37 83h1v1h-1zM40 83h1v1h-1zM49 83h1v1h-1zM73 83h1v1h-1zM0 84h1v1h-1zM6 84h1v1h-1zM15 84h1v1h-1zM24 84h1v1h-1zM36 84h1v1h-1zM38 84h1v1h-1zM64 84h1v1h-1zM78 84h1v1h-1zM91 84h1v1h-1zM14 85h1v1h-1zM25 85h1v1h-1zM34 85h1v1h-1zM39 85h1v1h-1zM47 85h1v1h-1zM49 85h1v1h-1zM56 85h1v1h-1zM58 85h1v1h-1zM62 85h1v1h-1zM14 86h2v1h-2zM34 86h1v1h-1zM46 86h1v1h-1zM72 86h1v1h-1zM76 86h1v1h-1zM98 86h1v1h-1zM10 87h1v1h-1zM16 87h1v1h-1zM29 87h1v1h-1zM50 87h1v1h-1zM60 87h1v1h-1zM68 87h1v1h-1zM79 87h1v1h-1zM2 88h1v1h-1zM19 88h2v1h-2zM38 88h1v1h-1zM54 88h1v1h-1zM64 88h1v1h-1zM83 88h1v1h-1zM85 88h1v1h-1zM93 88h1v1h-1zM95 88h1v1h-1zM97 88h1v1h-1zM6 89h2v1h-2zM10 89h1v1h-1zM19 89h1v1h-1zM29 89h1v1h-1zM32 89h1v1h-1zM39 89h1v1h-1zM46 89h1v1h-1zM61 89h1v1h-1zM72 89h1v1h-1zM90 89h1v1h-1zM92 89h1v1h-1zM97 89h1v1h-1zM3 90h1v1h-1zM15 90h1v1h-1zM22 90h1v1h-1zM71 90h1v1h-1zM86 90h1v1h-1zM88 90h1v1h-1zM95 90h1v1h-1zM99 90h1v1h-1zM7 91h1v1h-1zM12 91h1v1h-1zM32 91h1v1h-1zM59 91h1v1h-1zM61 91h1v1h-1zM72 91h1v1h-1zM36 92h2v1h-2zM61 92h1v1h-1zM63 92h1v1h-1zM77 92h1v1h-1zM91 92h1v1h-1zM98 92h1v1h-1zM18 93h1v1h-1zM33 93h1v1h-1zM36 93h1v1h-1zM44 93h1v1h-1zM63 93h1v1h-1zM68 93h1v1h-1zM78 93h1v1h-1zM82 93h1v1h-1zM88 93h1v1h-1zM92 93h1v1h-1zM99 93h1v1h-1zM3 94h1v1h-1zM10 94h1v1h-1zM26 94h1v1h-1zM30 94h1v1h-1zM46 94h3v1h-3zM50 94h1v1h-1zM74 94h2v1h-2zM78 94h1v1h-1zM83 94h2v1h-2zM87 94h1v1h-1zM7 95h1v1h-1zM14 95h1v1h-1zM18 95h1v1h-1zM45 95h1v1h-1zM83 95h1v1h-1zM91 95h1v1h-1zM97 95h1v1h-1zM0 96h1v1h-1zM10 96h1v1h-1zM27 96h1v1h-1zM43 96h1v1h-1zM63 96h1v1h-1zM68 96h1v1h-1zM78 96h1v1h-1zM91 96h1v1h-1zM96 96h1v1h-1zM4 97h1v1h-1zM13 97h1v1h-1zM29 97h1v1h-1zM33 97h1v1h-1zM61 97h1v1h-1zM63 97h1v1h-1zM68 97h1v1h-1zM73 97h1v1h-1zM99 97h1v1h-1zM5 98h1v1h-1zM28 98h1v1h-1zM40 98h1v1h-1zM58 98h2v1h-2zM69 98h2v1h-2zM89 98h1v1h-1zM2 99h1v1h-1zM10 99h1v1h-1zM13 99h2v1h-2zM28 99h1v1h-1zM48 99h1v1h-1zM87 99h1v1h-1zM98 99h2v1h-2z"/>
<path fill="rgb(147,147,147)" d="M5 0h1v1h-1zM9 0h1v1h-1zM13 0h1v1h-1zM16 0h1v1h-1zM30 0h1v1h-1zM36 0h1v1h-1zM40 0h1v1h-1zM44 0h1v1h-1zM51 0h1v1h-1zM79 0h1v1h-1zM91 0h1v1h-1zM8 1h1v1h-1zM34 1h2v1h-2zM43 1h1v1h-1zM52 1h1v1h-1zM58 1h1v1h-1zM62 1h1v1h-1zM69 1h2v1h-2zM79 1h1v1h-1zM94 1h1v1h-1zM14 2h1v1h-1zM29 2h1v1h-1zM72 2h2v1h-2zM84 2h1v1h-1zM97 2h1v1h-1zM2 3h1v1h-1zM4 3h1v1h-1zM7 3h1v1h-1zM19 3h1v1h-1zM27 3h1v1h-1zM33 3h1v1h-1zM38 3h1v1h-1zM52 3h1v1h-1zM56 3h2v1h-2zM61 3h1v1h-1zM75 3h1v1h-1zM81 3h1v1h-1zM15 4h1v1h-1zM18 4h1v1h-1zM24 4h1v1h-1zM35 4h2v1h-2zM46 4h1v1h-1zM62 4h1v1h-1zM69 4h2v1h-2zM72 4h1v1h-1zM80 4h1v1h-1zM95 4h1v1h-1zM5 5h1v1h-1zM30 5h1v1h-1zM46 5h1v1h-1zM55 5h2v1h-2zM74 5h1v1h-1zM94 5h1v1h-1zM98 5h1v1h-1zM10 6h1v1h-1zM18 6h1v1h-1zM32 6h1v1h-1zM37 6h1v1h-1zM46 6h1v1h-1zM48 6h1v1h-1zM68 6h2v1h-2zM71 6h2v1h-2zM3 7h1v1h-1zM6 7h3v1h-3zM10 7h1v1h-1zM32 7h1v1h-1zM34 7h1v1h-1zM48 7h1v1h-1zM98 7h1v1h-1zM10 8h1v1h-1zM24 8h1v1h-1zM43 8h1v1h-1zM52 8h1v1h-1zM62 8h1v1h-1zM68 8h1v1h-1zM70 8h1v1h-1zM77 8h1v1h-1zM95 8h1v1h-1zM10 9h2v1h-2zM49 9h2v1h-2zM52 9h1v1h-1zM97 9h2v1h-2zM5 10h1v1h-1zM17 10h1v1h-1zM31 10h2v1h-2zM34 10h1v1h-1zM37 10h1v1h-1zM39 10h1v1h-1zM44 10h1v1h-1zM63 10h1v1h-1zM74 10h1v1h-1zM81 10h1v1h-1zM87 10h2v1h-2zM93 10h1v1h-1zM14 11h1v1h-1zM20 11h1v1h-1zM22 11h1v1h-1zM70 11h1v1h-1zM73 11h1v1h-1zM85 11h2v1h-2zM99 11h1v1h-1zM0 12h1v1h-1zM2 12h1v1h-1zM23 12h1v1h-1zM28 12h1v1h-1zM48 12h1v1h-1zM72 12h2v1h-2zM78 12h1v1h-1zM97 12h1v1h-1zM1 13h1v1h-1zM4 13h1v1h-1zM32 13h1v1h-1zM35 13h1v1h-1zM40 13h1v1h-1zM43 13h1v1h-1zM47 13h1v1h-1zM57 13h1v1h-1zM69 13h1v1h-1zM76 13h2v1h-2zM1 14h1v1h-1zM7 14h1v1h-1zM12 14h2v1h-2zM17 14h2v1h-2zM35 14h2v1h-2zM51 14h1v1h-1zM70 14h1v1h-1zM95 14h1v1h-1zM12 15h1v1h-1zM30 15h1v1h-1zM32 15h1v1h-1zM70 15h1v1h-1zM93 15h1v1h-1zM7 16h1v1h-1zM11 16h1v1h-1zM29 16h1v1h-1zM34 16h1v1h-1zM42 16h1v1h-1zM69 16h1v1h-1zM82 16h1v1h-1zM8 17h1v1h-1zM12 17h1v1h-1zM16 17h1v1h-1zM32 17h1v1h-1zM38 17h1v1h-1zM40 17h1v1h-1zM46 17h1v1h-1zM57 17h1v1h-1zM62 17h2v1h-2zM78 17h1v1h-1zM92 17h1v1h-1zM95 17h1v1h-1zM5 18h1v1h-1zM8 18h1v1h-1zM26 18h1v1h-1zM31 18h1v1h-1zM36 18h1v1h-1zM60 18h1v1h-1zM63 18h1v1h-1zM82 18h1v1h-1zM92 18h1v1h-1zM99 18h1v1h-1zM10 19h1v1h-1zM45 19h1v1h-1zM52 19h1v1h-1zM68 19h1v1h-1zM81 19h1v1h-1zM2 20h1v1h-1zM9 20h1v1h-1zM25 20h1v1h-1zM59 20h1v1h-1zM61 20h1v1h-1zM76 20h1v1h-1zM84 20h1v1h-1zM1 21h1v1h-1zM19 21h1v1h-1zM31 21h1v1h-1zM34 21h1v1h-1zM38 21h1v1h-1zM45 21h1v1h-1zM48 21h1v1h-1zM51 21h1v1h-1zM73 21h2v1h-2zM80 21h1v1h-1zM93 21h2v1h-2zM97 21h1v1h-1zM19 22h1v1h-1zM31 22h1v1h-1zM39 22h1v1h-1zM44 22h1v1h-1zM47 22h1v1h-1zM67 22h1v1h-1zM79 22h1v1h-1zM91 22h1v1h-1zM96 22h1v1h-1zM32 23h1v1h-1zM34 23h1v1h-1zM64 23h1v1h-1zM95 23h1v1h-1zM97 23h1v1h-1zM2 24h1v1h-1zM15 24h1v1h-1zM42 24h1v1h-1zM44 24h1v1h-1zM61 24h1v1h-1zM71 24h1v1h-1zM10 25h1v1h-1zM32 25h1v1h-1zM63 25h2v1h-2zM67 25h1v1h-1zM69 25h1v1h-1zM74 25h2v1h-2zM80 25h1v1h-1zM94 25h1v1h-1zM10 26h1v1h-1zM12 26h1v1h-1zM14 26h1v1h-1zM34 26h1v1h-1zM36 26h1v1h-1zM59 26h1v1h-1zM75 26h1v1h-1zM91 26h1v1h-1zM99 26h1v1h-1zM1 27h1v1h-1zM16 27h1v1h-1zM39 27h1v1h-1zM42 27h1v1h-1zM47 27h2v1h-2zM65 27h1v1h-1zM83 27h1v1h-1zM38 28h1v1h-1zM44 28h1v1h-1zM48 28h1v1h-1zM74 28h1v1h-1zM11 29h1v1h-1zM17 29h1v1h-1zM19 29h1v1h-1zM21 29h1v1h-1zM25 29h1v1h-1zM41 29h1v1h-1zM74 29h2v1h-2zM97 29h1v1h-1zM5 30h1v1h-1zM7 30h1v1h-1zM17 30h1v1h-1zM31 30h1v1h-1zM35 30h1v1h-1zM46 30h2v1h-2zM68 30h1v1h-1zM73 30h1v1h-1zM82 30h1v1h-1zM95 30h1v1h-1zM12 31h1v1h-1zM15 31h1v1h-1zM45 31h1v1h-1zM47 31h1v1h-1zM49 31h1v1h-1zM64 31h3v1h-3zM69 31h1v1h-1zM74 31h1v1h-1zM3 32h1v1h-1zM34 32h1v1h-1zM40 32h2v1h-2zM72 32h1v1h-1zM75 32h1v1h-1zM11 33h1v1h-1zM24 33h1v1h-1zM33 33h1v1h-1zM42 33h2v1h-2zM63 33h1v1h-1zM82 33h1v1h-1zM91 33h1v1h-1zM97 33h1v1h-1zM4 34h1v1h-1zM8 34h1v1h-1zM15 34h1v1h-1zM60 34h1v1h-1zM68 34h2v1h-2zM78 34h1v1h-1zM5 35h1v1h-1zM11 35h1v1h-1zM41 35h1v1h-1zM43 35h1v1h-1zM67 35h1v1h-1zM69 35h1v1h-1zM77 35h2v1h-2zM80 35h1v1h-1zM99 35h1v1h-1zM1 36h1v1h-1zM12 36h2v1h-2zM18 36h1v1h-1zM28 36h1v1h-1zM36 36h2v1h-2zM45 36h1v1h-1zM7 37h1v1h-1zM65 37h1v1h-1zM92 37h1v1h-1zM2 38h1v1h-1zM21 38h1v1h-1zM24 38h1v1h-1zM26 38h1v1h-1zM43 38h1v1h-1zM62 38h1v1h-1zM66 38h1v1h-1zM82 38h1v1h-1zM98 38h1v1h-1zM13 39h1v1h-1zM26 39h1v1h-1zM31 39h1v1h-1zM37 39h2v1h-2zM44 39h1v1h-1zM47 39h1v1h-1zM59 39h1v1h-1zM70 39h1v1h-1zM1 40h1v1h-1zM6 40h1v1h-1zM14 40h1v1h-1zM16 40h1v1h-1zM41 40h1v1h-1zM48 40h1v1h-1zM0 41h1v1h-1zM3 41h1v1h-1zM18 41h1v1h-1zM27 41h1v1h-1zM54 41h1v1h-1zM63 41h1v1h-1zM72 41h1v1h-1zM76 41h1v1h-1zM82 41h1v1h-1zM95 41h1v1h-1zM8 42h1v1h-1zM21 42h1v1h-1zM26 42h1v1h-1zM35 42h1v1h-1zM43 42h1v1h-1zM46 42h1v1h-1zM61 42h1v1h-1zM85 42h1v1h-1zM1 43h1v1h-1zM40 43h1v1h-1zM63 43h1v1h-1zM65 43h1v1h-1zM68 43h1v1h-1zM93 43h1v1h-1zM96 43h1v1h-1zM7 44h1v1h-1zM14 44h1v1h-1zM18 44h1v1h-1zM23 44h1v1h-1zM33 44h2v1h-2zM36 44h2v1h-2zM58 44h1v1h-1zM60 44h1v1h-1zM65 44h1v1h-1zM68 44h1v1h-1zM86 44h1v1h-1zM89 44h1v1h-1zM99 44h1v1h-1zM16 45h1v1h-1zM33 45h1v1h-1zM40 45h1v1h-1zM44 45h1v1h-1zM62 45h1v1h-1zM69 45h1v1h-1zM80 45h1v1h-1zM96 45h1v1h-1zM15 46h1v1h-1zM33 46h1v1h-1zM43 46h1v1h-1zM49 46h1v1h-1zM59 46h1v1h-1zM72 46h1v1h-1zM76 46h1v1h-1zM82 46h1v1h-1zM95 46h1v1h-1zM0 47h1v1h-1zM3 47h1v1h-1zM5 47h1v1h-1zM11 47h1v1h-1zM13 47h1v1h-1zM34 47h1v1h-1zM38 47h1v1h-1zM45 47h1v1h-1zM63 47h2v1h-2zM7 48h1v1h-1zM10 48h1v1h-1zM15 48h1v1h-1zM28 48h1v1h-1zM35 48h2v1h-2zM58 48h1v1h-1zM63 48h1v1h-1zM68 48h2v1h-2zM76 48h1v1h-1zM81 48h1v1h-1zM4 49h1v1h-1zM8 49h1v1h-1zM36 49h1v1h-1zM56 49h1v1h-1zM65 49h1v1h-1zM72 49h1v1h-1zM76 49h1v1h-1zM78 49h1v1h-1zM81 49h1v1h-1zM83 49h1v1h-1zM96 49h1v1h-1zM9 50h1v1h-1zM12 50h3v1h-3zM30 50h1v1h-1zM35 50h1v1h-1zM48 50h1v1h-1zM51 50h1v1h-1zM65 50h1v1h-1zM9 51h1v1h-1zM20 51h1v1h-1zM35 51h1v1h-1zM45 51h1v1h-1zM47 51h1v1h-1zM50 51h1v1h-1zM76 51h1v1h-1zM4 52h1v1h-1zM9 52h1v1h-1zM15 52h1v1h-1zM33 52h1v1h-1zM35 52h1v1h-1zM43 52h1v1h-1zM58 52h1v1h-1zM96 52h1v1h-1zM99 52h1v1h-1zM15 53h1v1h-1zM18 53h1v1h-1zM34 53h1v1h-1zM61 53h1v1h-1zM72 53h1v1h-1zM74 53h1v1h-1zM97 53h1v1h-1zM9 54h1v1h-1zM20 54h1v1h-1zM28 54h1v1h-1zM34 54h1v1h-1zM61 54h1v1h-1zM66 54h1v1h-1zM68 54h2v1h-2zM76 54h1v1h-1zM6 55h1v1h-1zM11 55h1v1h-1zM65 55h1v1h-1zM75 55h1v1h-1zM4 56h1v1h-1zM7 56h1v1h-1zM19 56h1v1h-1zM21 56h1v1h-1zM34 56h1v1h-1zM47 56h1v1h-1zM81 56h1v1h-1zM93 56h2v1h-2zM10 57h1v1h-1zM16 57h1v1h-1zM33 57h1v1h-1zM35 57h1v1h-1zM41 57h1v1h-1zM49 57h1v1h-1zM51 57h1v1h-1zM61 57h1v1h-1zM95 57h1v1h-1zM99 57h1v1h-1zM2 58h1v1h-1zM6 58h1v1h-1zM22 58h1v1h-1zM66 58h3v1h-3zM92 58h1v1h-1zM7 59h2v1h-2zM10 59h1v1h-1zM12 59h1v1h-1zM14 59h1v1h-1zM44 59h1v1h-1zM72 59h1v1h-1zM98 59h2v1h-2zM7 60h1v1h-1zM13 60h2v1h-2zM16 60h1v1h-1zM32 60h1v1h-1zM35 60h1v1h-1zM38 60h1v1h-1zM41 60h1v1h-1zM51 60h1v1h-1zM55 60h1v1h-1zM68 60h1v1h-1zM72 60h1v1h-1zM78 60h1v1h-1zM91 60h1v1h-1zM95 60h1v1h-1zM34 61h1v1h-1zM47 61h1v1h-1zM64 61h2v1h-2zM67 61h1v1h-1zM70 61h1v1h-1zM73 61h1v1h-1zM79 61h1v1h-1zM98 61h1v1h-1zM11 62h1v1h-1zM18 62h1v1h-1zM43 62h1v1h-1zM45 62h1v1h-1zM53 62h1v1h-1zM58 62h1v1h-1zM68 62h1v1h-1zM92 62h1v1h-1zM0 63h3v1h-3zM9 63h1v1h-1zM28 63h1v1h-1zM32 63h2v1h-2zM35 63h1v1h-1zM37 63h3v1h-3zM45 63h1v1h-1zM50 63h1v1h-1zM61 63h2v1h-2zM75 63h1v1h-1zM87 63h1v1h-1zM16 64h1v1h-1zM38 64h1v1h-1zM43 64h1v1h-1zM46 64h2v1h-2zM62 64h1v1h-1zM67 64h1v1h-1zM72 64h1v1h-1zM77 64h1v1h-1zM79 64h1v1h-1zM1 65h2v1h-2zM12 65h1v1h-1zM14 65h1v1h-1zM32 65h1v1h-1zM41 65h1v1h-1zM48 65h1v1h-1zM64 65h1v1h-1zM74 65h1v1h-1zM95 65h1v1h-1zM5 66h1v1h-1zM12 66h1v1h-1zM30 66h1v1h-1zM32 66h1v1h-1zM40 66h1v1h-1zM47 66h1v1h-1zM83 66h1v1h-1zM7 67h1v1h-1zM25 67h2v1h-2zM43 67h1v1h-1zM45 67h1v1h-1zM65 67h1v1h-1zM71 67h2v1h-2zM77 67h1v1h-1zM81 67h1v1h-1zM86 67h1v1h-1zM97 67h1v1h-1zM15 68h1v1h-1zM46 68h1v1h-1zM62 68h2v1h-2zM65 68h1v1h-1zM70 68h1v1h-1zM77 68h1v1h-1zM90 68h1v1h-1zM93 68h1v1h-1zM99 68h1v1h-1zM6 69h1v1h-1zM13 69h1v1h-1zM19 69h1v1h-1zM21 69h1v1h-1zM26 69h1v1h-1zM34 69h1v1h-1zM43 69h1v1h-1zM47 69h1v1h-1zM49 69h1v1h-1zM62 69h1v1h-1zM64 69h1v1h-1zM72 69h1v1h-1zM75 69h1v1h-1zM80 69h1v1h-1zM7 70h1v1h-1zM9 70h1v1h-1zM23 70h1v1h-1zM32 70h1v1h-1zM75 70h1v1h-1zM81 70h2v1h-2zM84 70h1v1h-1zM3 71h1v1h-1zM8 71h1v1h-1zM14 71h1v1h-1zM27 71h1v1h-1zM34 71h1v1h-1zM41 71h1v1h-1zM59 71h1v1h-1zM66 71h1v1h-1zM75 71h1v1h-1zM93 71h1v1h-1zM6 72h1v1h-1zM8 72h1v1h-1zM13 72h1v1h-1zM33 72h1v1h-1zM39 72h1v1h-1zM41 72h2v1h-2zM58 72h1v1h-1zM65 72h1v1h-1zM70 72h1v1h-1zM78 72h1v1h-1zM82 72h1v1h-1zM95 72h1v1h-1zM8 73h1v1h-1zM12 73h2v1h-2zM40 73h1v1h-1zM48 73h1v1h-1zM62 73h1v1h-1zM70 73h1v1h-1zM76 73h1v1h-1zM78 73h1v1h-1zM84 73h1v1h-1zM7 74h1v1h-1zM16 74h1v1h-1zM22 74h1v1h-1zM32 74h1v1h-1zM39 74h1v1h-1zM46 74h1v1h-1zM50 74h3v1h-3zM72 74h1v1h-1zM24 75h1v1h-1zM67 75h1v1h-1zM77 75h1v1h-1zM80 75h1v1h-1zM2 76h1v1h-1zM15 76h1v1h-1zM43 76h2v1h-2zM60 76h1v1h-1zM64 76h1v1h-1zM69 76h1v1h-1zM72 76h1v1h-1zM78 76h2v1h-2zM91 76h1v1h-1zM99 76h1v1h-1zM48 77h1v1h-1zM64 77h1v1h-1zM68 77h1v1h-1zM99 77h1v1h-1zM2 78h1v1h-1zM8 78h1v1h-1zM16 78h1v1h-1zM18 78h2v1h-2zM25 78h1v1h-1zM30 78h1v1h-1zM54 78h1v1h-1zM65 78h1v1h-1zM68 78h1v1h-1zM74 78h1v1h-1zM98 78h1v1h-1zM1 79h1v1h-1zM11 79h1v1h-1zM16 79h1v1h-1zM25 79h1v1h-1zM34 79h1v1h-1zM37 79h1v1h-1zM41 79h1v1h-1zM45 79h1v1h-1zM47 79h1v1h-1zM77 79h3v1h-3zM93 79h1v1h-1zM1 80h1v1h-1zM6 80h2v1h-2zM13 80h1v1h-1zM31 80h1v1h-1zM61 80h1v1h-1zM76 80h1v1h-1zM98 80h2v1h-2zM3 81h2v1h-2zM23 81h1v1h-1zM31 81h1v1h-1zM60 81h1v1h-1zM95 81h1v1h-1zM1 82h1v1h-1zM12 82h1v1h-1zM29 82h1v1h-1zM40 82h1v1h-1zM70 82h2v1h-2zM94 82h2v1h-2zM1 83h2v1h-2zM12 83h1v1h-1zM17 83h1v1h-1zM19 83h1v1h-1zM79 83h1v1h-1zM86 83h1v1h-1zM92 83h1v1h-1zM98 83h1v1h-1zM3 84h1v1h-1zM9 84h1v1h-1zM16 84h1v1h-1zM27 84h1v1h-1zM40 84h1v1h-1zM42 84h1v1h-1zM48 84h1v1h-1zM72 84h1v1h-1zM79 84h1v1h-1zM93 84h1v1h-1zM0 85h2v1h-2zM45 85h1v1h-1zM76 85h1v1h-1zM93 85h1v1h-1zM99 85h1v1h-1zM3 86h1v1h-1zM5 86h1v1h-1zM10 86h1v1h-1zM26 86h1v1h-1zM37 86h1v1h-1zM69 86h1v1h-1zM3 87h1v1h-1zM7 87h1v1h-1zM30 87h1v1h-1zM34 87h1v1h-1zM43 87h1v1h-1zM63 87h1v1h-1zM71 87h1v1h-1zM74 87h1v1h-1zM14 88h1v1h-1zM17 88h1v1h-1zM33 88h1v1h-1zM65 88h1v1h-1zM72 88h1v1h-1zM79 88h1v1h-1zM3 89h1v1h-1zM40 89h1v1h-1zM42 89h1v1h-1zM71 89h1v1h-1zM93 89h1v1h-1zM12 90h1v1h-1zM38 90h1v1h-1zM56 90h1v1h-1zM62 90h1v1h-1zM65 90h1v1h-1zM70 90h1v1h-1zM77 90h1v1h-1zM87 90h1v1h-1zM6 91h1v1h-1zM14 91h1v1h-1zM17 91h2v1h-2zM35 91h1v1h-1zM41 91h1v1h-1zM44 91h1v1h-1zM48 91h1v1h-1zM52 91h1v1h-1zM63 91h2v1h-2zM71 91h1v1h-1zM73 91h1v1h-1zM75 91h1v1h-1zM78 91h1v1h-1zM85 91h1v1h-1zM93 91h1v1h-1zM1 92h1v1h-1zM6 92h1v1h-1zM10 92h1v1h-1zM27 92h1v1h-1zM55 92h1v1h-1zM78 92h1v1h-1zM82 92h1v1h-1zM97 92h1v1h-1zM12 93h1v1h-1zM46 93h1v1h-1zM48 93h1v1h-1zM51 93h1v1h-1zM54 93h1v1h-1zM76 93h1v1h-1zM79 93h1v1h-1zM96 93h1v1h-1zM25 94h1v1h-1zM34 94h1v1h-1zM40 94h1v1h-1zM60 94h1v1h-1zM88 94h1v1h-1zM91 94h1v1h-1zM93 94h1v1h-1zM99 94h1v1h-1zM9 95h1v1h-1zM39 95h2v1h-2zM47 95h1v1h-1zM66 95h1v1h-1zM72 95h1v1h-1zM78 95h1v1h-1zM81 95h1v1h-1zM92 95h1v1h-1zM5 96h1v1h-1zM61 96h1v1h-1zM66 96h1v1h-1zM79 96h2v1h-2zM8 97h1v1h-1zM11 97h1v1h-1zM37 97h2v1h-2zM60 97h1v1h-1zM65 97h1v1h-1zM97 97h1v1h-1zM1 98h1v1h-1zM9 98h1v1h-1zM15 98h1v1h-1zM33 98h1v1h-1zM42 98h1v1h-1zM55 98h1v1h-1zM64 98h1v1h-1zM75 98h1v1h-1zM79 98h1v1h-1zM83 98h1v1h-1zM92 98h1v1h-1zM16 99h1v1h-1zM46 99h1v1h-1zM59 99h1v1h-1zM68 99h1v1h-1zM75 99h1v1h-1zM80 99h2v1h-2zM88 99h1v1h-1z"/>
<path fill="rgb(155,155,155)" d="M2 0h1v1h-1zM4 0h1v1h-1zM18 0h1v1h-1zM34 0h1v1h-1zM45 0h1v1h-1zM59 0h1v1h-1zM69 0h2v1h-2zM77 0h1v1h-1zM6 1h1v1h-1zM30 1h1v1h-1zM38 1h1v1h-1zM42 1h1v1h-1zM47 1h1v1h-1zM53 1h1v1h-1zM72 1h2v1h-2zM2 2h1v1h-1zM4 2h2v1h-2zM12 2h1v1h-1zM16 2h1v1h-1zM36 2h1v1h-1zM44 2h1v1h-1zM68 2h1v1h-1zM71 2h1v1h-1zM94 2h1v1h-1zM98 2h2v1h-2zM5 3h1v1h-1zM10 3h1v1h-1zM69 3h1v1h-1zM79 3h1v1h-1zM91 3h2v1h-2zM5 4h1v1h-1zM7 4h1v1h-1zM31 4h1v1h-1zM43 4h1v1h-1zM73 4h1v1h-1zM43 5h1v1h-1zM51 5h1v1h-1zM72 5h1v1h-1zM76 5h1v1h-1zM79 5h1v1h-1zM8 6h1v1h-1zM15 6h1v1h-1zM20 6h1v1h-1zM29 6h1v1h-1zM45 6h1v1h-1zM60 6h1v1h-1zM63 6h1v1h-1zM76 6h1v1h-1zM84 6h1v1h-1zM4 7h2v1h-2zM12 7h1v1h-1zM33 7h1v1h-1zM39 7h1v1h-1zM46 7h1v1h-1zM60 7h1v1h-1zM71 7h1v1h-1zM94 7h1v1h-1zM13 8h2v1h-2zM18 8h1v1h-1zM34 8h1v1h-1zM41 8h2v1h-2zM44 8h1v1h-1zM72 8h2v1h-2zM76 8h1v1h-1zM91 8h1v1h-1zM97 8h1v1h-1zM18 9h1v1h-1zM29 9h1v1h-1zM32 9h2v1h-2zM42 9h1v1h-1zM76 9h1v1h-1zM80 9h1v1h-1zM95 9h2v1h-2zM99 9h1v1h-1zM9 10h1v1h-1zM36 10h1v1h-1zM42 10h1v1h-1zM48 10h1v1h-1zM60 10h1v1h-1zM65 10h1v1h-1zM99 10h1v1h-1zM2 11h1v1h-1zM26 11h1v1h-1zM28 11h1v1h-1zM35 11h2v1h-2zM38 11h1v1h-1zM42 11h1v1h-1zM44 11h1v1h-1zM68 11h1v1h-1zM75 11h1v1h-1zM29 12h1v1h-1zM35 12h1v1h-1zM37 12h1v1h-1zM41 12h1v1h-1zM66 12h1v1h-1zM77 12h1v1h-1zM3 13h1v1h-1zM8 13h1v1h-1zM14 13h2v1h-2zM34 13h1v1h-1zM36 13h1v1h-1zM61 13h1v1h-1zM67 13h1v1h-1zM78 13h1v1h-1zM95 13h1v1h-1zM97 13h1v1h-1zM3 14h1v1h-1zM8 14h1v1h-1zM37 14h1v1h-1zM42 14h1v1h-1zM73 14h1v1h-1zM75 14h1v1h-1zM79 14h1v1h-1zM81 14h1v1h-1zM9 15h1v1h-1zM23 15h1v1h-1zM76 15h1v1h-1zM94 15h2v1h-2zM2 16h1v1h-1zM31 16h2v1h-2zM37 16h1v1h-1zM40 16h1v1h-1zM43 16h1v1h-1zM66 16h1v1h-1zM76 16h1v1h-1zM96 16h1v1h-1zM13 17h2v1h-2zM29 17h2v1h-2zM43 17h1v1h-1zM48 17h1v1h-1zM70 17h1v1h-1zM76 17h1v1h-1zM2 18h1v1h-1zM13 18h1v1h-1zM35 18h1v1h-1zM42 18h1v1h-1zM61 18h1v1h-1zM66 18h1v1h-1zM93 18h1v1h-1zM3 19h1v1h-1zM6 19h2v1h-2zM39 19h1v1h-1zM54 19h1v1h-1zM72 19h1v1h-1zM77 19h1v1h-1zM96 19h1v1h-1zM16 20h2v1h-2zM35 20h1v1h-1zM38 20h2v1h-2zM43 20h1v1h-1zM49 20h2v1h-2zM69 20h1v1h-1zM95 20h1v1h-1zM6 21h1v1h-1zM8 21h3v1h-3zM18 21h1v1h-1zM33 21h1v1h-1zM65 21h1v1h-1zM68 21h1v1h-1zM71 21h1v1h-1zM76 21h1v1h-1zM15 22h1v1h-1zM17 22h1v1h-1zM20 22h1v1h-1zM40 22h2v1h-2zM50 22h1v1h-1zM60 22h2v1h-2zM6 23h1v1h-1zM33 23h1v1h-1zM40 23h1v1h-1zM52 23h1v1h-1zM55 23h1v1h-1zM63 23h1v1h-1zM71 23h1v1h-1zM73 23h2v1h-2zM79 23h1v1h-1zM83 23h1v1h-1zM92 23h1v1h-1zM19 24h1v1h-1zM27 24h1v1h-1zM37 24h1v1h-1zM52 24h1v1h-1zM54 24h2v1h-2zM66 24h1v1h-1zM69 24h1v1h-1zM77 24h1v1h-1zM3 25h1v1h-1zM7 25h1v1h-1zM18 25h1v1h-1zM29 25h1v1h-1zM43 25h1v1h-1zM70 25h1v1h-1zM90 25h1v1h-1zM93 25h1v1h-1zM95 25h1v1h-1zM0 26h1v1h-1zM13 26h1v1h-1zM48 26h1v1h-1zM61 26h1v1h-1zM64 26h1v1h-1zM72 26h1v1h-1zM80 26h1v1h-1zM97 26h1v1h-1zM9 27h1v1h-1zM13 27h1v1h-1zM31 27h1v1h-1zM33 27h1v1h-1zM66 27h1v1h-1zM69 27h1v1h-1zM6 28h1v1h-1zM9 28h1v1h-1zM14 28h1v1h-1zM27 28h1v1h-1zM34 28h1v1h-1zM62 28h2v1h-2zM66 28h1v1h-1zM98 28h1v1h-1zM0 29h1v1h-1zM2 29h1v1h-1zM6 29h2v1h-2zM14 29h1v1h-1zM38 29h1v1h-1zM76 29h2v1h-2zM2 30h1v1h-1zM12 30h1v1h-1zM38 30h1v1h-1zM42 30h1v1h-1zM56 30h1v1h-1zM66 30h2v1h-2zM97 30h1v1h-1zM0 31h2v1h-2zM5 31h1v1h-1zM14 31h1v1h-1zM20 31h1v1h-1zM33 31h1v1h-1zM78 31h1v1h-1zM82 31h1v1h-1zM1 32h1v1h-1zM6 32h1v1h-1zM11 32h1v1h-1zM16 32h1v1h-1zM38 32h1v1h-1zM77 32h1v1h-1zM93 32h1v1h-1zM96 32h1v1h-1zM1 33h1v1h-1zM9 33h2v1h-2zM14 33h1v1h-1zM53 33h1v1h-1zM69 33h1v1h-1zM73 33h1v1h-1zM77 33h1v1h-1zM86 33h1v1h-1zM92 33h1v1h-1zM8 35h1v1h-1zM19 35h1v1h-1zM22 35h1v1h-1zM28 35h1v1h-1zM36 35h1v1h-1zM51 35h1v1h-1zM61 35h2v1h-2zM68 35h1v1h-1zM75 35h2v1h-2zM81 35h1v1h-1zM92 35h1v1h-1zM0 36h1v1h-1zM41 36h1v1h-1zM73 36h1v1h-1zM76 36h1v1h-1zM97 36h2v1h-2zM6 37h1v1h-1zM9 37h2v1h-2zM12 37h1v1h-1zM15 37h1v1h-1zM31 37h1v1h-1zM36 37h1v1h-1zM41 37h1v1h-1zM46 37h1v1h-1zM59 37h1v1h-1zM64 37h1v1h-1zM95 37h1v1h-1zM5 38h1v1h-1zM14 38h2v1h-2zM18 38h1v1h-1zM27 38h1v1h-1zM30 38h2v1h-2zM69 38h1v1h-1zM11 39h1v1h-1zM20 39h1v1h-1zM34 39h1v1h-1zM41 39h2v1h-2zM66 39h1v1h-1zM93 39h1v1h-1zM8 40h1v1h-1zM10 40h1v1h-1zM35 40h1v1h-1zM60 40h1v1h-1zM68 40h1v1h-1zM71 40h1v1h-1zM76 40h1v1h-1zM95 40h1v1h-1zM4 41h1v1h-1zM8 41h1v1h-1zM33 41h1v1h-1zM38 41h2v1h-2zM50 41h1v1h-1zM74 41h2v1h-2zM96 41h1v1h-1zM98 41h1v1h-1zM11 42h1v1h-1zM28 42h1v1h-1zM32 42h1v1h-1zM38 42h1v1h-1zM48 42h2v1h-2zM58 42h1v1h-1zM73 42h1v1h-1zM92 42h1v1h-1zM95 42h1v1h-1zM98 42h1v1h-1zM11 43h1v1h-1zM19 43h1v1h-1zM31 43h1v1h-1zM37 43h1v1h-1zM44 43h1v1h-1zM78 43h1v1h-1zM99 43h1v1h-1zM8 44h1v1h-1zM32 44h1v1h-1zM41 44h1v1h-1zM70 44h1v1h-1zM95 44h1v1h-1zM0 45h1v1h-1zM5 45h1v1h-1zM31 45h1v1h-1zM45 45h1v1h-1zM50 45h1v1h-1zM75 45h1v1h-1zM78 45h1v1h-1zM8 46h2v1h-2zM12 46h1v1h-1zM62 46h1v1h-1zM68 46h1v1h-1zM83 46h2v1h-2zM12 47h1v1h-1zM39 47h1v1h-1zM41 47h1v1h-1zM46 47h1v1h-1zM69 47h1v1h-1zM96 47h1v1h-1zM99 47h1v1h-1zM1 48h2v1h-2zM34 48h1v1h-1zM37 48h1v1h-1zM40 48h1v1h-1zM42 48h2v1h-2zM66 48h1v1h-1zM73 48h1v1h-1zM95 48h2v1h-2zM2 49h1v1h-1zM14 49h1v1h-1zM34 49h1v1h-1zM37 49h1v1h-1zM44 49h1v1h-1zM49 49h1v1h-1zM66 49h1v1h-1zM75 49h1v1h-1zM77 49h1v1h-1zM79 49h1v1h-1zM99 49h1v1h-1zM44 50h1v1h-1zM56 50h1v1h-1zM76 50h1v1h-1zM88 50h1v1h-1zM97 50h1v1h-1zM6 51h1v1h-1zM34 51h1v1h-1zM38 51h2v1h-2zM41 51h1v1h-1zM48 51h1v1h-1zM63 51h1v1h-1zM65 51h3v1h-3zM83 51h1v1h-1zM0 52h1v1h-1zM8 52h1v1h-1zM10 52h1v1h-1zM16 52h1v1h-1zM38 52h1v1h-1zM44 52h1v1h-1zM48 52h1v1h-1zM67 52h1v1h-1zM78 52h1v1h-1zM9 53h1v1h-1zM14 53h1v1h-1zM16 53h1v1h-1zM30 53h1v1h-1zM35 53h1v1h-1zM39 53h2v1h-2zM48 53h1v1h-1zM64 53h1v1h-1zM73 53h1v1h-1zM79 53h1v1h-1zM96 53h1v1h-1zM5 54h1v1h-1zM38 54h1v1h-1zM43 54h2v1h-2zM48 54h1v1h-1zM96 54h2v1h-2zM5 55h1v1h-1zM8 55h1v1h-1zM12 55h1v1h-1zM15 55h1v1h-1zM28 55h1v1h-1zM44 55h1v1h-1zM66 55h1v1h-1zM70 55h1v1h-1zM73 55h1v1h-1zM1 56h1v1h-1zM12 56h1v1h-1zM71 56h1v1h-1zM73 56h1v1h-1zM1 57h1v1h-1zM38 57h1v1h-1zM70 57h1v1h-1zM90 57h1v1h-1zM1 58h1v1h-1zM16 58h1v1h-1zM20 58h1v1h-1zM32 58h1v1h-1zM39 58h1v1h-1zM56 58h1v1h-1zM62 58h1v1h-1zM98 58h1v1h-1zM6 59h1v1h-1zM35 59h1v1h-1zM41 59h1v1h-1zM66 59h1v1h-1zM80 59h1v1h-1zM97 59h1v1h-1zM12 60h1v1h-1zM29 60h1v1h-1zM34 60h1v1h-1zM79 60h1v1h-1zM93 60h1v1h-1zM40 61h1v1h-1zM52 61h1v1h-1zM59 61h1v1h-1zM4 62h1v1h-1zM13 62h1v1h-1zM35 62h1v1h-1zM42 62h1v1h-1zM52 62h1v1h-1zM63 62h2v1h-2zM70 62h1v1h-1zM97 62h1v1h-1zM11 63h1v1h-1zM14 63h1v1h-1zM22 63h1v1h-1zM40 63h1v1h-1zM54 63h1v1h-1zM66 63h1v1h-1zM68 63h1v1h-1zM98 63h1v1h-1zM3 64h1v1h-1zM12 64h1v1h-1zM37 64h1v1h-1zM70 64h1v1h-1zM73 64h1v1h-1zM75 64h1v1h-1zM94 64h1v1h-1zM96 64h1v1h-1zM20 65h1v1h-1zM31 65h1v1h-1zM35 65h1v1h-1zM43 65h1v1h-1zM46 65h1v1h-1zM70 65h2v1h-2zM82 65h1v1h-1zM99 65h1v1h-1zM6 66h1v1h-1zM13 66h1v1h-1zM16 66h1v1h-1zM69 66h2v1h-2zM92 66h1v1h-1zM94 66h2v1h-2zM10 67h1v1h-1zM14 67h1v1h-1zM22 67h2v1h-2zM37 67h1v1h-1zM44 67h1v1h-1zM50 67h1v1h-1zM69 67h1v1h-1zM73 67h2v1h-2zM76 67h1v1h-1zM80 67h1v1h-1zM84 67h1v1h-1zM94 67h1v1h-1zM3 68h1v1h-1zM17 68h1v1h-1zM33 68h1v1h-1zM36 68h1v1h-1zM59 68h1v1h-1zM68 68h1v1h-1zM72 68h1v1h-1zM7 69h1v1h-1zM35 69h1v1h-1zM37 69h1v1h-1zM39 69h1v1h-1zM44 69h1v1h-1zM66 69h1v1h-1zM70 69h1v1h-1zM95 69h1v1h-1zM5 70h1v1h-1zM11 70h1v1h-1zM36 70h1v1h-1zM51 70h1v1h-1zM64 70h1v1h-1zM73 70h2v1h-2zM9 71h1v1h-1zM11 71h1v1h-1zM35 71h1v1h-1zM42 71h1v1h-1zM77 71h1v1h-1zM95 71h1v1h-1zM97 71h2v1h-2zM2 72h1v1h-1zM31 72h1v1h-1zM37 72h1v1h-1zM71 72h1v1h-1zM76 72h1v1h-1zM90 72h1v1h-1zM97 72h1v1h-1zM3 73h1v1h-1zM15 73h1v1h-1zM18 73h1v1h-1zM42 73h1v1h-1zM63 73h1v1h-1zM74 73h1v1h-1zM2 74h1v1h-1zM20 74h1v1h-1zM33 74h1v1h-1zM44 74h1v1h-1zM59 74h1v1h-1zM68 74h1v1h-1zM77 74h1v1h-1zM96 74h1v1h-1zM98 74h1v1h-1zM4 75h2v1h-2zM16 75h1v1h-1zM22 75h1v1h-1zM47 75h1v1h-1zM49 75h1v1h-1zM17 76h1v1h-1zM41 76h1v1h-1zM45 76h1v1h-1zM74 76h1v1h-1zM90 76h1v1h-1zM92 76h1v1h-1zM5 77h1v1h-1zM17 77h1v1h-1zM26 77h1v1h-1zM34 77h1v1h-1zM52 77h1v1h-1zM72 77h1v1h-1zM78 77h1v1h-1zM35 78h2v1h-2zM51 78h1v1h-1zM72 78h1v1h-1zM80 78h1v1h-1zM8 79h1v1h-1zM33 79h1v1h-1zM63 79h1v1h-1zM65 79h1v1h-1zM70 79h2v1h-2zM98 79h1v1h-1zM3 80h1v1h-1zM11 80h1v1h-1zM49 80h1v1h-1zM75 80h1v1h-1zM97 80h1v1h-1zM0 81h1v1h-1zM7 81h2v1h-2zM17 81h1v1h-1zM33 81h1v1h-1zM38 81h2v1h-2zM46 81h1v1h-1zM63 81h1v1h-1zM72 81h1v1h-1zM2 82h1v1h-1zM5 82h2v1h-2zM14 82h1v1h-1zM33 82h2v1h-2zM37 82h2v1h-2zM43 82h1v1h-1zM50 82h1v1h-1zM60 82h1v1h-1zM65 82h1v1h-1zM68 82h1v1h-1zM79 82h1v1h-1zM85 82h1v1h-1zM3 83h1v1h-1zM5 83h1v1h-1zM51 83h1v1h-1zM67 83h2v1h-2zM12 84h1v1h-1zM33 84h1v1h-1zM45 84h1v1h-1zM49 84h1v1h-1zM76 84h1v1h-1zM96 84h1v1h-1zM19 85h1v1h-1zM23 85h1v1h-1zM60 85h1v1h-1zM71 85h1v1h-1zM75 85h1v1h-1zM77 85h1v1h-1zM89 85h1v1h-1zM9 86h1v1h-1zM30 86h1v1h-1zM49 86h1v1h-1zM73 86h2v1h-2zM95 86h1v1h-1zM4 87h2v1h-2zM11 87h2v1h-2zM65 87h1v1h-1zM75 87h1v1h-1zM80 87h2v1h-2zM5 88h1v1h-1zM7 88h1v1h-1zM9 88h1v1h-1zM16 88h1v1h-1zM39 88h1v1h-1zM41 88h1v1h-1zM46 88h1v1h-1zM66 88h1v1h-1zM99 88h1v1h-1zM0 89h1v1h-1zM11 89h2v1h-2zM15 89h1v1h-1zM18 89h1v1h-1zM43 89h1v1h-1zM62 89h1v1h-1zM65 89h1v1h-1zM69 89h1v1h-1zM75 89h1v1h-1zM7 90h1v1h-1zM46 90h1v1h-1zM72 90h1v1h-1zM80 90h1v1h-1zM92 90h1v1h-1zM96 90h1v1h-1zM3 91h3v1h-3zM8 91h1v1h-1zM10 91h2v1h-2zM13 91h1v1h-1zM16 91h1v1h-1zM81 91h1v1h-1zM19 92h1v1h-1zM32 92h1v1h-1zM46 92h1v1h-1zM59 92h1v1h-1zM67 92h1v1h-1zM71 92h3v1h-3zM76 92h1v1h-1zM79 92h1v1h-1zM96 92h1v1h-1zM8 93h1v1h-1zM15 93h1v1h-1zM29 93h1v1h-1zM38 93h1v1h-1zM66 93h2v1h-2zM74 93h1v1h-1zM2 94h1v1h-1zM21 94h1v1h-1zM37 94h1v1h-1zM39 94h1v1h-1zM41 94h1v1h-1zM45 94h1v1h-1zM65 94h1v1h-1zM70 94h1v1h-1zM96 94h2v1h-2zM1 95h1v1h-1zM3 95h2v1h-2zM31 95h1v1h-1zM33 95h2v1h-2zM48 95h1v1h-1zM56 95h1v1h-1zM64 95h1v1h-1zM68 95h2v1h-2zM80 95h1v1h-1zM95 95h1v1h-1zM3 96h1v1h-1zM6 96h1v1h-1zM13 96h1v1h-1zM34 96h1v1h-1zM38 96h2v1h-2zM46 96h2v1h-2zM74 96h1v1h-1zM9 97h1v1h-1zM14 97h1v1h-1zM21 97h1v1h-1zM34 97h1v1h-1zM40 97h1v1h-1zM43 97h1v1h-1zM79 97h1v1h-1zM92 97h1v1h-1zM2 98h1v1h-1zM10 98h1v1h-1zM36 98h1v1h-1zM72 98h1v1h-1zM77 98h1v1h-1zM3 99h1v1h-1zM5 99h2v1h-2zM11 99h1v1h-1zM20 99h1v1h-1zM31 99h1v1h-1zM33 99h1v1h-1zM39 99h1v1h-1zM41 99h1v1h-1zM71 99h1v1h-1zM76 99h1v1h-1z"/>
<path fill="rgb(163,163,163)" d="M38 0h1v1h-1zM66 0h1v1h-1zM68 0h1v1h-1zM73 0h2v1h-2zM97 0h1v1h-1zM61 1h1v1h-1zM66 1h1v1h-1zM97 1h1v1h-1zM0 2h1v1h-1zM7 2h1v1h-1zM9 2h1v1h-1zM38 2h1v1h-1zM69 2h1v1h-1zM11 3h1v1h-1zM42 3h1v1h-1zM47 3h1v1h-1zM95 3h1v1h-1zM39 4h1v1h-1zM45 4h1v1h-1zM55 4h1v1h-1zM57 4h1v1h-1zM0 5h1v1h-1zM6 5h1v1h-1zM9 5h2v1h-2zM42 5h1v1h-1zM44 5h1v1h-1zM50 5h1v1h-1zM61 5h1v1h-1zM66 5h1v1h-1zM70 5h1v1h-1zM77 5h2v1h-2zM4 6h1v1h-1zM14 6h1v1h-1zM35 6h1v1h-1zM44 6h1v1h-1zM61 6h1v1h-1zM66 6h1v1h-1zM78 6h1v1h-1zM96 6h1v1h-1zM36 7h1v1h-1zM38 7h1v1h-1zM43 7h1v1h-1zM65 7h1v1h-1zM70 7h1v1h-1zM74 7h1v1h-1zM96 7h2v1h-2zM7 8h2v1h-2zM15 8h1v1h-1zM35 8h1v1h-1zM38 8h1v1h-1zM45 8h2v1h-2zM90 8h1v1h-1zM5 9h1v1h-1zM63 9h1v1h-1zM67 9h1v1h-1zM73 9h1v1h-1zM75 9h1v1h-1zM78 9h1v1h-1zM10 10h1v1h-1zM16 10h1v1h-1zM33 10h1v1h-1zM70 10h1v1h-1zM72 10h1v1h-1zM77 10h1v1h-1zM92 10h1v1h-1zM98 10h1v1h-1zM3 11h1v1h-1zM9 11h1v1h-1zM43 11h1v1h-1zM47 11h1v1h-1zM65 11h1v1h-1zM80 11h1v1h-1zM83 11h1v1h-1zM4 12h1v1h-1zM7 12h1v1h-1zM42 12h1v1h-1zM67 12h1v1h-1zM75 12h1v1h-1zM5 13h1v1h-1zM9 13h1v1h-1zM12 13h1v1h-1zM25 13h1v1h-1zM45 13h1v1h-1zM63 13h2v1h-2zM75 13h1v1h-1zM11 14h1v1h-1zM20 14h1v1h-1zM44 14h1v1h-1zM66 14h1v1h-1zM8 15h1v1h-1zM15 15h1v1h-1zM35 15h1v1h-1zM39 15h1v1h-1zM43 15h1v1h-1zM47 15h1v1h-1zM52 15h1v1h-1zM65 15h2v1h-2zM73 15h2v1h-2zM77 15h1v1h-1zM5 16h1v1h-1zM13 16h1v1h-1zM36 16h1v1h-1zM71 16h1v1h-1zM0 17h1v1h-1zM45 17h1v1h-1zM71 17h1v1h-1zM74 17h1v1h-1zM77 17h1v1h-1zM18 18h1v1h-1zM34 18h1v1h-1zM48 18h2v1h-2zM70 18h2v1h-2zM74 18h1v1h-1zM95 18h1v1h-1zM5 19h1v1h-1zM11 19h1v1h-1zM35 19h1v1h-1zM40 19h1v1h-1zM61 19h1v1h-1zM8 20h1v1h-1zM10 20h2v1h-2zM14 20h1v1h-1zM19 20h1v1h-1zM37 20h1v1h-1zM45 20h2v1h-2zM74 20h1v1h-1zM2 21h1v1h-1zM11 21h1v1h-1zM36 21h1v1h-1zM59 21h1v1h-1zM62 21h2v1h-2zM75 21h1v1h-1zM98 21h1v1h-1zM4 22h1v1h-1zM9 22h1v1h-1zM35 22h1v1h-1zM64 22h1v1h-1zM70 22h1v1h-1zM75 22h1v1h-1zM77 22h1v1h-1zM31 23h1v1h-1zM76 23h1v1h-1zM10 24h1v1h-1zM41 24h1v1h-1zM45 24h1v1h-1zM64 24h2v1h-2zM67 24h1v1h-1zM73 24h1v1h-1zM79 24h1v1h-1zM95 24h1v1h-1zM97 24h1v1h-1zM15 25h1v1h-1zM25 25h1v1h-1zM38 25h1v1h-1zM42 25h1v1h-1zM65 25h1v1h-1zM73 25h1v1h-1zM1 26h1v1h-1zM17 26h1v1h-1zM44 26h1v1h-1zM70 26h1v1h-1zM76 26h1v1h-1zM6 27h1v1h-1zM8 27h1v1h-1zM12 27h1v1h-1zM38 27h1v1h-1zM70 27h1v1h-1zM72 27h1v1h-1zM95 27h1v1h-1zM98 27h1v1h-1zM39 28h1v1h-1zM41 28h2v1h-2zM64 28h1v1h-1zM67 28h1v1h-1zM71 28h2v1h-2zM79 28h1v1h-1zM99 29h1v1h-1zM37 30h1v1h-1zM39 30h1v1h-1zM43 30h1v1h-1zM45 30h1v1h-1zM49 30h1v1h-1zM62 30h1v1h-1zM76 30h1v1h-1zM6 31h2v1h-2zM17 31h1v1h-1zM34 31h1v1h-1zM67 31h1v1h-1zM70 31h1v1h-1zM75 31h2v1h-2zM84 31h1v1h-1zM2 32h1v1h-1zM5 32h1v1h-1zM9 32h1v1h-1zM12 32h1v1h-1zM31 32h1v1h-1zM64 32h1v1h-1zM68 32h1v1h-1zM74 32h1v1h-1zM76 32h1v1h-1zM37 33h1v1h-1zM39 33h1v1h-1zM44 33h1v1h-1zM67 33h1v1h-1zM78 33h1v1h-1zM1 34h1v1h-1zM6 34h1v1h-1zM11 34h1v1h-1zM17 34h1v1h-1zM22 34h1v1h-1zM37 34h1v1h-1zM40 34h1v1h-1zM65 34h3v1h-3zM99 34h1v1h-1zM6 35h1v1h-1zM12 35h1v1h-1zM33 35h1v1h-1zM44 35h1v1h-1zM72 35h1v1h-1zM98 35h1v1h-1zM8 36h1v1h-1zM35 36h1v1h-1zM39 36h1v1h-1zM57 36h1v1h-1zM64 36h3v1h-3zM69 36h3v1h-3zM78 36h1v1h-1zM83 36h1v1h-1zM92 36h1v1h-1zM96 36h1v1h-1zM0 37h1v1h-1zM4 37h1v1h-1zM11 37h1v1h-1zM56 37h1v1h-1zM70 37h1v1h-1zM96 37h1v1h-1zM38 38h1v1h-1zM41 38h1v1h-1zM44 38h1v1h-1zM48 38h1v1h-1zM67 38h1v1h-1zM96 38h2v1h-2zM10 39h1v1h-1zM16 39h1v1h-1zM29 39h1v1h-1zM45 39h2v1h-2zM71 39h1v1h-1zM76 39h1v1h-1zM97 39h1v1h-1zM99 39h1v1h-1zM13 40h1v1h-1zM34 40h1v1h-1zM49 40h1v1h-1zM11 41h1v1h-1zM32 41h1v1h-1zM34 41h1v1h-1zM45 41h1v1h-1zM69 41h1v1h-1zM78 41h1v1h-1zM33 42h2v1h-2zM4 43h1v1h-1zM10 43h1v1h-1zM48 43h1v1h-1zM70 43h1v1h-1zM5 44h1v1h-1zM39 44h1v1h-1zM43 44h1v1h-1zM76 44h1v1h-1zM3 45h1v1h-1zM8 45h1v1h-1zM13 45h1v1h-1zM39 45h1v1h-1zM43 45h1v1h-1zM46 45h1v1h-1zM48 45h1v1h-1zM54 45h1v1h-1zM60 45h1v1h-1zM2 46h1v1h-1zM5 46h1v1h-1zM14 46h1v1h-1zM78 46h1v1h-1zM37 47h1v1h-1zM49 47h1v1h-1zM66 47h1v1h-1zM68 47h1v1h-1zM71 47h1v1h-1zM74 47h1v1h-1zM19 48h1v1h-1zM38 48h1v1h-1zM71 48h1v1h-1zM74 48h1v1h-1zM98 48h1v1h-1zM3 49h1v1h-1zM7 49h1v1h-1zM11 49h1v1h-1zM64 49h1v1h-1zM73 49h2v1h-2zM45 50h1v1h-1zM67 50h1v1h-1zM71 50h1v1h-1zM74 50h1v1h-1zM10 51h2v1h-2zM16 51h1v1h-1zM33 51h1v1h-1zM40 51h1v1h-1zM49 51h1v1h-1zM64 51h1v1h-1zM73 51h1v1h-1zM82 51h1v1h-1zM91 51h1v1h-1zM6 52h1v1h-1zM12 52h1v1h-1zM37 52h1v1h-1zM7 53h1v1h-1zM11 53h1v1h-1zM37 53h1v1h-1zM75 53h1v1h-1zM0 54h2v1h-2zM4 54h1v1h-1zM17 54h1v1h-1zM31 54h1v1h-1zM35 54h1v1h-1zM37 54h1v1h-1zM42 54h1v1h-1zM67 54h1v1h-1zM73 54h1v1h-1zM98 54h1v1h-1zM0 55h1v1h-1zM35 55h1v1h-1zM37 55h1v1h-1zM40 55h1v1h-1zM68 55h1v1h-1zM74 55h1v1h-1zM77 55h1v1h-1zM94 55h1v1h-1zM9 56h1v1h-1zM35 56h1v1h-1zM41 56h1v1h-1zM44 56h1v1h-1zM63 56h1v1h-1zM66 56h1v1h-1zM75 56h1v1h-1zM77 56h1v1h-1zM95 56h1v1h-1zM97 56h1v1h-1zM99 56h1v1h-1zM44 57h1v1h-1zM64 57h1v1h-1zM75 57h1v1h-1zM80 57h1v1h-1zM5 58h1v1h-1zM13 58h1v1h-1zM36 58h1v1h-1zM38 58h1v1h-1zM44 58h1v1h-1zM73 58h1v1h-1zM45 59h1v1h-1zM48 59h1v1h-1zM70 59h1v1h-1zM43 60h2v1h-2zM50 60h1v1h-1zM66 60h1v1h-1zM70 60h2v1h-2zM5 61h1v1h-1zM16 61h1v1h-1zM32 61h1v1h-1zM39 61h1v1h-1zM42 61h1v1h-1zM74 61h1v1h-1zM5 62h1v1h-1zM10 62h1v1h-1zM15 62h1v1h-1zM38 62h1v1h-1zM41 62h1v1h-1zM61 62h1v1h-1zM94 62h1v1h-1zM6 63h1v1h-1zM36 63h1v1h-1zM43 63h1v1h-1zM65 63h1v1h-1zM73 63h1v1h-1zM6 64h1v1h-1zM33 64h1v1h-1zM35 64h1v1h-1zM63 64h1v1h-1zM68 64h1v1h-1zM71 64h1v1h-1zM97 64h2v1h-2zM72 65h1v1h-1zM84 65h1v1h-1zM93 65h1v1h-1zM9 66h2v1h-2zM15 66h1v1h-1zM24 66h1v1h-1zM34 66h1v1h-1zM65 66h1v1h-1zM72 66h1v1h-1zM97 66h2v1h-2zM5 67h1v1h-1zM8 67h1v1h-1zM36 67h1v1h-1zM68 67h1v1h-1zM92 67h1v1h-1zM13 68h1v1h-1zM18 68h1v1h-1zM38 68h1v1h-1zM49 68h1v1h-1zM51 68h1v1h-1zM66 68h1v1h-1zM4 69h1v1h-1zM11 69h2v1h-2zM29 69h1v1h-1zM67 69h1v1h-1zM71 69h1v1h-1zM77 69h1v1h-1zM97 69h1v1h-1zM6 70h1v1h-1zM26 70h1v1h-1zM42 70h1v1h-1zM80 70h1v1h-1zM99 70h1v1h-1zM4 71h2v1h-2zM39 71h1v1h-1zM65 71h1v1h-1zM73 71h1v1h-1zM4 72h1v1h-1zM10 72h1v1h-1zM14 72h1v1h-1zM92 72h1v1h-1zM11 73h1v1h-1zM35 73h1v1h-1zM38 73h1v1h-1zM54 73h1v1h-1zM64 73h1v1h-1zM66 73h1v1h-1zM68 73h1v1h-1zM95 73h1v1h-1zM9 74h1v1h-1zM15 74h1v1h-1zM36 74h1v1h-1zM41 74h1v1h-1zM43 74h1v1h-1zM47 74h1v1h-1zM74 74h2v1h-2zM97 74h1v1h-1zM29 75h1v1h-1zM41 75h1v1h-1zM44 75h1v1h-1zM66 75h1v1h-1zM7 76h1v1h-1zM12 76h1v1h-1zM18 76h1v1h-1zM21 76h1v1h-1zM38 76h1v1h-1zM71 76h1v1h-1zM76 76h1v1h-1zM8 77h1v1h-1zM45 77h1v1h-1zM69 77h1v1h-1zM76 77h1v1h-1zM0 78h1v1h-1zM3 78h1v1h-1zM10 78h1v1h-1zM45 78h1v1h-1zM64 78h1v1h-1zM70 78h1v1h-1zM75 78h1v1h-1zM97 78h1v1h-1zM3 79h1v1h-1zM99 79h1v1h-1zM43 80h1v1h-1zM46 80h2v1h-2zM63 80h1v1h-1zM68 80h1v1h-1zM6 81h1v1h-1zM36 81h2v1h-2zM40 81h1v1h-1zM43 81h1v1h-1zM76 81h1v1h-1zM99 81h1v1h-1zM8 82h1v1h-1zM39 82h1v1h-1zM41 82h1v1h-1zM72 82h1v1h-1zM74 82h1v1h-1zM99 82h1v1h-1zM11 83h1v1h-1zM33 83h1v1h-1zM38 83h1v1h-1zM75 83h1v1h-1zM84 83h1v1h-1zM94 83h2v1h-2zM97 83h1v1h-1zM73 84h1v1h-1zM77 84h1v1h-1zM98 84h2v1h-2zM11 85h1v1h-1zM37 85h1v1h-1zM59 85h1v1h-1zM61 85h1v1h-1zM68 85h1v1h-1zM96 85h2v1h-2zM2 86h1v1h-1zM6 86h2v1h-2zM12 86h1v1h-1zM71 86h1v1h-1zM6 87h1v1h-1zM32 87h1v1h-1zM36 87h1v1h-1zM41 87h2v1h-2zM78 87h1v1h-1zM93 87h1v1h-1zM6 88h1v1h-1zM12 88h2v1h-2zM35 88h1v1h-1zM35 89h2v1h-2zM73 89h1v1h-1zM77 89h1v1h-1zM94 89h1v1h-1zM21 90h1v1h-1zM39 90h1v1h-1zM45 90h1v1h-1zM63 90h1v1h-1zM66 90h1v1h-1zM74 90h2v1h-2zM78 90h2v1h-2zM9 91h1v1h-1zM38 91h1v1h-1zM70 91h1v1h-1zM8 92h1v1h-1zM14 92h2v1h-2zM39 92h1v1h-1zM65 92h1v1h-1zM70 92h1v1h-1zM4 93h1v1h-1zM10 93h1v1h-1zM32 93h1v1h-1zM34 93h1v1h-1zM40 93h1v1h-1zM45 93h1v1h-1zM58 93h1v1h-1zM71 93h1v1h-1zM73 93h1v1h-1zM98 93h1v1h-1zM9 94h1v1h-1zM72 94h1v1h-1zM76 94h1v1h-1zM82 94h1v1h-1zM15 95h1v1h-1zM37 95h1v1h-1zM44 95h1v1h-1zM46 95h1v1h-1zM71 95h1v1h-1zM73 95h1v1h-1zM99 95h1v1h-1zM36 96h1v1h-1zM67 96h1v1h-1zM72 96h1v1h-1zM95 96h1v1h-1zM97 96h1v1h-1zM1 97h1v1h-1zM6 97h1v1h-1zM32 97h1v1h-1zM67 97h1v1h-1zM70 97h1v1h-1zM95 97h1v1h-1zM4 98h1v1h-1zM7 98h1v1h-1zM11 98h1v1h-1zM13 98h1v1h-1zM19 98h1v1h-1zM71 98h1v1h-1zM97 98h1v1h-1zM99 98h1v1h-1zM12 99h1v1h-1zM23 99h1v1h-1zM72 99h1v1h-1zM77 99h1v1h-1z"/>
<path fill="rgb(171,171,171)" d="M6 0h1v1h-1zM21 0h1v1h-1zM31 1h1v1h-1zM37 1h1v1h-1zM41 1h1v1h-1zM31 2h1v1h-1zM47 2h1v1h-1zM75 2h1v1h-1zM91 2h1v1h-1zM8 3h1v1h-1zM35 3h1v1h-1zM40 4h1v1h-1zM49 4h1v1h-1zM67 4h1v1h-1zM79 4h1v1h-1zM98 4h1v1h-1zM39 5h2v1h-2zM73 5h1v1h-1zM97 5h1v1h-1zM3 6h1v1h-1zM12 6h1v1h-1zM34 6h1v1h-1zM39 6h1v1h-1zM42 6h1v1h-1zM65 6h1v1h-1zM73 6h1v1h-1zM2 7h1v1h-1zM15 7h1v1h-1zM42 7h1v1h-1zM67 7h1v1h-1zM99 7h1v1h-1zM5 8h1v1h-1zM12 8h1v1h-1zM33 8h1v1h-1zM74 8h1v1h-1zM98 8h1v1h-1zM3 9h1v1h-1zM70 9h1v1h-1zM92 9h1v1h-1zM3 10h1v1h-1zM11 10h1v1h-1zM40 10h1v1h-1zM46 10h1v1h-1zM62 10h1v1h-1zM79 10h1v1h-1zM8 11h1v1h-1zM39 11h1v1h-1zM55 11h1v1h-1zM93 11h1v1h-1zM1 12h1v1h-1zM11 12h1v1h-1zM14 12h1v1h-1zM32 12h1v1h-1zM36 12h1v1h-1zM38 12h2v1h-2zM79 12h1v1h-1zM6 13h1v1h-1zM42 13h1v1h-1zM72 13h1v1h-1zM91 13h1v1h-1zM32 14h1v1h-1zM38 14h1v1h-1zM80 14h1v1h-1zM36 15h1v1h-1zM64 15h1v1h-1zM69 15h1v1h-1zM98 15h1v1h-1zM9 16h2v1h-2zM15 16h1v1h-1zM44 16h2v1h-2zM67 16h1v1h-1zM70 16h1v1h-1zM74 16h1v1h-1zM80 16h1v1h-1zM86 16h1v1h-1zM97 16h1v1h-1zM7 17h1v1h-1zM10 17h1v1h-1zM44 17h1v1h-1zM72 17h1v1h-1zM98 17h1v1h-1zM3 18h2v1h-2zM11 18h2v1h-2zM44 18h1v1h-1zM67 18h1v1h-1zM14 19h2v1h-2zM41 19h1v1h-1zM44 19h1v1h-1zM6 20h1v1h-1zM41 20h1v1h-1zM66 20h2v1h-2zM79 20h1v1h-1zM99 20h1v1h-1zM5 21h1v1h-1zM39 21h1v1h-1zM66 21h1v1h-1zM11 22h2v1h-2zM38 22h1v1h-1zM69 22h1v1h-1zM93 22h1v1h-1zM99 22h1v1h-1zM7 23h1v1h-1zM11 23h2v1h-2zM42 23h1v1h-1zM51 23h1v1h-1zM67 23h2v1h-2zM5 24h1v1h-1zM13 24h1v1h-1zM17 24h1v1h-1zM39 24h1v1h-1zM68 24h1v1h-1zM34 25h1v1h-1zM36 25h1v1h-1zM46 25h1v1h-1zM76 25h1v1h-1zM6 26h2v1h-2zM67 26h1v1h-1zM5 27h1v1h-1zM32 27h1v1h-1zM61 27h1v1h-1zM12 28h1v1h-1zM65 28h1v1h-1zM10 29h1v1h-1zM36 29h1v1h-1zM49 29h1v1h-1zM73 29h1v1h-1zM82 29h1v1h-1zM6 30h1v1h-1zM10 30h2v1h-2zM70 30h1v1h-1zM36 31h1v1h-1zM41 31h1v1h-1zM68 31h1v1h-1zM94 31h1v1h-1zM10 32h1v1h-1zM37 32h1v1h-1zM39 32h1v1h-1zM71 32h1v1h-1zM4 33h1v1h-1zM32 33h1v1h-1zM47 33h1v1h-1zM44 34h1v1h-1zM49 34h1v1h-1zM70 34h1v1h-1zM0 35h1v1h-1zM2 35h1v1h-1zM9 35h1v1h-1zM31 35h1v1h-1zM82 35h1v1h-1zM40 36h1v1h-1zM44 36h1v1h-1zM67 36h1v1h-1zM34 37h1v1h-1zM72 37h1v1h-1zM7 38h1v1h-1zM12 38h2v1h-2zM29 38h1v1h-1zM68 38h1v1h-1zM75 38h1v1h-1zM84 38h1v1h-1zM95 38h1v1h-1zM6 39h1v1h-1zM75 39h1v1h-1zM7 40h1v1h-1zM19 40h1v1h-1zM69 40h2v1h-2zM7 41h1v1h-1zM14 41h1v1h-1zM35 41h2v1h-2zM44 41h1v1h-1zM66 41h2v1h-2zM4 42h1v1h-1zM14 42h2v1h-2zM41 42h1v1h-1zM72 42h1v1h-1zM78 42h1v1h-1zM35 43h1v1h-1zM42 43h2v1h-2zM46 43h1v1h-1zM67 43h1v1h-1zM71 43h1v1h-1zM6 44h1v1h-1zM9 44h1v1h-1zM11 44h1v1h-1zM44 44h1v1h-1zM61 44h1v1h-1zM71 44h1v1h-1zM81 44h1v1h-1zM34 45h1v1h-1zM67 45h1v1h-1zM98 45h1v1h-1zM4 46h1v1h-1zM6 46h1v1h-1zM10 46h1v1h-1zM37 46h2v1h-2zM41 46h1v1h-1zM75 46h1v1h-1zM79 46h1v1h-1zM96 46h1v1h-1zM99 46h1v1h-1zM14 47h1v1h-1zM40 47h1v1h-1zM42 47h1v1h-1zM75 47h1v1h-1zM79 47h1v1h-1zM97 47h1v1h-1zM39 48h1v1h-1zM48 48h1v1h-1zM60 48h2v1h-2zM72 48h1v1h-1zM75 48h1v1h-1zM5 49h1v1h-1zM18 49h1v1h-1zM52 49h1v1h-1zM62 49h1v1h-1zM68 49h2v1h-2zM82 49h1v1h-1zM97 49h1v1h-1zM4 50h1v1h-1zM8 50h1v1h-1zM15 50h1v1h-1zM33 50h1v1h-1zM39 50h1v1h-1zM68 50h3v1h-3zM98 50h1v1h-1zM37 51h1v1h-1zM71 51h1v1h-1zM75 51h1v1h-1zM17 52h1v1h-1zM32 52h1v1h-1zM36 52h1v1h-1zM39 52h1v1h-1zM62 52h1v1h-1zM64 52h1v1h-1zM71 52h1v1h-1zM79 52h1v1h-1zM98 52h1v1h-1zM4 53h1v1h-1zM36 53h1v1h-1zM38 53h1v1h-1zM43 53h1v1h-1zM70 53h1v1h-1zM41 54h1v1h-1zM45 54h1v1h-1zM65 54h1v1h-1zM71 54h1v1h-1zM75 54h1v1h-1zM3 55h2v1h-2zM32 55h1v1h-1zM34 55h1v1h-1zM6 56h1v1h-1zM10 56h1v1h-1zM33 56h1v1h-1zM36 56h1v1h-1zM76 56h1v1h-1zM96 56h1v1h-1zM98 56h1v1h-1zM7 57h1v1h-1zM15 57h1v1h-1zM45 57h1v1h-1zM43 58h1v1h-1zM70 58h1v1h-1zM74 58h2v1h-2zM91 58h1v1h-1zM3 59h2v1h-2zM39 59h2v1h-2zM75 59h1v1h-1zM78 59h1v1h-1zM9 60h1v1h-1zM37 60h1v1h-1zM47 60h1v1h-1zM64 60h1v1h-1zM96 60h2v1h-2zM69 61h1v1h-1zM72 61h1v1h-1zM77 61h1v1h-1zM94 61h1v1h-1zM6 62h1v1h-1zM8 62h1v1h-1zM36 62h1v1h-1zM66 62h1v1h-1zM71 62h1v1h-1zM44 63h1v1h-1zM49 63h1v1h-1zM70 63h1v1h-1zM1 64h1v1h-1zM8 64h1v1h-1zM14 64h1v1h-1zM40 64h1v1h-1zM42 64h1v1h-1zM44 64h1v1h-1zM92 64h1v1h-1zM7 65h1v1h-1zM36 65h1v1h-1zM47 65h1v1h-1zM66 65h1v1h-1zM69 65h1v1h-1zM96 65h1v1h-1zM31 66h1v1h-1zM43 66h1v1h-1zM67 66h1v1h-1zM71 66h1v1h-1zM30 67h1v1h-1zM33 67h1v1h-1zM40 67h1v1h-1zM67 67h1v1h-1zM6 68h1v1h-1zM10 68h1v1h-1zM40 68h1v1h-1zM71 68h1v1h-1zM74 68h2v1h-2zM5 69h1v1h-1zM36 69h1v1h-1zM8 70h1v1h-1zM43 70h1v1h-1zM76 70h1v1h-1zM95 70h1v1h-1zM13 71h1v1h-1zM16 71h1v1h-1zM37 71h2v1h-2zM45 71h1v1h-1zM94 71h1v1h-1zM16 72h1v1h-1zM64 72h1v1h-1zM74 72h1v1h-1zM10 73h1v1h-1zM41 73h1v1h-1zM43 73h1v1h-1zM45 73h1v1h-1zM69 73h1v1h-1zM77 73h1v1h-1zM17 74h1v1h-1zM35 74h1v1h-1zM40 74h1v1h-1zM42 74h1v1h-1zM45 74h1v1h-1zM73 74h1v1h-1zM90 74h1v1h-1zM3 75h1v1h-1zM11 75h1v1h-1zM34 75h1v1h-1zM38 75h1v1h-1zM43 75h1v1h-1zM62 75h1v1h-1zM68 75h1v1h-1zM75 75h1v1h-1zM31 76h1v1h-1zM42 76h1v1h-1zM48 76h1v1h-1zM73 76h1v1h-1zM96 76h1v1h-1zM10 77h1v1h-1zM13 77h1v1h-1zM32 77h1v1h-1zM36 77h1v1h-1zM39 77h1v1h-1zM44 77h1v1h-1zM67 77h1v1h-1zM74 77h1v1h-1zM77 77h1v1h-1zM94 77h1v1h-1zM4 78h1v1h-1zM7 78h1v1h-1zM11 78h1v1h-1zM38 78h1v1h-1zM43 78h1v1h-1zM67 78h1v1h-1zM92 78h1v1h-1zM66 79h4v1h-4zM72 79h1v1h-1zM84 79h1v1h-1zM95 79h1v1h-1zM97 79h1v1h-1zM36 80h2v1h-2zM95 80h1v1h-1zM10 81h1v1h-1zM44 81h1v1h-1zM64 81h1v1h-1zM67 81h1v1h-1zM10 82h1v1h-1zM69 82h1v1h-1zM73 82h1v1h-1zM9 83h1v1h-1zM13 83h1v1h-1zM35 83h1v1h-1zM42 83h1v1h-1zM66 83h1v1h-1zM69 83h4v1h-4zM77 83h1v1h-1zM4 84h1v1h-1zM10 84h1v1h-1zM37 84h1v1h-1zM43 84h1v1h-1zM67 84h1v1h-1zM42 85h1v1h-1zM69 85h1v1h-1zM73 85h1v1h-1zM11 86h1v1h-1zM17 86h1v1h-1zM31 86h2v1h-2zM42 86h2v1h-2zM67 86h2v1h-2zM99 86h1v1h-1zM8 87h1v1h-1zM14 87h1v1h-1zM49 87h1v1h-1zM61 87h1v1h-1zM66 87h1v1h-1zM76 87h1v1h-1zM96 87h1v1h-1zM0 88h1v1h-1zM4 88h1v1h-1zM11 88h1v1h-1zM45 88h1v1h-1zM68 88h1v1h-1zM82 88h1v1h-1zM2 89h1v1h-1zM4 89h1v1h-1zM8 89h1v1h-1zM16 89h1v1h-1zM30 89h2v1h-2zM4 90h3v1h-3zM9 90h1v1h-1zM13 90h1v1h-1zM50 90h1v1h-1zM64 90h1v1h-1zM68 90h1v1h-1zM85 90h1v1h-1zM93 90h1v1h-1zM60 91h1v1h-1zM65 91h1v1h-1zM69 91h1v1h-1zM2 92h1v1h-1zM5 92h1v1h-1zM34 92h2v1h-2zM40 92h1v1h-1zM75 92h1v1h-1zM13 93h1v1h-1zM62 93h1v1h-1zM72 93h1v1h-1zM0 94h1v1h-1zM5 94h1v1h-1zM7 94h1v1h-1zM66 94h2v1h-2zM69 94h1v1h-1zM36 95h1v1h-1zM38 95h1v1h-1zM65 95h1v1h-1zM70 95h1v1h-1zM75 95h1v1h-1zM96 95h1v1h-1zM48 96h1v1h-1zM51 96h1v1h-1zM77 96h1v1h-1zM12 97h1v1h-1zM39 97h1v1h-1zM44 97h1v1h-1zM72 97h1v1h-1zM74 97h1v1h-1zM39 98h1v1h-1zM41 98h1v1h-1zM65 98h1v1h-1zM67 98h1v1h-1zM76 98h1v1h-1zM42 99h1v1h-1zM50 99h1v1h-1zM97 99h1v1h-1z"/>
<path fill="rgb(179,179,179)" d="M71 0h1v1h-1zM98 0h1v1h-1zM10 1h1v1h-1zM17 1h1v1h-1zM39 1h1v1h-1zM44 1h1v1h-1zM67 1h1v1h-1zM86 1h1v1h-1zM99 1h1v1h-1zM19 2h1v1h-1zM64 2h1v1h-1zM77 2h1v1h-1zM9 3h1v1h-1zM12 3h1v1h-1zM44 3h1v1h-1zM49 3h1v1h-1zM64 3h1v1h-1zM70 3h1v1h-1zM78 3h1v1h-1zM94 3h1v1h-1zM98 3h1v1h-1zM2 4h1v1h-1zM4 4h1v1h-1zM6 4h1v1h-1zM8 4h1v1h-1zM10 4h1v1h-1zM12 4h1v1h-1zM38 4h1v1h-1zM41 4h1v1h-1zM66 4h1v1h-1zM76 4h1v1h-1zM88 4h1v1h-1zM12 5h1v1h-1zM18 5h1v1h-1zM41 5h1v1h-1zM68 5h1v1h-1zM75 5h1v1h-1zM95 5h1v1h-1zM13 6h1v1h-1zM95 6h1v1h-1zM37 7h1v1h-1zM73 7h1v1h-1zM3 8h1v1h-1zM6 8h1v1h-1zM11 8h1v1h-1zM16 8h1v1h-1zM67 8h1v1h-1zM8 9h1v1h-1zM38 9h1v1h-1zM87 9h1v1h-1zM12 10h1v1h-1zM76 10h1v1h-1zM6 11h1v1h-1zM37 11h1v1h-1zM45 11h1v1h-1zM97 11h1v1h-1zM3 12h1v1h-1zM15 12h1v1h-1zM76 12h1v1h-1zM99 12h1v1h-1zM13 13h1v1h-1zM17 13h1v1h-1zM33 13h1v1h-1zM73 13h2v1h-2zM83 13h1v1h-1zM98 13h2v1h-2zM9 14h1v1h-1zM64 14h1v1h-1zM67 14h1v1h-1zM72 14h1v1h-1zM76 14h1v1h-1zM4 15h1v1h-1zM46 15h1v1h-1zM4 16h1v1h-1zM39 16h1v1h-1zM78 16h1v1h-1zM3 17h2v1h-2zM11 17h1v1h-1zM31 17h1v1h-1zM34 17h1v1h-1zM36 17h1v1h-1zM42 17h1v1h-1zM64 17h1v1h-1zM33 18h1v1h-1zM37 18h1v1h-1zM39 18h1v1h-1zM72 18h1v1h-1zM4 19h1v1h-1zM38 19h1v1h-1zM75 19h1v1h-1zM13 20h1v1h-1zM15 20h1v1h-1zM42 20h1v1h-1zM7 21h1v1h-1zM37 21h1v1h-1zM64 21h1v1h-1zM78 21h1v1h-1zM5 22h1v1h-1zM7 22h1v1h-1zM10 22h1v1h-1zM14 22h1v1h-1zM36 22h1v1h-1zM46 22h1v1h-1zM48 22h1v1h-1zM76 22h1v1h-1zM13 23h1v1h-1zM30 23h1v1h-1zM37 23h2v1h-2zM45 23h1v1h-1zM48 23h1v1h-1zM43 24h1v1h-1zM0 25h1v1h-1zM9 25h1v1h-1zM39 25h2v1h-2zM39 26h1v1h-1zM43 26h1v1h-1zM65 26h1v1h-1zM46 27h1v1h-1zM36 28h1v1h-1zM69 28h2v1h-2zM99 28h1v1h-1zM37 29h1v1h-1zM8 30h2v1h-2zM41 30h1v1h-1zM13 31h1v1h-1zM38 31h1v1h-1zM42 31h2v1h-2zM99 31h1v1h-1zM4 32h1v1h-1zM36 32h1v1h-1zM8 33h1v1h-1zM34 33h1v1h-1zM41 33h1v1h-1zM38 34h1v1h-1zM71 34h2v1h-2zM77 34h1v1h-1zM3 35h1v1h-1zM37 35h1v1h-1zM39 35h2v1h-2zM42 35h1v1h-1zM73 35h2v1h-2zM34 36h1v1h-1zM46 36h1v1h-1zM48 36h1v1h-1zM63 36h1v1h-1zM68 36h1v1h-1zM5 37h1v1h-1zM32 37h1v1h-1zM71 37h1v1h-1zM73 37h2v1h-2zM99 37h1v1h-1zM8 38h1v1h-1zM72 38h1v1h-1zM7 39h1v1h-1zM12 39h1v1h-1zM14 39h1v1h-1zM12 40h1v1h-1zM31 40h1v1h-1zM39 40h2v1h-2zM75 40h1v1h-1zM10 41h1v1h-1zM46 41h1v1h-1zM48 41h1v1h-1zM6 42h1v1h-1zM36 42h1v1h-1zM42 42h1v1h-1zM69 42h1v1h-1zM71 42h1v1h-1zM6 43h1v1h-1zM9 43h1v1h-1zM14 43h1v1h-1zM41 43h1v1h-1zM74 43h1v1h-1zM76 43h1v1h-1zM4 44h1v1h-1zM12 44h1v1h-1zM16 44h1v1h-1zM40 44h1v1h-1zM67 44h1v1h-1zM73 44h1v1h-1zM2 45h1v1h-1zM7 45h1v1h-1zM38 45h1v1h-1zM97 45h1v1h-1zM7 46h1v1h-1zM40 46h1v1h-1zM63 46h1v1h-1zM73 46h2v1h-2zM36 47h1v1h-1zM43 47h1v1h-1zM95 47h1v1h-1zM3 48h1v1h-1zM12 48h1v1h-1zM46 48h1v1h-1zM65 48h1v1h-1zM97 48h1v1h-1zM12 49h1v1h-1zM33 49h1v1h-1zM38 49h1v1h-1zM42 49h1v1h-1zM36 50h3v1h-3zM42 50h1v1h-1zM96 50h1v1h-1zM72 51h1v1h-1zM5 52h1v1h-1zM34 52h1v1h-1zM40 52h1v1h-1zM69 52h1v1h-1zM2 53h1v1h-1zM12 53h1v1h-1zM71 53h1v1h-1zM7 54h1v1h-1zM36 54h1v1h-1zM40 54h1v1h-1zM70 54h1v1h-1zM7 55h1v1h-1zM16 55h1v1h-1zM31 55h1v1h-1zM64 55h1v1h-1zM69 55h1v1h-1zM71 55h1v1h-1zM76 55h1v1h-1zM97 55h1v1h-1zM11 56h1v1h-1zM25 56h1v1h-1zM40 56h1v1h-1zM42 56h1v1h-1zM72 56h1v1h-1zM8 57h1v1h-1zM65 57h1v1h-1zM73 57h1v1h-1zM81 57h1v1h-1zM8 58h1v1h-1zM11 58h1v1h-1zM65 58h1v1h-1zM77 58h1v1h-1zM36 59h2v1h-2zM73 59h2v1h-2zM92 60h1v1h-1zM6 61h1v1h-1zM8 61h1v1h-1zM37 61h1v1h-1zM68 61h1v1h-1zM71 61h1v1h-1zM12 63h1v1h-1zM69 63h1v1h-1zM96 63h1v1h-1zM13 64h1v1h-1zM95 64h1v1h-1zM99 64h1v1h-1zM5 65h1v1h-1zM11 65h1v1h-1zM42 65h1v1h-1zM45 65h1v1h-1zM3 66h1v1h-1zM45 66h1v1h-1zM85 66h1v1h-1zM0 68h1v1h-1zM5 68h1v1h-1zM98 68h1v1h-1zM0 69h1v1h-1zM9 69h1v1h-1zM38 69h1v1h-1zM40 69h1v1h-1zM74 69h1v1h-1zM93 69h1v1h-1zM12 70h1v1h-1zM38 70h1v1h-1zM40 70h1v1h-1zM7 71h1v1h-1zM20 71h1v1h-1zM36 71h1v1h-1zM69 71h1v1h-1zM80 71h1v1h-1zM36 72h1v1h-1zM38 72h1v1h-1zM45 72h1v1h-1zM73 72h1v1h-1zM99 72h1v1h-1zM5 74h1v1h-1zM10 74h1v1h-1zM12 74h1v1h-1zM66 74h2v1h-2zM69 74h1v1h-1zM71 74h1v1h-1zM9 75h1v1h-1zM42 75h1v1h-1zM63 75h1v1h-1zM98 75h2v1h-2zM6 76h1v1h-1zM13 76h1v1h-1zM37 76h1v1h-1zM39 76h1v1h-1zM9 77h1v1h-1zM16 77h1v1h-1zM38 77h1v1h-1zM81 77h1v1h-1zM95 77h1v1h-1zM98 77h1v1h-1zM5 78h1v1h-1zM41 78h2v1h-2zM78 78h1v1h-1zM5 79h1v1h-1zM17 79h1v1h-1zM43 79h1v1h-1zM50 79h1v1h-1zM74 79h1v1h-1zM64 80h1v1h-1zM69 80h1v1h-1zM72 80h1v1h-1zM1 81h1v1h-1zM42 81h1v1h-1zM97 81h1v1h-1zM18 82h1v1h-1zM42 82h1v1h-1zM67 82h1v1h-1zM8 83h1v1h-1zM30 83h1v1h-1zM44 83h1v1h-1zM99 83h1v1h-1zM35 84h1v1h-1zM44 84h1v1h-1zM68 84h1v1h-1zM74 84h1v1h-1zM3 85h1v1h-1zM7 85h1v1h-1zM12 85h1v1h-1zM43 85h1v1h-1zM74 85h1v1h-1zM78 85h1v1h-1zM8 86h1v1h-1zM13 86h1v1h-1zM41 86h1v1h-1zM44 86h1v1h-1zM65 86h1v1h-1zM13 87h1v1h-1zM69 87h1v1h-1zM72 87h1v1h-1zM95 87h1v1h-1zM74 88h1v1h-1zM38 89h1v1h-1zM66 89h1v1h-1zM95 89h1v1h-1zM35 90h1v1h-1zM44 90h1v1h-1zM69 90h1v1h-1zM36 91h1v1h-1zM40 91h1v1h-1zM42 91h1v1h-1zM49 91h1v1h-1zM77 91h1v1h-1zM96 91h1v1h-1zM4 92h1v1h-1zM38 92h1v1h-1zM42 92h1v1h-1zM50 92h1v1h-1zM99 92h1v1h-1zM42 94h1v1h-1zM68 94h1v1h-1zM71 94h1v1h-1zM77 94h1v1h-1zM8 95h1v1h-1zM41 95h1v1h-1zM76 95h1v1h-1zM4 96h1v1h-1zM70 96h1v1h-1zM5 97h1v1h-1zM7 97h1v1h-1zM35 97h1v1h-1zM46 97h1v1h-1zM64 97h1v1h-1zM69 97h1v1h-1zM75 97h1v1h-1zM12 98h1v1h-1zM62 98h1v1h-1zM98 98h1v1h-1zM0 99h1v1h-1zM9 99h1v1h-1zM63 99h1v1h-1z"/>
<path fill="rgb(187,187,187)" d="M7 0h1v1h-1zM41 0h1v1h-1zM67 0h1v1h-1zM9 1h1v1h-1zM15 1h1v1h-1zM8 2h1v1h-1zM13 2h1v1h-1zM37 2h1v1h-1zM41 2h1v1h-1zM57 2h1v1h-1zM95 2h1v1h-1zM96 3h1v1h-1zM47 4h1v1h-1zM63 4h1v1h-1zM74 4h1v1h-1zM3 5h1v1h-1zM8 5h1v1h-1zM33 6h1v1h-1zM41 6h1v1h-1zM99 6h1v1h-1zM44 7h1v1h-1zM72 7h1v1h-1zM64 8h1v1h-1zM69 8h1v1h-1zM39 9h1v1h-1zM43 9h1v1h-1zM66 9h1v1h-1zM41 10h1v1h-1zM68 10h1v1h-1zM96 10h1v1h-1zM7 11h1v1h-1zM41 11h1v1h-1zM84 11h1v1h-1zM6 12h1v1h-1zM9 12h2v1h-2zM44 12h1v1h-1zM71 13h1v1h-1zM79 13h1v1h-1zM39 14h1v1h-1zM10 15h1v1h-1zM45 15h1v1h-1zM97 15h1v1h-1zM5 17h1v1h-1zM9 17h1v1h-1zM41 17h1v1h-1zM69 17h1v1h-1zM40 18h1v1h-1zM12 19h1v1h-1zM42 19h1v1h-1zM94 19h1v1h-1zM97 19h1v1h-1zM68 20h1v1h-1zM83 20h1v1h-1zM12 21h1v1h-1zM72 21h1v1h-1zM16 22h1v1h-1zM73 22h1v1h-1zM8 23h1v1h-1zM70 23h1v1h-1zM75 23h1v1h-1zM7 24h1v1h-1zM70 24h1v1h-1zM35 25h1v1h-1zM4 26h1v1h-1zM14 27h1v1h-1zM64 27h1v1h-1zM67 27h1v1h-1zM37 28h1v1h-1zM93 28h1v1h-1zM8 29h1v1h-1zM15 29h1v1h-1zM67 29h2v1h-2zM70 29h2v1h-2zM93 29h1v1h-1zM33 30h1v1h-1zM36 30h1v1h-1zM44 30h1v1h-1zM71 30h1v1h-1zM96 30h1v1h-1zM9 31h2v1h-2zM15 32h1v1h-1zM68 33h1v1h-1zM72 33h1v1h-1zM96 33h1v1h-1zM13 34h1v1h-1zM63 35h1v1h-1zM70 35h1v1h-1zM5 36h2v1h-2zM15 36h1v1h-1zM33 36h1v1h-1zM43 36h1v1h-1zM74 36h1v1h-1zM69 37h1v1h-1zM40 39h1v1h-1zM11 40h1v1h-1zM17 40h1v1h-1zM72 40h1v1h-1zM74 40h1v1h-1zM77 40h1v1h-1zM5 41h1v1h-1zM15 41h1v1h-1zM68 41h1v1h-1zM7 42h1v1h-1zM40 42h1v1h-1zM76 42h1v1h-1zM84 42h1v1h-1zM96 42h1v1h-1zM99 42h1v1h-1zM39 43h1v1h-1zM98 43h1v1h-1zM35 44h1v1h-1zM75 44h1v1h-1zM68 45h1v1h-1zM70 45h1v1h-1zM39 46h1v1h-1zM70 46h2v1h-2zM6 47h1v1h-1zM35 47h1v1h-1zM67 47h1v1h-1zM92 49h1v1h-1zM2 50h1v1h-1zM6 50h1v1h-1zM3 51h1v1h-1zM42 51h1v1h-1zM98 51h1v1h-1zM42 52h1v1h-1zM70 52h1v1h-1zM85 52h1v1h-1zM42 53h1v1h-1zM44 53h1v1h-1zM8 54h1v1h-1zM72 54h1v1h-1zM10 55h1v1h-1zM43 55h1v1h-1zM98 55h1v1h-1zM32 56h1v1h-1zM38 56h1v1h-1zM43 56h1v1h-1zM5 57h1v1h-1zM11 57h1v1h-1zM97 57h1v1h-1zM3 58h1v1h-1zM42 58h1v1h-1zM65 59h1v1h-1zM3 60h1v1h-1zM6 60h1v1h-1zM36 60h1v1h-1zM42 60h1v1h-1zM67 60h1v1h-1zM98 60h2v1h-2zM7 61h1v1h-1zM10 61h2v1h-2zM36 61h1v1h-1zM38 61h1v1h-1zM43 61h1v1h-1zM97 63h1v1h-1zM4 64h2v1h-2zM7 64h1v1h-1zM31 64h1v1h-1zM41 64h1v1h-1zM8 65h1v1h-1zM37 65h1v1h-1zM67 65h1v1h-1zM73 65h1v1h-1zM94 65h1v1h-1zM37 66h1v1h-1zM99 66h1v1h-1zM42 67h1v1h-1zM95 67h2v1h-2zM43 68h1v1h-1zM41 69h1v1h-1zM98 69h1v1h-1zM65 70h1v1h-1zM10 71h1v1h-1zM66 72h2v1h-2zM75 72h1v1h-1zM7 73h1v1h-1zM34 73h1v1h-1zM37 73h1v1h-1zM8 74h1v1h-1zM14 74h1v1h-1zM38 74h1v1h-1zM70 74h1v1h-1zM95 74h1v1h-1zM8 75h1v1h-1zM12 75h1v1h-1zM36 75h2v1h-2zM97 75h1v1h-1zM65 76h1v1h-1zM67 76h1v1h-1zM11 77h1v1h-1zM33 77h1v1h-1zM40 77h1v1h-1zM97 77h1v1h-1zM37 78h1v1h-1zM69 78h1v1h-1zM96 78h1v1h-1zM38 79h1v1h-1zM73 80h1v1h-1zM11 81h1v1h-1zM7 82h1v1h-1zM35 82h1v1h-1zM7 83h1v1h-1zM18 83h1v1h-1zM41 83h1v1h-1zM76 83h1v1h-1zM63 84h1v1h-1zM66 84h1v1h-1zM69 84h1v1h-1zM8 85h1v1h-1zM36 85h1v1h-1zM46 85h1v1h-1zM70 85h1v1h-1zM45 86h1v1h-1zM93 86h1v1h-1zM9 87h1v1h-1zM39 87h1v1h-1zM45 87h1v1h-1zM10 88h1v1h-1zM31 88h1v1h-1zM36 88h2v1h-2zM42 88h1v1h-1zM44 88h1v1h-1zM68 89h1v1h-1zM74 89h1v1h-1zM98 89h1v1h-1zM11 90h1v1h-1zM34 90h1v1h-1zM41 90h3v1h-3zM45 91h1v1h-1zM12 92h1v1h-1zM6 93h1v1h-1zM11 93h1v1h-1zM39 93h1v1h-1zM41 93h1v1h-1zM14 94h1v1h-1zM36 94h1v1h-1zM10 95h1v1h-1zM12 96h1v1h-1zM50 96h1v1h-1zM99 96h1v1h-1zM36 97h1v1h-1zM96 97h1v1h-1zM73 98h1v1h-1zM8 99h1v1h-1zM40 99h1v1h-1z"/>
<path fill="rgb(195,195,195)" d="M42 0h1v1h-1zM64 1h1v1h-1zM10 2h1v1h-1zM66 3h1v1h-1zM71 3h1v1h-1zM34 4h1v1h-1zM37 4h1v1h-1zM71 4h1v1h-1zM71 5h1v1h-1zM5 6h2v1h-2zM70 6h1v1h-1zM74 6h1v1h-1zM45 7h1v1h-1zM68 7h1v1h-1zM9 8h1v1h-1zM44 9h1v1h-1zM71 9h1v1h-1zM7 10h2v1h-2zM71 10h1v1h-1zM73 10h1v1h-1zM5 11h1v1h-1zM74 11h1v1h-1zM76 11h1v1h-1zM5 12h1v1h-1zM8 12h1v1h-1zM40 12h1v1h-1zM37 13h1v1h-1zM49 14h1v1h-1zM14 15h1v1h-1zM72 15h1v1h-1zM39 17h1v1h-1zM9 18h1v1h-1zM43 18h1v1h-1zM96 18h1v1h-1zM71 20h1v1h-1zM70 21h1v1h-1zM43 22h1v1h-1zM35 23h1v1h-1zM98 23h1v1h-1zM8 24h1v1h-1zM12 24h1v1h-1zM98 24h1v1h-1zM9 26h1v1h-1zM7 27h1v1h-1zM40 27h1v1h-1zM45 27h1v1h-1zM11 28h1v1h-1zM33 28h1v1h-1zM3 29h1v1h-1zM42 29h1v1h-1zM74 30h1v1h-1zM39 31h1v1h-1zM8 32h1v1h-1zM45 32h1v1h-1zM64 33h1v1h-1zM74 33h1v1h-1zM76 33h1v1h-1zM9 36h2v1h-2zM75 36h1v1h-1zM75 37h1v1h-1zM6 38h1v1h-1zM79 38h1v1h-1zM9 39h1v1h-1zM69 39h1v1h-1zM33 40h1v1h-1zM97 40h1v1h-1zM41 41h1v1h-1zM9 42h1v1h-1zM13 42h1v1h-1zM11 46h1v1h-1zM45 46h1v1h-1zM69 46h1v1h-1zM44 48h1v1h-1zM9 49h1v1h-1zM16 49h1v1h-1zM67 49h1v1h-1zM10 50h1v1h-1zM0 51h1v1h-1zM7 51h1v1h-1zM94 51h1v1h-1zM3 52h1v1h-1zM14 52h1v1h-1zM78 53h1v1h-1zM12 54h1v1h-1zM41 55h1v1h-1zM45 55h1v1h-1zM68 56h1v1h-1zM70 56h1v1h-1zM42 57h1v1h-1zM71 57h1v1h-1zM93 57h1v1h-1zM72 58h1v1h-1zM8 60h1v1h-1zM39 60h1v1h-1zM77 60h1v1h-1zM45 61h1v1h-1zM73 62h1v1h-1zM7 63h1v1h-1zM79 63h1v1h-1zM4 65h1v1h-1zM6 65h1v1h-1zM7 66h1v1h-1zM11 66h1v1h-1zM39 66h1v1h-1zM39 68h1v1h-1zM10 69h1v1h-1zM41 70h1v1h-1zM68 70h1v1h-1zM40 71h1v1h-1zM34 72h1v1h-1zM33 73h1v1h-1zM97 73h1v1h-1zM37 74h1v1h-1zM70 75h1v1h-1zM92 75h1v1h-1zM3 76h1v1h-1zM12 77h1v1h-1zM15 77h1v1h-1zM37 77h1v1h-1zM41 77h1v1h-1zM43 77h1v1h-1zM6 78h1v1h-1zM40 78h1v1h-1zM6 79h1v1h-1zM36 79h1v1h-1zM64 79h1v1h-1zM75 79h1v1h-1zM96 80h1v1h-1zM12 81h1v1h-1zM35 81h1v1h-1zM68 81h1v1h-1zM79 81h1v1h-1zM8 84h1v1h-1zM5 85h1v1h-1zM31 85h1v1h-1zM35 85h1v1h-1zM35 86h1v1h-1zM40 86h1v1h-1zM40 87h1v1h-1zM8 88h1v1h-1zM40 88h1v1h-1zM70 88h1v1h-1zM76 88h1v1h-1zM78 88h1v1h-1zM5 89h1v1h-1zM99 89h1v1h-1zM40 90h1v1h-1zM46 91h1v1h-1zM7 92h1v1h-1zM9 92h1v1h-1zM47 92h1v1h-1zM66 92h1v1h-1zM7 93h1v1h-1zM8 94h1v1h-1zM73 94h1v1h-1zM6 95h1v1h-1zM11 95h1v1h-1zM7 96h1v1h-1zM98 96h1v1h-1zM42 97h1v1h-1zM71 97h1v1h-1zM98 97h1v1h-1zM6 98h1v1h-1zM95 98h1v1h-1zM37 99h1v1h-1zM47 99h1v1h-1zM73 99h2v1h-2z"/>
<path fill="rgb(203,203,203)" d="M11 0h1v1h-1zM76 1h1v1h-1zM43 2h1v1h-1zM11 4h1v1h-1zM44 4h1v1h-1zM69 5h1v1h-1zM7 6h1v1h-1zM11 7h1v1h-1zM40 8h1v1h-1zM40 9h1v1h-1zM68 9h2v1h-2zM74 9h1v1h-1zM15 10h1v1h-1zM72 11h1v1h-1zM33 12h1v1h-1zM20 13h1v1h-1zM70 13h1v1h-1zM11 15h1v1h-1zM38 16h1v1h-1zM8 19h1v1h-1zM74 19h1v1h-1zM48 20h1v1h-1zM67 21h1v1h-1zM8 22h1v1h-1zM42 22h1v1h-1zM5 23h1v1h-1zM9 23h1v1h-1zM41 23h1v1h-1zM11 24h1v1h-1zM41 25h1v1h-1zM71 25h1v1h-1zM98 25h1v1h-1zM41 26h1v1h-1zM73 27h1v1h-1zM97 27h1v1h-1zM69 29h1v1h-1zM72 29h1v1h-1zM65 30h1v1h-1zM77 30h1v1h-1zM35 31h1v1h-1zM6 33h1v1h-1zM75 33h1v1h-1zM98 33h1v1h-1zM36 34h1v1h-1zM73 34h2v1h-2zM5 40h1v1h-1zM37 40h1v1h-1zM99 40h1v1h-1zM70 41h1v1h-1zM68 42h1v1h-1zM74 42h1v1h-1zM5 43h1v1h-1zM12 43h1v1h-1zM69 44h1v1h-1zM72 45h1v1h-1zM3 46h1v1h-1zM67 48h1v1h-1zM10 49h1v1h-1zM3 50h1v1h-1zM11 52h1v1h-1zM68 52h1v1h-1zM47 53h1v1h-1zM66 53h1v1h-1zM76 53h1v1h-1zM6 54h1v1h-1zM13 54h1v1h-1zM37 57h1v1h-1zM72 57h1v1h-1zM10 58h1v1h-1zM71 58h1v1h-1zM15 59h1v1h-1zM69 60h1v1h-1zM75 61h1v1h-1zM99 62h1v1h-1zM2 64h1v1h-1zM9 64h1v1h-1zM76 64h1v1h-1zM70 67h1v1h-1zM67 68h1v1h-1zM5 73h1v1h-1zM39 73h1v1h-1zM7 75h1v1h-1zM39 75h1v1h-1zM71 75h1v1h-1zM40 76h1v1h-1zM73 77h1v1h-1zM71 78h1v1h-1zM7 79h1v1h-1zM73 79h1v1h-1zM70 80h1v1h-1zM71 81h1v1h-1zM78 81h1v1h-1zM39 83h1v1h-1zM71 84h1v1h-1zM30 85h1v1h-1zM64 85h1v1h-1zM98 85h1v1h-1zM35 87h1v1h-1zM38 87h1v1h-1zM98 88h1v1h-1zM70 89h1v1h-1zM10 90h1v1h-1zM39 91h1v1h-1zM9 93h1v1h-1zM64 94h1v1h-1zM98 94h1v1h-1zM73 96h1v1h-1zM8 98h1v1h-1zM38 99h1v1h-1zM70 99h1v1h-1zM96 99h1v1h-1z"/>
<path fill="rgb(211,211,211)" d="M6 3h1v1h-1zM37 3h1v1h-1zM11 6h1v1h-1zM43 12h1v1h-1zM5 15h1v1h-1zM68 17h1v1h-1zM69 18h1v1h-1zM73 19h1v1h-1zM99 19h1v1h-1zM70 20h1v1h-1zM65 22h1v1h-1zM8 26h1v1h-1zM68 27h1v1h-1zM14 32h1v1h-1zM76 34h1v1h-1zM35 35h1v1h-1zM70 38h1v1h-1zM38 40h1v1h-1zM9 45h1v1h-1zM6 49h1v1h-1zM32 50h1v1h-1zM8 51h1v1h-1zM98 53h1v1h-1zM39 57h1v1h-1zM4 58h1v1h-1zM9 59h1v1h-1zM9 62h1v1h-1zM69 62h1v1h-1zM40 65h1v1h-1zM38 66h1v1h-1zM99 67h1v1h-1zM65 74h1v1h-1zM75 76h1v1h-1zM47 78h1v1h-1zM14 80h1v1h-1zM70 81h1v1h-1zM84 84h1v1h-1zM6 85h1v1h-1zM99 87h1v1h-1zM34 89h1v1h-1zM13 92h1v1h-1zM16 96h1v1h-1zM40 96h1v1h-1z"/>
<path fill="rgb(219,219,219)" d="M39 0h1v1h-1zM13 1h1v1h-1zM75 1h1v1h-1zM11 2h1v1h-1zM70 2h1v1h-1zM40 7h1v1h-1zM99 8h1v1h-1zM77 9h1v1h-1zM40 11h1v1h-1zM7 15h1v1h-1zM6 25h1v1h-1zM71 26h1v1h-1zM67 37h1v1h-1zM93 37h1v1h-1zM40 41h1v1h-1zM36 43h1v1h-1zM69 43h1v1h-1zM7 50h1v1h-1zM47 55h1v1h-1zM74 56h1v1h-1zM11 59h1v1h-1zM72 63h1v1h-1zM74 64h1v1h-1zM73 66h1v1h-1zM12 67h1v1h-1zM13 70h1v1h-1zM69 70h1v1h-1zM71 71h1v1h-1zM74 80h1v1h-1zM42 95h1v1h-1z"/>
<path fill="rgb(227,227,227)" d="M7 9h1v1h-1zM41 18h1v1h-1zM40 21h1v1h-1zM39 23h1v1h-1zM42 26h1v1h-1zM40 28h1v1h-1zM1 30h1v1h-1zM5 33h1v1h-1zM9 40h1v1h-1zM67 42h1v1h-1zM12 62h1v1h-1zM73 73h1v1h-1zM40 75h1v1h-1zM9 78h1v1h-1zM40 80h1v1h-1zM48 81h1v1h-1zM10 85h1v1h-1zM99 91h1v1h-1z"/>
<path fill="rgb(235,235,235)" d="M71 1h1v1h-1zM43 28h1v1h-1zM37 31h1v1h-1zM39 34h1v1h-1zM10 47h1v1h-1zM40 60h1v1h-1zM65 60h1v1h-1zM6 83h1v1h-1z"/>
<path fill="rgb(243,243,243)" d="M72 24h1v1h-1z"/>
<path fill="rgb(251,251,251)" d="M69 12h1v1h-1zM11 72h1v1h-1z"/>
</g></g>
<rect x="74.5" y="83.5" width="320" height="138" fill="none" stroke="#000" stroke-width="1.05" shape-rendering="crispEdges"/>
<path d="M74.5 221V217M74.5 84V88" stroke="#4a4a4a" stroke-width="1" shape-rendering="crispEdges"/>
<text x="70.71" y="236.00" font-size="12" text-anchor="start" textLength="7.55" lengthAdjust="spacingAndGlyphs" >0</text>
<path d="M138.5 221V217M138.5 84V88" stroke="#4a4a4a" stroke-width="1" shape-rendering="crispEdges"/>
<text x="130.50" y="236.00" font-size="12" text-anchor="start" textLength="15.85" lengthAdjust="spacingAndGlyphs" >20</text>
<path d="M202.5 221V217M202.5 84V88" stroke="#4a4a4a" stroke-width="1" shape-rendering="crispEdges"/>
<text x="194.73" y="236.00" font-size="12" text-anchor="start" textLength="15.78" lengthAdjust="spacingAndGlyphs" >40</text>
<path d="M266.5 221V217M266.5 84V88" stroke="#4a4a4a" stroke-width="1" shape-rendering="crispEdges"/>
<text x="258.48" y="236.00" font-size="12" text-anchor="start" textLength="15.89" lengthAdjust="spacingAndGlyphs" >60</text>
<path d="M330.5 221V217M330.5 84V88" stroke="#4a4a4a" stroke-width="1" shape-rendering="crispEdges"/>
<text x="322.58" y="236.00" font-size="12" text-anchor="start" textLength="15.81" lengthAdjust="spacingAndGlyphs" >80</text>
<path d="M394.5 221V217M394.5 84V88" stroke="#4a4a4a" stroke-width="1" shape-rendering="crispEdges"/>
<text x="382.30" y="236.00" font-size="12" text-anchor="start" textLength="23.87" lengthAdjust="spacingAndGlyphs" >100</text>
<path d="M75 221.5H79" stroke="#4a4a4a" stroke-width="1" shape-rendering="crispEdges"/>
<text x="62.27" y="225.00" font-size="12" text-anchor="start" textLength="7.55" lengthAdjust="spacingAndGlyphs" >0</text>
<path d="M75 193.5H79" stroke="#4a4a4a" stroke-width="1" shape-rendering="crispEdges"/>
<text x="54.01" y="197.00" font-size="12" text-anchor="start" textLength="15.85" lengthAdjust="spacingAndGlyphs" >20</text>
<path d="M75 166.5H79" stroke="#4a4a4a" stroke-width="1" shape-rendering="crispEdges"/>
<text x="54.09" y="170.00" font-size="12" text-anchor="start" textLength="15.78" lengthAdjust="spacingAndGlyphs" >40</text>
<path d="M75 138.5H79" stroke="#4a4a4a" stroke-width="1" shape-rendering="crispEdges"/>
<text x="53.98" y="142.00" font-size="12" text-anchor="start" textLength="15.89" lengthAdjust="spacingAndGlyphs" >60</text>
<path d="M75 111.5H79" stroke="#4a4a4a" stroke-width="1" shape-rendering="crispEdges"/>
<text x="54.06" y="115.00" font-size="12" text-anchor="start" textLength="15.81" lengthAdjust="spacingAndGlyphs" >80</text>
<path d="M75 83.5H79" stroke="#4a4a4a" stroke-width="1" shape-rendering="crispEdges"/>
<text x="45.98" y="87.00" font-size="12" text-anchor="start" textLength="23.87" lengthAdjust="spacingAndGlyphs" >100</text>
<text x="37.20" y="153.80" font-size="12" text-anchor="middle" textLength="30.92" lengthAdjust="spacingAndGlyphs" transform="rotate(-90 37.2 153.8)">Rows</text>
<g clip-path="url(#p1)">
<text x="206.52" y="254.30" font-size="12" text-anchor="start" textLength="55.75" lengthAdjust="spacingAndGlyphs" >Columns</text>
</g>
<rect x="491.5" y="93.5" width="24" height="127" fill="url(#cbar)" stroke="#000" stroke-width="1.05" shape-rendering="crispEdges"/>
<text x="456.71" y="85.00" font-size="12" text-anchor="start" textLength="58.69" lengthAdjust="spacingAndGlyphs" >4.343044</text>
<path d="M481 153.5H491M481 223.5H491" stroke="#000" stroke-width="1.2" shape-rendering="crispEdges"/>
<text x="447.00" y="157.20" font-size="9" text-anchor="start" textLength="5.30" lengthAdjust="spacingAndGlyphs" >0</text>
<g clip-path="url(#p1)">
<text x="447.00" y="228.60" font-size="9" text-anchor="start" textLength="9.50" lengthAdjust="spacingAndGlyphs" >-5</text>
</g>
<rect x="448" y="226.2" width="70" height="12" fill="#fff"/>
<text x="452.35" y="236.40" font-size="12" text-anchor="start" textLength="63.57" lengthAdjust="spacingAndGlyphs" >-4.742048</text>
<text x="9.90" y="260.00" font-size="12" text-anchor="start" font-weight="bold" textLength="12.80" lengthAdjust="spacingAndGlyphs" stroke="#000" stroke-width="0.3">X:</text>
<text x="30.60" y="260.00" font-size="12" text-anchor="start" textLength="58.80" lengthAdjust="spacingAndGlyphs" >56.50273</text>
<text x="176.50" y="260.00" font-size="12" text-anchor="start" font-weight="bold" textLength="9.60" lengthAdjust="spacingAndGlyphs" stroke="#000" stroke-width="0.3">Y:</text>
<text x="194.20" y="260.00" font-size="12" text-anchor="start" textLength="59.40" lengthAdjust="spacingAndGlyphs" >99.56522</text>
<text x="340.40" y="260.00" font-size="12" text-anchor="start" font-weight="bold" textLength="37.50" lengthAdjust="spacingAndGlyphs" stroke="#000" stroke-width="0.3">Data:</text>
<text x="385.90" y="260.00" font-size="12" text-anchor="start" textLength="62.80" lengthAdjust="spacingAndGlyphs" >-1.592009</text>
<path d="M532.3 140.4H540.8M537.5999999999999 137.6L541.0 140.4L537.5999999999999 143.20000000000002" stroke="#000" stroke-width="1.1" fill="none"/>
<path d="M541.3 154.4H532.8M536.0 151.6L532.5999999999999 154.4L536.0 157.20000000000002" stroke="#000" stroke-width="1.1" fill="none"/>
<path d="M947.2 140.4H955.7M952.5 137.6L955.9000000000001 140.4L952.5 143.20000000000002" stroke="#000" stroke-width="1.1" fill="none"/>
<path d="M956.2 154.4H947.7M950.9000000000001 151.6L947.5 154.4L950.9000000000001 157.20000000000002" stroke="#000" stroke-width="1.1" fill="none"/>
<path d="M262.54999999999995 271V279.7M259.9 276.5L262.54999999999995 279.9L265.2 276.5" stroke="#000" stroke-width="1.1" fill="none"/>
<path d="M272.54999999999995 280V271.3M269.9 274.5L272.54999999999995 271.1L275.2 274.5" stroke="#000" stroke-width="1.1" fill="none"/>
<path d="M262.54999999999995 459V467.7M259.9 464.5L262.54999999999995 467.9L265.2 464.5" stroke="#000" stroke-width="1.1" fill="none"/>
<path d="M272.54999999999995 468V459.3M269.9 462.5L272.54999999999995 459.1L275.2 462.5" stroke="#000" stroke-width="1.1" fill="none"/>
<path d="M734.6 374.0L740.8000000000001 367.79999999999995M738.0 367.7H740.9V370.59999999999997" stroke="#000" stroke-width="1.2" fill="none"/>
<path d="M750.6 367.7L745.0 373.29999999999995M747.7 373.7H744.8000000000001V370.79999999999995" stroke="#000" stroke-width="1.2" fill="none"/>
<path d="M1106 534.6L1112.2 528.4M1109.4 528.3H1112.3V531.2" stroke="#000" stroke-width="1.2" fill="none"/>
<path d="M1122 528.3L1116.4 533.9M1119.1 534.3H1116.2V531.4" stroke="#000" stroke-width="1.2" fill="none"/>
<rect x="547" y="65" width="393" height="178" fill="#fff"/>
<path d="M632.2 84.7L692.5 86.4L672.6 88.2L680.8 89.4L664.4 90.8L676.1 91.7L667.9 94.6L646.8 97.6L679.6 98.7L676.1 100.8L666.7 102.2L682.6 104.4L663.2 105.2L677.3 106.7L645.7 109.3L677.3 110.7L660.9 111.9L670.3 113.4L657.4 114.9L670.3 116.1L652.7 117.5L665.6 119.2L690.2 121.2L637.5 122.7L691.3 124.3L644.5 125.4L675.5 126.6L636.3 128.0L652.7 131.5L677.3 133.3L667.9 134.4L678.5 136.0L664.4 137.4L679.0 138.5L635.1 140.3L669.7 141.5L666.7 144.2L680.8 146.2L692.5 149.2L655.6 152.4L689.6 154.8L655.6 156.2L684.3 158.8L607.0 161.8L662.1 163.0L628.7 164.2L669.1 166.7L656.2 168.1L690.7 170.8L643.3 173.5L665.6 174.9L646.3 176.3L659.7 177.3L633.4 179.0L684.3 181.7L634.5 182.9L690.2 185.5L667.3 186.9L674.9 188.0L650.4 189.3L696.0 191.1L641.6 193.4L671.4 196.0L658.0 197.8L682.6 200.5L629.3 202.8L678.5 206.5L653.3 208.3L665.6 209.5L655.0 210.6L679.6 212.2L647.4 215.0L673.8 215.9" stroke="#00ff00" stroke-width="1.15" fill="none" stroke-linejoin="round" clip-path="url(#c4)"/>
<path d="M756.1 84.1L766.6 86.8L758.4 88.8L761.9 92.3L753.7 96.2L763.1 94.6L760.8 98.1L765.4 101.1L758.4 102.8L753.7 105.2L761.9 108.7L755.5 110.7L765.4 114.0L757.2 115.1L766.6 117.7L755.5 120.4L764.9 122.2L756.7 125.7L763.7 130.4L758.4 133.9L761.9 137.4L757.2 140.9L766.0 144.2L760.8 147.3L761.3 148.6L765.4 151.5L757.8 156.0L764.3 157.4L756.7 161.5L766.0 159.9L760.8 165.6L768.4 170.8L759.6 173.2L751.4 175.9L762.5 177.9L753.7 179.6L763.1 182.0L753.1 183.7L761.9 186.1L754.9 189.0L766.0 192.3L756.7 194.3L762.5 196.0L757.2 198.4L763.1 200.7L758.4 205.4L763.7 206.5L760.8 210.1L763.1 213.0L756.7 215.7" stroke="#0000ff" stroke-width="1.15" fill="none" stroke-linejoin="round" clip-path="url(#c4)"/>
<path d="M846.9 84.4L857.5 86.8L859.8 88.2L875.6 89.4L839.3 91.9L865.7 93.8L844.0 96.2L855.1 97.3L886.2 98.7L851.6 100.5L900.8 102.8L857.5 105.2L854.0 108.1L854.0 110.4L866.8 113.4L852.8 116.1L865.1 118.1L856.3 119.8L873.9 121.2L846.9 122.7L874.4 124.3L843.4 125.4L851.6 127.4L863.3 129.8L845.8 132.1L880.9 133.6L838.7 136.2L855.1 138.5L841.1 140.3L870.9 144.2L855.1 145.3L882.6 146.7L838.1 149.4L864.5 151.3L826.4 154.8L878.5 157.4L852.2 159.7L856.3 162.6L887.3 164.2L836.4 165.6L873.3 168.1L858.1 169.7L866.8 170.8L849.3 172.6L878.0 174.9L847.5 176.1L865.7 177.5L836.4 180.2L850.4 182.9L841.7 184.5L844.6 186.6L843.4 188.4L887.3 190.7L842.2 192.3L855.1 194.8L859.2 196.2L839.9 197.8L887.9 198.9L849.3 200.1L876.8 201.6L844.0 205.4L882.6 206.8L845.8 208.3L873.3 209.5L845.2 212.2L868.6 213.6L834.6 215.0" stroke="#ff0000" stroke-width="1.15" fill="none" stroke-linejoin="round" clip-path="url(#c4)"/>
<rect x="606.5" y="83.5" width="295" height="133" fill="none" stroke="#000" stroke-width="1.05" shape-rendering="crispEdges"/>
<path d="M630.5 216V212M630.5 84V88" stroke="#4a4a4a" stroke-width="1" shape-rendering="crispEdges"/>
<text x="621.38" y="231.00" font-size="12" text-anchor="start" textLength="18.08" lengthAdjust="spacingAndGlyphs" >−4</text>
<path d="M695.5 216V212M695.5 84V88" stroke="#4a4a4a" stroke-width="1" shape-rendering="crispEdges"/>
<text x="686.60" y="231.00" font-size="12" text-anchor="start" textLength="17.88" lengthAdjust="spacingAndGlyphs" >−2</text>
<path d="M760.5 216V212M760.5 84V88" stroke="#4a4a4a" stroke-width="1" shape-rendering="crispEdges"/>
<text x="756.69" y="231.00" font-size="12" text-anchor="start" textLength="7.55" lengthAdjust="spacingAndGlyphs" >0</text>
<path d="M825.5 216V212M825.5 84V88" stroke="#4a4a4a" stroke-width="1" shape-rendering="crispEdges"/>
<text x="821.78" y="231.00" font-size="12" text-anchor="start" textLength="7.30" lengthAdjust="spacingAndGlyphs" >2</text>
<path d="M890.5 216V212M890.5 84V88" stroke="#4a4a4a" stroke-width="1" shape-rendering="crispEdges"/>
<text x="886.64" y="231.00" font-size="12" text-anchor="start" textLength="7.53" lengthAdjust="spacingAndGlyphs" >4</text>
<path d="M607 216.5H611" stroke="#4a4a4a" stroke-width="1" shape-rendering="crispEdges"/>
<text x="593.87" y="219.00" font-size="12" text-anchor="start" textLength="7.55" lengthAdjust="spacingAndGlyphs" >0</text>
<path d="M607 189.5H611" stroke="#4a4a4a" stroke-width="1" shape-rendering="crispEdges"/>
<text x="585.61" y="192.00" font-size="12" text-anchor="start" textLength="15.85" lengthAdjust="spacingAndGlyphs" >20</text>
<path d="M607 163.5H611" stroke="#4a4a4a" stroke-width="1" shape-rendering="crispEdges"/>
<text x="585.69" y="166.00" font-size="12" text-anchor="start" textLength="15.78" lengthAdjust="spacingAndGlyphs" >40</text>
<path d="M607 136.5H611" stroke="#4a4a4a" stroke-width="1" shape-rendering="crispEdges"/>
<text x="585.58" y="139.00" font-size="12" text-anchor="start" textLength="15.89" lengthAdjust="spacingAndGlyphs" >60</text>
<path d="M607 110.5H611" stroke="#4a4a4a" stroke-width="1" shape-rendering="crispEdges"/>
<text x="585.66" y="113.00" font-size="12" text-anchor="start" textLength="15.81" lengthAdjust="spacingAndGlyphs" >80</text>
<path d="M607 83.5H611" stroke="#4a4a4a" stroke-width="1" shape-rendering="crispEdges"/>
<text x="577.58" y="86.00" font-size="12" text-anchor="start" textLength="23.87" lengthAdjust="spacingAndGlyphs" >100</text>
<text x="568.60" y="149.90" font-size="12" text-anchor="middle" textLength="7.91" lengthAdjust="spacingAndGlyphs" transform="rotate(-90 568.6 149.9)">Y</text>
<g clip-path="url(#p4)">
<text x="749.71" y="249.30" font-size="12" text-anchor="start" textLength="8.56" lengthAdjust="spacingAndGlyphs" >X</text>
</g>
<text x="555.00" y="257.50" font-size="12" text-anchor="start" textLength="46.20" lengthAdjust="spacingAndGlyphs" >Options</text>
<path d="M602.5 256H607.5L605 258.8Z" fill="#000"/>
<text x="616.30" y="257.50" font-size="12" text-anchor="start" font-weight="bold" textLength="11.50" lengthAdjust="spacingAndGlyphs" stroke="#000" stroke-width="0.3">X:</text>
<text x="637.00" y="257.50" font-size="12" text-anchor="start" textLength="62.50" lengthAdjust="spacingAndGlyphs" >-3.877462</text>
<text x="782.40" y="257.50" font-size="12" text-anchor="start" font-weight="bold" textLength="10.20" lengthAdjust="spacingAndGlyphs" stroke="#000" stroke-width="0.3">Y:</text>
<text x="799.90" y="257.50" font-size="12" text-anchor="start" textLength="58.50" lengthAdjust="spacingAndGlyphs" >10.71161</text>
<rect x="10" y="323" width="515" height="108" fill="#fff"/>
<path d="M87.7 351.1L94.8 345.4L98.9 348.8L102.8 341.7L106.8 344.6L110.3 343.3L114.4 339.3L118.1 343.3L121.9 335.3L126.0 341.3L129.7 338.7L133.9 342.8L137.4 348.8L141.0 350.3L145.2 338.7L149.0 340.8L152.8 356.4L156.5 349.3L160.6 355.9L164.4 350.8L168.1 357.9L172.0 361.9L175.8 360.6L179.9 363.9L183.8 359.4L187.5 360.9L195.1 349.6L199.3 352.6L202.9 348.5L207.1 354.1L210.9 354.1L214.6 346.3L218.4 347.3L222.2 341.3L225.9 348.4L229.7 343.6L234.2 336.3L238.0 337.5L241.7 342.8L245.5 344.6L249.3 345.4L253.0 343.6L257.1 340.5L261.0 348.5L264.6 343.6L268.9 348.8L272.6 352.6L276.4 360.1L280.7 352.6L284.3 352.9L288.3 353.3L291.9 353.3L295.8 358.3L299.8 359.4L303.3 359.4L306.9 364.3L310.8 358.3L314.5 357.4L318.7 349.3L322.9 354.4L327.0 346.6L330.7 353.8L334.5 343.6L338.3 346.9L342.0 349.9L345.8 341.7L349.5 340.8L353.3 337.2L357.5 341.7L361.6 344.3L365.4 348.4L369.1 345.1L373.0 338.3L376.8 346.3L380.5 337.2L384.3 350.8L388.1 351.1L392.3 345.3L396.3 353.8L400.1 354.4L403.9 356.8L407.6 363.1L411.4 359.3L415.1 352.9L419.4 361.6L423.4 356.3L427.2 351.4L430.9 360.9L434.7 353.3L438.9 360.5L442.7 349.3L446.7 354.1L450.5 350.0L454.3 352.3L458.0 343.2L461.8 349.3L465.6 349.0L469.6 339.3" stroke="#ff0000" stroke-width="1.15" fill="none" stroke-linejoin="round" clip-path="url(#c2)"/>
<path d="M87.7 373.4L91.0 369.9L94.8 368.0L101.6 366.1L106.8 364.3L112.1 363.4L118.1 362.1L125.7 364.6L130.2 364.9L136.2 366.9L141.5 369.5L145.2 370.7L151.3 373.7L157.3 377.1L163.3 378.5L168.6 380.5L172.0 381.7L176.1 379.4L179.9 381.5L187.5 380.5L191.3 380.5L195.1 377.9L199.6 376.4L202.9 374.9L207.1 373.7L210.9 371.0L214.6 370.4L218.4 366.6L222.2 365.8L225.9 366.4L230.5 363.9L234.2 362.1L238.0 363.1L241.7 363.4L245.5 364.3L249.3 363.9L253.0 365.4L256.8 367.7L261.0 368.9L264.6 370.4L268.9 372.9L272.6 374.9L276.4 377.0L281.0 377.9L288.3 380.5L294.6 380.9L300.6 381.2L306.9 380.2L311.1 379.1L314.9 379.1L318.7 376.7L322.9 374.9L327.0 372.9L330.7 372.6L335.2 369.9L341.3 368.4L345.8 365.8L349.5 365.4L353.3 363.4L357.5 363.9L361.6 364.0L365.4 365.7L371.4 364.9L374.5 364.6L379.8 366.9L384.7 369.9L388.1 370.6L392.6 373.6L396.3 375.4L400.1 376.4L403.9 377.4L407.6 379.7L415.1 379.2L419.7 380.9L423.4 380.1L430.2 381.9L434.7 381.5L439.2 377.9L443.0 374.7L446.7 373.9L450.5 372.4L454.3 372.1L458.8 368.8L463.3 367.3L466.3 365.8L469.6 365.4" stroke="#0000ff" stroke-width="1.15" fill="none" stroke-linejoin="round" clip-path="url(#c2)"/>
<path d="M87.7 398.5L91.0 391.0L94.8 398.1L98.9 391.4L102.8 389.5L106.8 383.5L110.6 386.9L114.4 383.0L118.1 380.2L121.9 382.0L126.0 388.7L133.2 387.5L137.4 381.5L141.5 391.0L145.2 397.8L149.0 393.3L152.8 395.5L156.8 408.3L160.6 399.3L164.4 397.5L168.1 397.5L172.0 407.6L176.1 396.0L179.9 408.3L183.8 414.6L187.5 406.8L195.1 400.5L199.3 402.3L202.9 395.5L207.1 394.0L210.9 389.9L214.6 395.1L218.4 386.9L222.2 386.5L225.9 385.0L229.7 385.4L234.2 382.4L238.0 384.2L241.7 385.4L245.5 382.4L249.3 389.5L253.0 389.9L257.1 390.5L261.0 392.5L264.6 390.2L268.9 396.3L272.6 395.5L276.4 395.5L280.3 394.5L284.3 402.3L288.3 400.0L291.9 401.5L295.8 403.8L299.8 406.4L303.3 403.5L306.9 404.1L310.8 403.5L314.9 397.0L318.7 405.6L322.9 392.5L327.0 393.6L330.7 397.5L334.5 388.4L338.3 390.2L342.0 393.6L345.8 394.5L349.5 389.9L353.3 387.5L357.5 387.2L361.6 384.5L365.4 392.5L369.1 388.0L373.0 385.7L380.5 395.5L384.7 387.2L388.5 394.4L392.6 390.2L396.3 396.2L400.1 397.0L403.9 396.5L407.6 401.5L411.8 398.5L415.1 402.2L419.4 399.5L423.4 404.5L427.2 397.4L431.7 402.5L438.9 406.7L442.7 399.5L446.4 398.5L450.5 400.7L458.0 388.4L461.8 396.2L466.3 387.2L469.6 388.7" stroke="#00ff00" stroke-width="1.15" fill="none" stroke-linejoin="round" clip-path="url(#c2)"/>
<rect x="87.5" y="334.5" width="387" height="81" fill="none" stroke="#000" stroke-width="1.05" shape-rendering="crispEdges"/>
<path d="M87.5 415V411M87.5 335V339" stroke="#4a4a4a" stroke-width="1" shape-rendering="crispEdges"/>
<text x="83.71" y="429.00" font-size="12" text-anchor="start" textLength="7.55" lengthAdjust="spacingAndGlyphs" >0</text>
<path d="M164.5 415V411M164.5 335V339" stroke="#4a4a4a" stroke-width="1" shape-rendering="crispEdges"/>
<text x="156.90" y="429.00" font-size="12" text-anchor="start" textLength="15.85" lengthAdjust="spacingAndGlyphs" >20</text>
<path d="M242.5 415V411M242.5 335V339" stroke="#4a4a4a" stroke-width="1" shape-rendering="crispEdges"/>
<text x="234.53" y="429.00" font-size="12" text-anchor="start" textLength="15.78" lengthAdjust="spacingAndGlyphs" >40</text>
<path d="M319.5 415V411M319.5 335V339" stroke="#4a4a4a" stroke-width="1" shape-rendering="crispEdges"/>
<text x="311.68" y="429.00" font-size="12" text-anchor="start" textLength="15.89" lengthAdjust="spacingAndGlyphs" >60</text>
<path d="M397.5 415V411M397.5 335V339" stroke="#4a4a4a" stroke-width="1" shape-rendering="crispEdges"/>
<text x="389.18" y="429.00" font-size="12" text-anchor="start" textLength="15.81" lengthAdjust="spacingAndGlyphs" >80</text>
<path d="M474.5 415V411M474.5 335V339" stroke="#4a4a4a" stroke-width="1" shape-rendering="crispEdges"/>
<text x="462.30" y="429.00" font-size="12" text-anchor="start" textLength="23.87" lengthAdjust="spacingAndGlyphs" >100</text>
<path d="M88 408.5H92" stroke="#4a4a4a" stroke-width="1" shape-rendering="crispEdges"/>
<text x="66.15" y="410.90" font-size="12" text-anchor="start" textLength="18.08" lengthAdjust="spacingAndGlyphs" >−4</text>
<path d="M88 391.5H92" stroke="#4a4a4a" stroke-width="1" shape-rendering="crispEdges"/>
<text x="66.71" y="393.90" font-size="12" text-anchor="start" textLength="17.88" lengthAdjust="spacingAndGlyphs" >−2</text>
<path d="M88 373.5H92" stroke="#4a4a4a" stroke-width="1" shape-rendering="crispEdges"/>
<text x="76.77" y="375.90" font-size="12" text-anchor="start" textLength="7.55" lengthAdjust="spacingAndGlyphs" >0</text>
<path d="M88 355.5H92" stroke="#4a4a4a" stroke-width="1" shape-rendering="crispEdges"/>
<text x="77.17" y="357.90" font-size="12" text-anchor="start" textLength="7.30" lengthAdjust="spacingAndGlyphs" >2</text>
<path d="M88 337.5H92" stroke="#4a4a4a" stroke-width="1" shape-rendering="crispEdges"/>
<text x="76.66" y="339.90" font-size="12" text-anchor="start" textLength="7.53" lengthAdjust="spacingAndGlyphs" >4</text>
<text x="56.00" y="374.00" font-size="12" text-anchor="middle" textLength="7.91" lengthAdjust="spacingAndGlyphs" transform="rotate(-90 56 374)">Y</text>
<text x="17.60" y="444.80" font-size="12" text-anchor="start" textLength="46.90" lengthAdjust="spacingAndGlyphs" >Options</text>
<path d="M65 443.8H70.2L67.6 446.8Z" fill="#000"/>
<text x="79.20" y="444.80" font-size="12" text-anchor="start" font-weight="bold" textLength="12.30" lengthAdjust="spacingAndGlyphs" stroke="#000" stroke-width="0.3">X:</text>
<text x="100.10" y="444.80" font-size="12" text-anchor="start" textLength="23.00" lengthAdjust="spacingAndGlyphs" >------</text>
<text x="245.30" y="444.80" font-size="12" text-anchor="start" font-weight="bold" textLength="9.80" lengthAdjust="spacingAndGlyphs" stroke="#000" stroke-width="0.3">Y:</text>
<text x="263.80" y="444.80" font-size="12" text-anchor="start" textLength="23.40" lengthAdjust="spacingAndGlyphs" >------</text>
<rect x="10" y="477" width="515" height="108" fill="#fff"/>
<path d="M87.7 531.0L91.0 535.2L94.8 542.0L98.9 532.2L102.8 539.4L106.8 533.7L110.3 525.4L114.4 529.2L118.1 545.7L121.9 536.0L125.7 537.9L129.4 529.2L133.5 538.2L137.4 554.8L141.5 540.5L145.2 514.9L149.0 527.7L152.8 556.3L156.5 530.7L160.3 528.9L164.1 529.6L168.1 539.7L172.0 559.6L175.8 550.3L179.9 510.8L183.6 515.6L183.8 515.9L187.5 508.8L191.7 519.4L195.4 505.1L199.3 523.2L202.9 541.2L206.8 539.4L210.9 537.0L214.6 545.4L218.4 543.9L222.5 529.2L226.4 542.7L230.2 519.4L233.9 525.0L237.7 537.0L241.7 535.2L245.5 569.1L249.3 523.5L253.0 526.5L257.1 526.5L261.0 530.7L264.6 520.4L268.9 516.4L272.6 518.6L276.4 548.8L276.5 548.8L280.3 522.4L284.3 490.3L288.3 536.0L291.9 549.5L295.8 521.7L299.8 539.7L303.6 534.0L307.4 557.5L311.1 536.4L314.9 551.8L319.0 519.8L322.9 534.5L326.7 506.3L330.7 533.4L334.5 532.5L338.3 556.6L342.0 541.2L345.8 501.8L349.5 514.4L353.6 489.3L357.5 500.6L361.6 526.9L365.4 536.0L369.1 537.5L372.9 520.9L373.0 520.9L376.8 546.0L380.5 520.4L384.7 534.4L388.8 538.9L392.6 534.4L396.3 548.0L400.1 520.1L403.9 544.9L407.6 543.9L411.8 556.5L415.4 499.0L419.4 536.4L423.4 496.8L427.2 537.9L430.9 524.6L435.0 544.9L438.9 514.9L443.0 511.8L446.7 538.5L450.5 537.4L454.3 550.2L458.0 528.4L461.8 533.7L465.6 566.0L469.6 522.1" stroke="#0000ff" stroke-width="1.15" fill="none" stroke-linejoin="round" clip-path="url(#c3)"/>
<rect x="87.5" y="488.5" width="387" height="81" fill="none" stroke="#000" stroke-width="1.05" shape-rendering="crispEdges"/>
<path d="M87.5 569V565M87.5 489V493" stroke="#4a4a4a" stroke-width="1" shape-rendering="crispEdges"/>
<text x="83.71" y="582.50" font-size="12" text-anchor="start" textLength="7.55" lengthAdjust="spacingAndGlyphs" >0</text>
<path d="M164.5 569V565M164.5 489V493" stroke="#4a4a4a" stroke-width="1" shape-rendering="crispEdges"/>
<text x="156.90" y="582.50" font-size="12" text-anchor="start" textLength="15.85" lengthAdjust="spacingAndGlyphs" >20</text>
<path d="M242.5 569V565M242.5 489V493" stroke="#4a4a4a" stroke-width="1" shape-rendering="crispEdges"/>
<text x="234.53" y="582.50" font-size="12" text-anchor="start" textLength="15.78" lengthAdjust="spacingAndGlyphs" >40</text>
<path d="M319.5 569V565M319.5 489V493" stroke="#4a4a4a" stroke-width="1" shape-rendering="crispEdges"/>
<text x="311.68" y="582.50" font-size="12" text-anchor="start" textLength="15.89" lengthAdjust="spacingAndGlyphs" >60</text>
<path d="M397.5 569V565M397.5 489V493" stroke="#4a4a4a" stroke-width="1" shape-rendering="crispEdges"/>
<text x="389.18" y="582.50" font-size="12" text-anchor="start" textLength="15.81" lengthAdjust="spacingAndGlyphs" >80</text>
<path d="M474.5 569V565M474.5 489V493" stroke="#4a4a4a" stroke-width="1" shape-rendering="crispEdges"/>
<text x="462.30" y="582.50" font-size="12" text-anchor="start" textLength="23.87" lengthAdjust="spacingAndGlyphs" >100</text>
<path d="M88 563.5H92" stroke="#4a4a4a" stroke-width="1" shape-rendering="crispEdges"/>
<text x="55.39" y="566.00" font-size="12" text-anchor="start" textLength="27.81" lengthAdjust="spacingAndGlyphs" >0.85</text>
<path d="M88 552.5H92" stroke="#4a4a4a" stroke-width="1" shape-rendering="crispEdges"/>
<text x="55.12" y="555.00" font-size="12" text-anchor="start" textLength="28.04" lengthAdjust="spacingAndGlyphs" >0.90</text>
<path d="M88 541.5H92" stroke="#4a4a4a" stroke-width="1" shape-rendering="crispEdges"/>
<text x="55.39" y="544.00" font-size="12" text-anchor="start" textLength="27.81" lengthAdjust="spacingAndGlyphs" >0.95</text>
<path d="M88 530.5H92" stroke="#4a4a4a" stroke-width="1" shape-rendering="crispEdges"/>
<text x="55.20" y="533.00" font-size="12" text-anchor="start" textLength="27.96" lengthAdjust="spacingAndGlyphs" >1.00</text>
<path d="M88 519.5H92" stroke="#4a4a4a" stroke-width="1" shape-rendering="crispEdges"/>
<text x="55.47" y="522.00" font-size="12" text-anchor="start" textLength="27.72" lengthAdjust="spacingAndGlyphs" >1.05</text>
<path d="M88 508.5H92" stroke="#4a4a4a" stroke-width="1" shape-rendering="crispEdges"/>
<text x="55.20" y="511.00" font-size="12" text-anchor="start" textLength="27.96" lengthAdjust="spacingAndGlyphs" >1.10</text>
<path d="M88 498.5H92" stroke="#4a4a4a" stroke-width="1" shape-rendering="crispEdges"/>
<text x="55.47" y="501.00" font-size="12" text-anchor="start" textLength="27.72" lengthAdjust="spacingAndGlyphs" >1.15</text>
<text x="45.30" y="527.80" font-size="12" text-anchor="middle" textLength="7.91" lengthAdjust="spacingAndGlyphs" transform="rotate(-90 45.3 527.8)">Y</text>
<rect x="962" y="31" width="305" height="232" fill="#fff"/>
<path d="M1240.1 228.5L1152.0 226.8L1253.3 225.0L1162.0 223.3L1254.1 221.5L1250.3 219.8L1252.1 218.1L1225.6 216.3L1224.8 214.6L1239.9 212.8L1254.0 211.1L1251.0 209.4L1208.7 207.6L1245.5 205.9L1252.7 204.1L1187.3 202.4L1248.1 200.7L1252.9 198.9L1254.0 197.2L1186.0 195.4L1250.5 193.7L1167.8 192.0L1246.5 190.2L1152.0 188.5L1256.6 186.7L1257.0 185.0L1139.2 183.3L1246.4 181.5L1250.6 179.8L1245.4 178.0L1252.7 176.3L1247.2 174.6L1244.1 172.8L1205.5 171.1L1243.9 169.3L1244.1 167.6L1245.8 165.9L1240.5 164.1L1252.7 162.4L1247.3 160.6L1247.4 158.9L1224.8 157.2L1256.9 155.4L1254.5 153.7L1239.3 151.9L1254.7 150.2L1112.6 148.5L1249.4 146.7L1245.6 145.0L1257.1 143.2L1245.4 141.5L1186.3 139.8L1255.2 138.0L1214.2 136.3L1248.3 134.5L1242.8 132.8L1163.5 131.1L1240.8 129.3L1189.3 127.6L1247.2 125.8L1240.1 124.1L1239.5 122.4L1239.3 120.6L1240.7 118.9L1255.2 117.1L1241.1 115.4L1252.3 113.7L1255.7 111.9L1252.4 110.2L1201.7 108.4L1249.2 106.7L1217.0 105.0L1249.9 103.2L1255.8 101.5L1243.6 99.7L1250.4 98.0L1209.7 96.3L1252.6 94.5L1242.0 92.8L1210.4 91.0L1253.8 89.3L1253.8 87.6L1192.8 85.8L1251.5 84.1L1251.4 82.3L1241.6 80.6L1242.7 78.9L1243.1 77.1L1214.4 75.4L1256.7 73.6L1253.9 71.9L1245.3 70.2L1242.6 68.4L1231.5 66.7L1247.9 64.9L1166.9 63.2L1253.5 61.5L1244.6 59.7L1255.7 58.0L1202.5 56.2" stroke="#0000ff" stroke-width="1.15" fill="none" stroke-linejoin="round" clip-path="url(#c5)"/>
<rect x="1008.5" y="54.5" width="229" height="174" fill="none" stroke="#000" stroke-width="1.05" shape-rendering="crispEdges"/>
<path d="M1023.5 228V224M1023.5 55V59" stroke="#4a4a4a" stroke-width="1" shape-rendering="crispEdges"/>
<text x="1009.55" y="242.50" font-size="12" text-anchor="start" textLength="27.81" lengthAdjust="spacingAndGlyphs" >0.85</text>
<path d="M1054.5 228V224M1054.5 55V59" stroke="#4a4a4a" stroke-width="1" shape-rendering="crispEdges"/>
<text x="1040.30" y="242.50" font-size="12" text-anchor="start" textLength="28.04" lengthAdjust="spacingAndGlyphs" >0.90</text>
<path d="M1085.5 228V224M1085.5 55V59" stroke="#4a4a4a" stroke-width="1" shape-rendering="crispEdges"/>
<text x="1071.31" y="242.50" font-size="12" text-anchor="start" textLength="27.81" lengthAdjust="spacingAndGlyphs" >0.95</text>
<path d="M1116.5 228V224M1116.5 55V59" stroke="#4a4a4a" stroke-width="1" shape-rendering="crispEdges"/>
<text x="1101.84" y="242.50" font-size="12" text-anchor="start" textLength="27.96" lengthAdjust="spacingAndGlyphs" >1.00</text>
<path d="M1146.5 228V224M1146.5 55V59" stroke="#4a4a4a" stroke-width="1" shape-rendering="crispEdges"/>
<text x="1132.86" y="242.50" font-size="12" text-anchor="start" textLength="27.72" lengthAdjust="spacingAndGlyphs" >1.05</text>
<path d="M1177.5 228V224M1177.5 55V59" stroke="#4a4a4a" stroke-width="1" shape-rendering="crispEdges"/>
<text x="1163.60" y="242.50" font-size="12" text-anchor="start" textLength="27.96" lengthAdjust="spacingAndGlyphs" >1.10</text>
<path d="M1208.5 228V224M1208.5 55V59" stroke="#4a4a4a" stroke-width="1" shape-rendering="crispEdges"/>
<text x="1194.62" y="242.50" font-size="12" text-anchor="start" textLength="27.72" lengthAdjust="spacingAndGlyphs" >1.15</text>
<path d="M1009 228.5H1013" stroke="#4a4a4a" stroke-width="1" shape-rendering="crispEdges"/>
<text x="995.87" y="232.00" font-size="12" text-anchor="start" textLength="7.55" lengthAdjust="spacingAndGlyphs" >0</text>
<path d="M1009 193.5H1013" stroke="#4a4a4a" stroke-width="1" shape-rendering="crispEdges"/>
<text x="987.61" y="197.00" font-size="12" text-anchor="start" textLength="15.85" lengthAdjust="spacingAndGlyphs" >20</text>
<path d="M1009 158.5H1013" stroke="#4a4a4a" stroke-width="1" shape-rendering="crispEdges"/>
<text x="987.69" y="162.00" font-size="12" text-anchor="start" textLength="15.78" lengthAdjust="spacingAndGlyphs" >40</text>
<path d="M1009 124.5H1013" stroke="#4a4a4a" stroke-width="1" shape-rendering="crispEdges"/>
<text x="987.58" y="128.00" font-size="12" text-anchor="start" textLength="15.89" lengthAdjust="spacingAndGlyphs" >60</text>
<path d="M1009 89.5H1013" stroke="#4a4a4a" stroke-width="1" shape-rendering="crispEdges"/>
<text x="987.66" y="93.00" font-size="12" text-anchor="start" textLength="15.81" lengthAdjust="spacingAndGlyphs" >80</text>
<path d="M1009 54.5H1013" stroke="#4a4a4a" stroke-width="1" shape-rendering="crispEdges"/>
<text x="979.58" y="58.00" font-size="12" text-anchor="start" textLength="23.87" lengthAdjust="spacingAndGlyphs" >100</text>
<text x="1118.51" y="260.50" font-size="12" text-anchor="start" textLength="8.56" lengthAdjust="spacingAndGlyphs" >X</text>
<text x="971.00" y="140.85" font-size="12" text-anchor="middle" textLength="7.91" lengthAdjust="spacingAndGlyphs" transform="rotate(-90 971 140.85)">Y</text>
</svg>
</body></html>
